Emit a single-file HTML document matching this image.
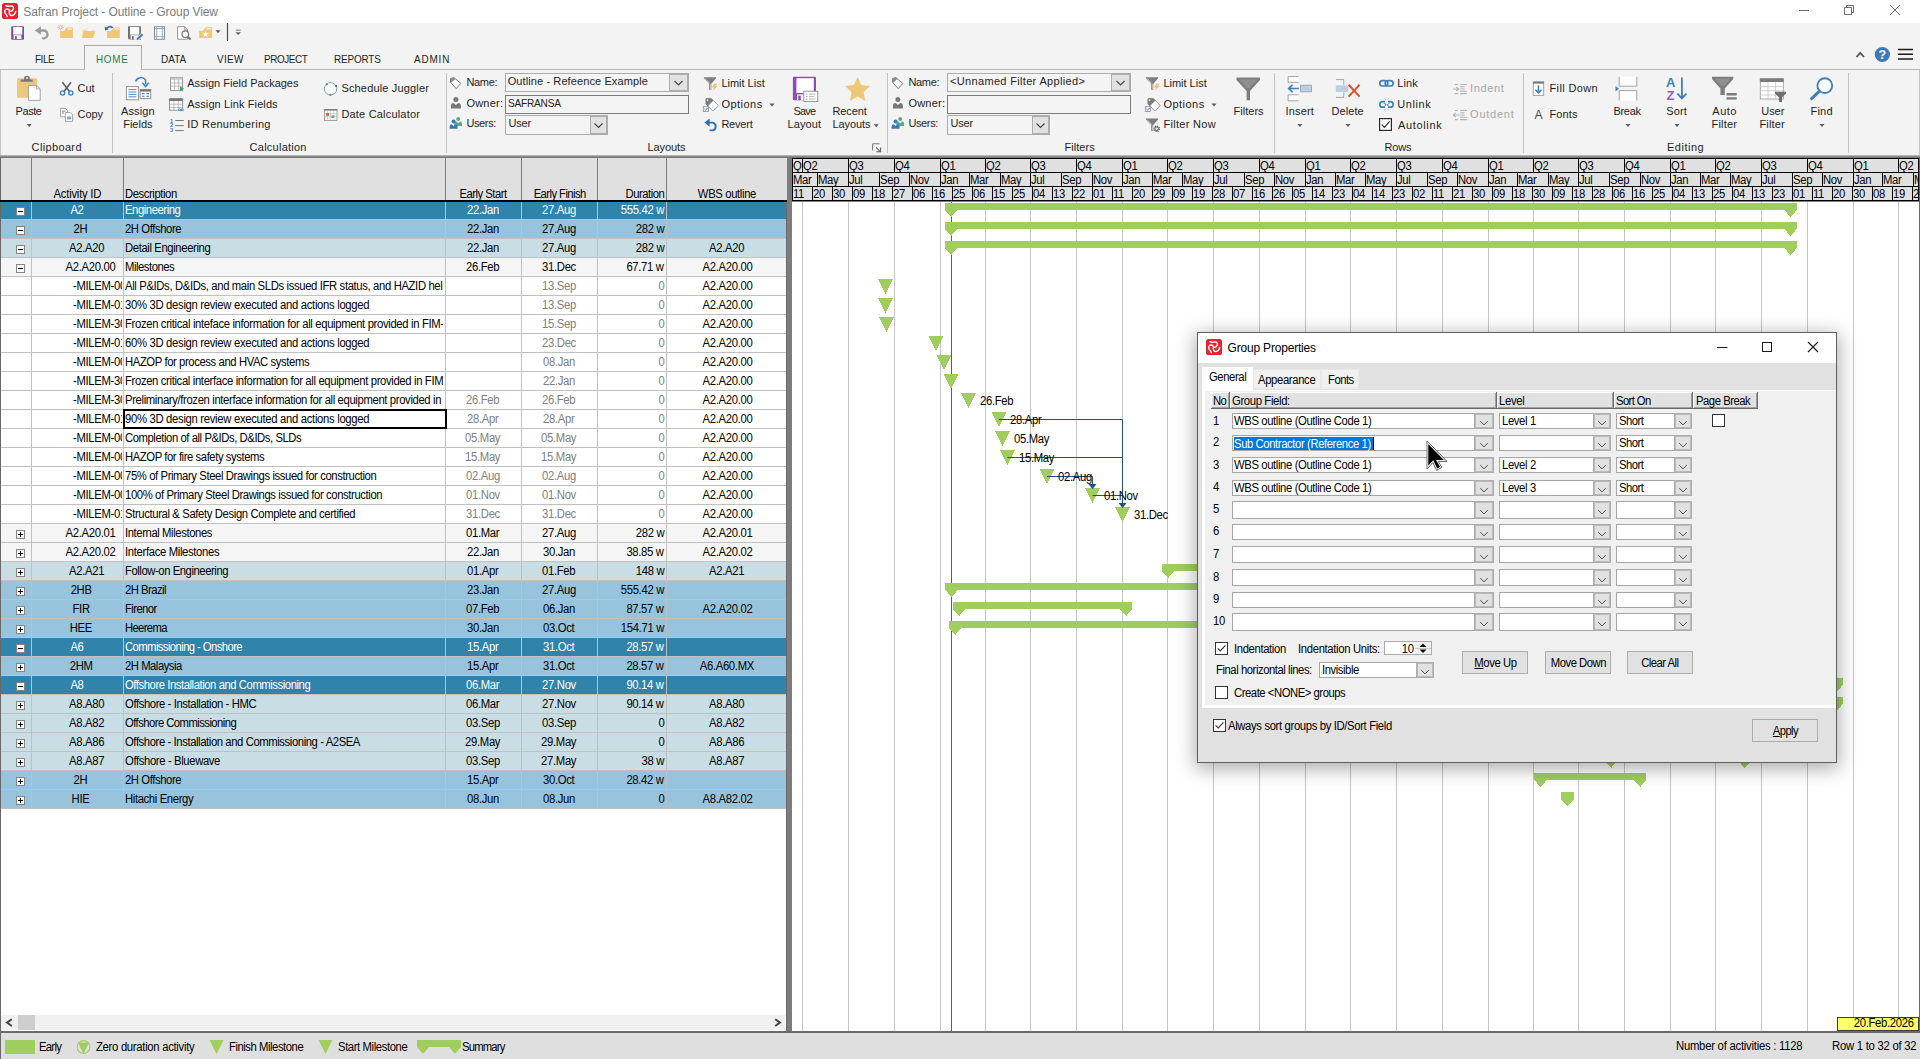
<!DOCTYPE html>
<html><head><meta charset="utf-8"><title>Safran Project - Outline - Group View</title>
<style>
html,body{margin:0;padding:0;}
body{width:1920px;height:1059px;overflow:hidden;background:#fff;position:relative;font-family:'Liberation Sans',sans-serif;}
body div,body svg{position:absolute;}
u{text-decoration:underline;}
</style></head><body>
<div style="left:0px;top:0px;width:1920px;height:23px;background:#ffffff;"></div>
<div style="left:0px;top:23px;width:1920px;height:133px;background:#f3f3f3;"></div>
<div style="left:0px;top:155px;width:1920px;height:1px;background:#b4b4b4;"></div>
<div style="left:0px;top:156px;width:1920px;height:1px;background:#8c8c8c;"></div>
<div style="left:0px;top:157px;width:1920px;height:1px;background:#787878;"></div>
<svg style="left:2px;top:3px" width="16" height="16" viewBox="0 0 16 16"><rect x="0" y="0" width="16" height="16" rx="2.6" fill="#e7222e"/><path d="M3.9 2.7C5.5 3.6 7.5 3 9.6 3C11.3 3 11.8 5 11.2 6.6C10.8 7.6 9.4 8.4 7.8 8.4C7.4 7 6.8 6.1 5.4 6C3.6 6 2.5 7.4 2.7 9C2.9 10.6 4.6 11.4 5.3 13.6M13.7 8.4C13.2 10.4 12 12.4 10 12.5C8 12.6 6.8 10.6 7.4 8.4" fill="none" stroke="#fff" stroke-width="1.45" stroke-linecap="round" stroke-linejoin="round"/></svg>
<div style="top:3.6px;height:16px;line-height:16px;font-size:12px;color:#7c7c7c;white-space:pre;letter-spacing:-0.087px;left:23.3px;">Safran Project - Outline - Group View</div>
<div style="left:0px;top:69px;width:1920px;height:1px;background:#b9b9b9;"></div>
<div style="left:84px;top:45px;width:58px;height:25px;background:#f3f3f3;border:1px solid #ababab;box-sizing:border-box;border-bottom:none;"></div>
<div style="left:0px;top:70px;width:1px;height:85px;background:#c6c6c6;"></div>
<div style="left:1919px;top:70px;width:1px;height:85px;background:#c6c6c6;"></div>
<div style="top:50.8px;height:16px;line-height:16px;font-size:11px;color:#1e1e1e;white-space:pre;letter-spacing:-0.48px;left:34.5px;"><span style="display:inline-block;transform:scaleX(0.9);transform-origin:0 50%">FILE</span></div>
<div style="top:50.8px;height:16px;line-height:16px;font-size:11px;color:#2b7a4b;white-space:pre;letter-spacing:0.794px;left:96.4px;"><span style="display:inline-block;transform:scaleX(0.9);transform-origin:0 50%">HOME</span></div>
<div style="top:50.8px;height:16px;line-height:16px;font-size:11px;color:#1e1e1e;white-space:pre;letter-spacing:0.08px;left:161.4px;"><span style="display:inline-block;transform:scaleX(0.9);transform-origin:0 50%">DATA</span></div>
<div style="top:50.8px;height:16px;line-height:16px;font-size:11px;color:#1e1e1e;white-space:pre;letter-spacing:0.345px;left:217.3px;"><span style="display:inline-block;transform:scaleX(0.9);transform-origin:0 50%">VIEW</span></div>
<div style="top:50.8px;height:16px;line-height:16px;font-size:11px;color:#1e1e1e;white-space:pre;letter-spacing:-0.429px;left:264.3px;"><span style="display:inline-block;transform:scaleX(0.9);transform-origin:0 50%">PROJECT</span></div>
<div style="top:50.8px;height:16px;line-height:16px;font-size:11px;color:#1e1e1e;white-space:pre;letter-spacing:-0.151px;left:334.2px;"><span style="display:inline-block;transform:scaleX(0.9);transform-origin:0 50%">REPORTS</span></div>
<div style="top:50.8px;height:16px;line-height:16px;font-size:11px;color:#1e1e1e;white-space:pre;letter-spacing:0.961px;left:414.2px;"><span style="display:inline-block;transform:scaleX(0.9);transform-origin:0 50%">ADMIN</span></div>
<div style="left:112px;top:73px;width:1px;height:80px;background:#c2c2c2;"></div>
<div style="left:446px;top:73px;width:1px;height:80px;background:#c2c2c2;"></div>
<div style="left:887px;top:73px;width:1px;height:80px;background:#c2c2c2;"></div>
<div style="left:1274px;top:73px;width:1px;height:80px;background:#c2c2c2;"></div>
<div style="left:1523px;top:73px;width:1px;height:80px;background:#c2c2c2;"></div>
<div style="left:1848px;top:73px;width:1px;height:80px;background:#c2c2c2;"></div>
<div style="top:138.7px;height:16px;line-height:16px;font-size:11px;color:#1e1e1e;white-space:pre;letter-spacing:0.354px;left:31.6px;">Clipboard</div>
<div style="top:138.7px;height:16px;line-height:16px;font-size:11px;color:#1e1e1e;white-space:pre;letter-spacing:0.246px;left:249.6px;">Calculation</div>
<div style="top:138.7px;height:16px;line-height:16px;font-size:11px;color:#1e1e1e;white-space:pre;letter-spacing:-0.082px;left:647.4px;">Layouts</div>
<div style="top:138.7px;height:16px;line-height:16px;font-size:11px;color:#1e1e1e;white-space:pre;letter-spacing:0.038px;left:1064.5px;">Filters</div>
<div style="top:138.7px;height:16px;line-height:16px;font-size:11px;color:#1e1e1e;white-space:pre;letter-spacing:-0.119px;left:1384.4px;">Rows</div>
<div style="top:138.7px;height:16px;line-height:16px;font-size:11px;color:#1e1e1e;white-space:pre;letter-spacing:0.517px;left:1667px;">Editing</div>
<div style="top:102.9px;height:16px;line-height:16px;font-size:11px;color:#1e1e1e;white-space:pre;letter-spacing:-0.409px;left:15.5px;">Paste</div>
<div style="top:79.8px;height:16px;line-height:16px;font-size:11px;color:#1e1e1e;white-space:pre;letter-spacing:0.03px;left:77.5px;">Cut</div>
<div style="top:105.6px;height:16px;line-height:16px;font-size:11px;color:#1e1e1e;white-space:pre;letter-spacing:-0.054px;left:77.5px;">Copy</div>
<div style="top:102.9px;height:16px;line-height:16px;font-size:11px;color:#1e1e1e;white-space:pre;letter-spacing:0.103px;left:121px;">Assign</div>
<div style="top:115.8px;height:16px;line-height:16px;font-size:11px;color:#1e1e1e;white-space:pre;letter-spacing:-0.008px;left:123.2px;">Fields</div>
<div style="top:74.9px;height:16px;line-height:16px;font-size:11px;color:#1e1e1e;white-space:pre;letter-spacing:0.001px;left:187.2px;">Assign Field Packages</div>
<div style="top:95.7px;height:16px;line-height:16px;font-size:11px;color:#1e1e1e;white-space:pre;letter-spacing:0.105px;left:187.2px;">Assign Link Fields</div>
<div style="top:115.7px;height:16px;line-height:16px;font-size:11px;color:#1e1e1e;white-space:pre;letter-spacing:0.237px;left:187.2px;">ID Renumbering</div>
<div style="top:80.0px;height:16px;line-height:16px;font-size:11px;color:#1e1e1e;white-space:pre;letter-spacing:0.167px;left:341.4px;">Schedule Juggler</div>
<div style="top:105.9px;height:16px;line-height:16px;font-size:11px;color:#1e1e1e;white-space:pre;letter-spacing:0.191px;left:341.4px;">Date Calculator</div>
<div style="top:73.8px;height:16px;line-height:16px;font-size:11px;color:#1e1e1e;white-space:pre;letter-spacing:-0.29px;left:466.4px;">Name:</div>
<div style="top:95.2px;height:16px;line-height:16px;font-size:11px;color:#1e1e1e;white-space:pre;letter-spacing:0.242px;left:466.4px;">Owner:</div>
<div style="top:115.1px;height:16px;line-height:16px;font-size:11px;color:#1e1e1e;white-space:pre;letter-spacing:-0.36px;left:466.4px;">Users:</div>
<div style="left:505px;top:73px;width:184px;height:19px;background:#f4f4f4;border:1px solid #ababab;box-sizing:border-box;"></div>
<div style="left:669px;top:74px;width:19px;height:17px;background:#e1e1e1;border:1px solid #adadad;box-sizing:border-box;"></div>
<div style="left:505px;top:95px;width:184px;height:19px;background:#f4f4f4;border:1px solid #7a7a7a;box-sizing:border-box;"></div>
<div style="left:505px;top:115px;width:103px;height:20px;background:#f4f4f4;border:1px solid #ababab;box-sizing:border-box;"></div>
<div style="left:590px;top:116px;width:17px;height:18px;background:#e1e1e1;border:1px solid #adadad;box-sizing:border-box;"></div>
<div style="top:115.1px;height:16px;line-height:16px;font-size:11px;color:#1e1e1e;white-space:pre;letter-spacing:-0.181px;left:508.4px;">User</div>
<div style="top:74.5px;height:16px;line-height:16px;font-size:11px;color:#1e1e1e;white-space:pre;letter-spacing:-0.011px;left:721.4px;">Limit List</div>
<div style="top:95.9px;height:16px;line-height:16px;font-size:11px;color:#1e1e1e;white-space:pre;letter-spacing:0.474px;left:721.4px;">Options</div>
<div style="top:73.8px;height:16px;line-height:16px;font-size:11px;color:#1e1e1e;white-space:pre;letter-spacing:-0.29px;left:908.4px;">Name:</div>
<div style="top:95.2px;height:16px;line-height:16px;font-size:11px;color:#1e1e1e;white-space:pre;letter-spacing:0.242px;left:908.4px;">Owner:</div>
<div style="top:115.1px;height:16px;line-height:16px;font-size:11px;color:#1e1e1e;white-space:pre;letter-spacing:-0.36px;left:908.4px;">Users:</div>
<div style="left:947px;top:73px;width:184px;height:19px;background:#f4f4f4;border:1px solid #ababab;box-sizing:border-box;"></div>
<div style="left:1111px;top:74px;width:19px;height:17px;background:#e1e1e1;border:1px solid #adadad;box-sizing:border-box;"></div>
<div style="left:947px;top:95px;width:184px;height:19px;background:#f4f4f4;border:1px solid #7a7a7a;box-sizing:border-box;"></div>
<div style="left:947px;top:115px;width:103px;height:20px;background:#f4f4f4;border:1px solid #ababab;box-sizing:border-box;"></div>
<div style="left:1032px;top:116px;width:17px;height:18px;background:#e1e1e1;border:1px solid #adadad;box-sizing:border-box;"></div>
<div style="top:115.1px;height:16px;line-height:16px;font-size:11px;color:#1e1e1e;white-space:pre;letter-spacing:-0.181px;left:950.4px;">User</div>
<div style="top:74.5px;height:16px;line-height:16px;font-size:11px;color:#1e1e1e;white-space:pre;letter-spacing:-0.011px;left:1163.4px;">Limit List</div>
<div style="top:95.9px;height:16px;line-height:16px;font-size:11px;color:#1e1e1e;white-space:pre;letter-spacing:0.474px;left:1163.4px;">Options</div>
<div style="top:73.1px;height:16px;line-height:16px;font-size:11px;color:#1e1e1e;white-space:pre;letter-spacing:0.103px;left:507.7px;">Outline - Refeence Example</div>
<div style="top:95.2px;height:16px;line-height:16px;font-size:11px;color:#1e1e1e;white-space:pre;letter-spacing:-0.254px;left:507.7px;"><span style="display:inline-block;transform:scaleX(0.92);transform-origin:0 50%">SAFRANSA</span></div>
<div style="top:73.1px;height:16px;line-height:16px;font-size:11px;color:#1e1e1e;white-space:pre;letter-spacing:0.332px;left:950px;">&lt;Unnamed Filter Applied&gt;</div>
<div style="top:115.8px;height:16px;line-height:16px;font-size:11px;color:#1e1e1e;white-space:pre;letter-spacing:-0.219px;left:721.4px;">Revert</div>
<div style="top:115.8px;height:16px;line-height:16px;font-size:11px;color:#1e1e1e;white-space:pre;letter-spacing:0.304px;left:1163.4px;">Filter Now</div>
<div style="top:102.9px;height:16px;line-height:16px;font-size:11px;color:#1e1e1e;white-space:pre;letter-spacing:-0.851px;left:793.6px;">Save</div>
<div style="top:115.8px;height:16px;line-height:16px;font-size:11px;color:#1e1e1e;white-space:pre;letter-spacing:0.085px;left:787.5px;">Layout</div>
<div style="top:102.9px;height:16px;line-height:16px;font-size:11px;color:#1e1e1e;white-space:pre;letter-spacing:-0.102px;left:832.4px;">Recent</div>
<div style="top:115.8px;height:16px;line-height:16px;font-size:11px;color:#1e1e1e;white-space:pre;letter-spacing:-0.082px;left:832.4px;">Layouts</div>
<div style="top:102.9px;height:16px;line-height:16px;font-size:11px;color:#1e1e1e;white-space:pre;letter-spacing:0.023px;left:1233.5px;">Filters</div>
<div style="top:102.9px;height:16px;line-height:16px;font-size:11px;color:#1e1e1e;white-space:pre;letter-spacing:0.161px;left:1285.6px;">Insert</div>
<div style="top:102.9px;height:16px;line-height:16px;font-size:11px;color:#1e1e1e;white-space:pre;letter-spacing:0.055px;left:1331.6px;">Delete</div>
<div style="top:74.5px;height:16px;line-height:16px;font-size:11px;color:#1e1e1e;white-space:pre;letter-spacing:0.118px;left:1397.3px;">Link</div>
<div style="top:95.9px;height:16px;line-height:16px;font-size:11px;color:#1e1e1e;white-space:pre;letter-spacing:0.586px;left:1397.3px;">Unlink</div>
<div style="top:116.7px;height:16px;line-height:16px;font-size:11px;color:#1e1e1e;white-space:pre;letter-spacing:0.648px;left:1398px;">Autolink</div>
<div style="top:80.3px;height:16px;line-height:16px;font-size:11px;color:#a6a6a6;white-space:pre;letter-spacing:0.601px;left:1470.1px;">Indent</div>
<div style="top:106.0px;height:16px;line-height:16px;font-size:11px;color:#a6a6a6;white-space:pre;letter-spacing:0.748px;left:1470.1px;">Outdent</div>
<div style="top:80.3px;height:16px;line-height:16px;font-size:11px;color:#1e1e1e;white-space:pre;letter-spacing:0.372px;left:1549.5px;">Fill Down</div>
<div style="top:106.0px;height:16px;line-height:16px;font-size:11px;color:#1e1e1e;white-space:pre;letter-spacing:0.108px;left:1549.5px;">Fonts</div>
<div style="top:102.9px;height:16px;line-height:16px;font-size:11px;color:#1e1e1e;white-space:pre;letter-spacing:-0.278px;left:1613.4px;">Break</div>
<div style="top:102.9px;height:16px;line-height:16px;font-size:11px;color:#1e1e1e;white-space:pre;letter-spacing:0.118px;left:1666.2px;">Sort</div>
<div style="top:102.9px;height:16px;line-height:16px;font-size:11px;color:#1e1e1e;white-space:pre;letter-spacing:0.503px;left:1712.3px;">Auto</div>
<div style="top:115.8px;height:16px;line-height:16px;font-size:11px;color:#1e1e1e;white-space:pre;letter-spacing:0.172px;left:1711.6px;">Filter</div>
<div style="top:102.9px;height:16px;line-height:16px;font-size:11px;color:#1e1e1e;white-space:pre;letter-spacing:-0.067px;left:1761.3px;">User</div>
<div style="top:115.8px;height:16px;line-height:16px;font-size:11px;color:#1e1e1e;white-space:pre;letter-spacing:0.172px;left:1759.4px;">Filter</div>
<div style="top:102.9px;height:16px;line-height:16px;font-size:11px;color:#1e1e1e;white-space:pre;letter-spacing:0.284px;left:1810.4px;">Find</div>
<svg style="left:0;top:0" width="1920" height="158" viewBox="0 0 1920 158"><path d="M1799 10.5H1809" stroke="#6e6e6e" stroke-width="1"/><path d="M1844.5 7.5H1851.5V14.5H1844.5Z M1846.5 7.5V5.5H1853.5V12.5H1851.5" fill="none" stroke="#6e6e6e" stroke-width="1"/><path d="M1890 5L1900 15M1900 5L1890 15" stroke="#6e6e6e" stroke-width="1"/><path d="M1856.5 57L1860.2 52.8L1864 57" fill="none" stroke="#555" stroke-width="1.8"/><circle cx="1882.4" cy="54.5" r="7.6" fill="#3e78b8"/><text x="1882.4" y="59" font-family="Liberation Sans,sans-serif" font-size="12.5" font-weight="700" fill="#fff" text-anchor="middle">?</text><path d="M1898 49.5H1913M1898 54.3H1913M1898 59H1913" stroke="#1a1a1a" stroke-width="1.6"/><path d="M26.7 124H31.7L29.2 127Z" fill="#5a5a5a"/><path d="M1297.4 124H1302.4L1299.9 127Z" fill="#5a5a5a"/><path d="M1345.5 124H1350.5L1348 127Z" fill="#5a5a5a"/><path d="M1625.5 124H1630.5L1628 127Z" fill="#5a5a5a"/><path d="M1674.5 124H1679.5L1677 127Z" fill="#5a5a5a"/><path d="M1819.5 124H1824.5L1822 127Z" fill="#5a5a5a"/><path d="M873.7 124.2H878.7L876.2 127.2Z" fill="#5a5a5a"/><path d="M769.5 103.5H774.5L772 106.5Z" fill="#5a5a5a"/><path d="M1211.5 103.5H1216.5L1214 106.5Z" fill="#5a5a5a"/><path d="M215.5 30.3H220.5L218 33.3Z" fill="#5a5a5a"/><path d="M674.5 81L678.5 85L682.5 81" fill="none" stroke="#444" stroke-width="1.1"/><path d="M1116.5 81L1120.5 85L1124.5 81" fill="none" stroke="#444" stroke-width="1.1"/><path d="M594.5 123.5L598.5 127.5L602.5 123.5" fill="none" stroke="#444" stroke-width="1.1"/><path d="M1036.5 123.5L1040.5 127.5L1044.5 123.5" fill="none" stroke="#444" stroke-width="1.1"/><path d="M227.5 23V41" stroke="#4a4a4a" stroke-width="1.2"/><path d="M235.8 30.2H240.6" stroke="#777" stroke-width="1"/><path d="M235.4 32.2H241L238.2 35.1Z" fill="#666"/><rect x="11.2" y="26.2" width="12.8" height="13.5" rx="0.9" fill="#8348a5"/><rect x="13.2" y="27.0" width="9.1" height="7.6" fill="#fff"/><rect x="13.6" y="35.2" width="7.8" height="3.8" fill="#fff"/><rect x="15.0" y="36.2" width="1.8" height="2.8" fill="#8348a5"/><path d="M39 30.5H43.6A3.9 3.9 0 0 1 43.6 38.3H43" fill="none" stroke="#9a9a9a" stroke-width="2.3" stroke-linecap="round"/><path d="M34.9 30.5L40.8 26.2V34.8Z" fill="#9a9a9a"/><path d="M60.1 30.9H64.0L66.5 27.5H72.9V37.9H60.1Z" fill="#eec77a"/><path d="M67.4 29.0H72.2" stroke="#fff" stroke-width="0.9"/><circle cx="60.6" cy="27.5" r="1.5" fill="#fff" stroke="#e3ad45" stroke-width="0.9"/><path d="M60.6 24.6V25.4M60.6 29.6V30.4M57.7 27.5H58.5M62.7 27.5H63.5M58.5 25.4L59.1 26M62.7 25.4L62.1 26M58.5 29.6L59.1 29" stroke="#e3ad45" stroke-width="0.9"/><path d="M82.3 29.6H86.3L87.6 27.9H92.8V37.9H82.3Z" fill="#f3dca8"/><path d="M87.4 28.4H92.3V31H87.4Z" fill="#fff"/><path d="M84 31.1H95.5L93.1 37.9H81.9Z" fill="#eec77a"/><path d="M107 30.9H110.9L113.4 27.5H119.8V37.9H107Z" fill="#eec77a"/><path d="M114.3 29.0H119.1" stroke="#fff" stroke-width="0.9"/><path d="M106.4 29.3A3.6 3.6 0 0 1 112.6 27.9" fill="none" stroke="#2f6fb5" stroke-width="1.7"/><path d="M104.7 26.6L105 30.5L108.7 29.6Z" fill="#2f6fb5"/><path d="M128 26.2H140.9V39.7H130.5Q128 39.7 128 37Z" fill="#6e6e6e"/><rect x="130" y="27" width="9.2" height="7.6" fill="#fff"/><rect x="130.6" y="35.2" width="7.6" height="4.5" fill="#fff"/><rect x="132" y="36.2" width="1.8" height="3.5" fill="#6e6e6e"/><path d="M137 39.5L142.6 34.2" stroke="#f3f3f3" stroke-width="3.6"/><path d="M137 39.6L142.6 34.3" stroke="#3a78c0" stroke-width="2"/><rect x="154.5" y="26.7" width="10" height="12.6" fill="#fff" stroke="#8a8a8a" stroke-width="1"/><path d="M156.7 27V39M162.3 27V39M155 28.5H164M155 36.6H164" stroke="#7aa5da" stroke-width="0.9"/><path d="M177.6 26.7H184.6L187.5 29.8V39.2H177.6Z" fill="#fff" stroke="#8a8a8a" stroke-width="0.9"/><path d="M184.6 26.7V29.8H187.5" fill="none" stroke="#8a8a8a" stroke-width="0.8"/><circle cx="185.3" cy="34.2" r="3.3" fill="#fff" stroke="#6e6e6e" stroke-width="1.1"/><path d="M187.7 36.7L190.6 39.5" stroke="#6e6e6e" stroke-width="1.9"/><path d="M199.2 30.7H203.1L205.6 27.3H212.1V38.0H199.2Z" fill="#eec77a"/><path d="M206.5 28.8H211.4" stroke="#fff" stroke-width="0.9"/><polygon points="205.60,30.90 206.48,33.09 208.83,33.25 207.03,34.76 207.60,37.05 205.60,35.80 203.60,37.05 204.17,34.76 202.37,33.25 204.72,33.09" fill="#fff"/><rect x="17" y="78.2" width="20" height="19.5" rx="1" fill="#eec77a"/><path d="M20.8 81.8V79.4H24.2V77.6Q24.2 76 25.8 76H28.2Q29.8 76 29.8 77.6V79.4H32.8V81.8Z" fill="#777"/><circle cx="27" cy="78" r="0.95" fill="#f3f3f3"/><path d="M28.4 85.4H36.6L40.2 89V100.4H28.4Z" fill="#fff" stroke="#9a9a9a" stroke-width="0.9"/><path d="M36.6 85.4V89H40.2" fill="none" stroke="#9a9a9a" stroke-width="0.8"/><path d="M62.4 82.3L69.8 92M71 82.3L63.6 92" stroke="#5a5a5a" stroke-width="1.5"/><circle cx="62.6" cy="93" r="2.1" fill="none" stroke="#3f7fc0" stroke-width="1.3"/><circle cx="70.8" cy="93" r="2.1" fill="none" stroke="#3f7fc0" stroke-width="1.3"/><path d="M60.6 108.4H65.4L67.6 110.6V116.8H60.6Z" fill="#fff" stroke="#8a8a8a" stroke-width="0.8"/><path d="M62 111.2H65.2M62 113H64" stroke="#3f7fc0" stroke-width="0.9"/><path d="M65.4 112.6H70.4L72.6 114.8V121.4H65.4Z" fill="#fff" stroke="#8a8a8a" stroke-width="0.8"/><path d="M67 117.2H71M67 118.8H71" stroke="#3f7fc0" stroke-width="1"/><rect x="126.4" y="86.6" width="12" height="13.2" fill="#fff" stroke="#8a8a8a" stroke-width="0.9"/><path d="M128.4 89.6H136.4M128.4 92H136.4M128.4 94.4H136.4M128.4 96.8H136.4" stroke="#3f7fc0" stroke-width="0.9"/><rect x="140.2" y="89.4" width="10.6" height="9.2" fill="#fff" stroke="#8a8a8a" stroke-width="0.9"/><rect x="140.2" y="89.4" width="10.6" height="2.2" fill="#777"/><path d="M142 93.6H144.6M146.4 93.6H149M142 96.2H144.6M146.4 96.2H149" stroke="#3f7fc0" stroke-width="1.1"/><path d="M135.6 81.4A5.6 5.6 0 0 1 145.6 80.2V84.6" fill="none" stroke="#3f7fc0" stroke-width="1.5"/><path d="M142.4 82.8L145.6 86.6L148.8 82.8" fill="none" stroke="#3f7fc0" stroke-width="1.5"/><rect x="170.6" y="77.4" width="12" height="13.2" fill="#fff" stroke="#8a8a8a" stroke-width="0.9"/><rect x="170.6" y="77.4" width="12" height="2.4" fill="#c8c8c8"/><path d="M170.6 83.0H182.6M170.6 86.2H182.6M174.6 79.8V90.6M178.6 79.8V90.6" stroke="#a0a0a0" stroke-width="0.7"/><path d="M180 86.2L184 88.7L180 91.2Z" fill="#3ea36f"/><rect x="169.5" y="98.6" width="13.2" height="11.6" fill="#fff" stroke="#8a8a8a" stroke-width="0.9"/><rect x="169.5" y="98.6" width="13.2" height="2.4" fill="#777"/><path d="M169.5 104.2H182.7M169.5 107.4H182.7M173.9 101.0V110.2M178.3 101.0V110.2" stroke="#a0a0a0" stroke-width="0.7"/><rect x="177.2" y="108.6" width="6.6" height="3.2" rx="1.4" fill="#f3f3f3"/><path d="M178.2 110.2A1.3 1.3 0 0 1 180.8 110.2A1.3 1.3 0 0 1 183.4 110.2" fill="none" stroke="#3f7fc0" stroke-width="1"/><path d="M178.2 110.6H183.4" stroke="#3f7fc0" stroke-width="0.9"/><text x="170" y="122.6" font-family="Liberation Sans,sans-serif" font-size="5.6" font-weight="700" fill="#3f7fc0">1</text><text x="170" y="127.4" font-family="Liberation Sans,sans-serif" font-size="5.6" font-weight="700" fill="#3f7fc0">2</text><text x="170" y="132.2" font-family="Liberation Sans,sans-serif" font-size="5.6" font-weight="700" fill="#3f7fc0">3</text><path d="M175.2 120.5H183.8M175.2 125.6H183.8M175.2 130.6H183.8" stroke="#777" stroke-width="1"/><circle cx="330.6" cy="88.8" r="6.2" fill="#fff" stroke="#6b9bd6" stroke-width="0.9"/><circle cx="326.8" cy="84.4" r="1.05" fill="#777"/><circle cx="336.1" cy="85.9" r="1.1" fill="#666"/><circle cx="330.3" cy="94.9" r="1.05" fill="#777"/><rect x="324.4" y="109.6" width="12.6" height="10.8" fill="#fff" stroke="#8a8a8a" stroke-width="0.8"/><rect x="324" y="109.2" width="13.4" height="1.4" fill="#777"/><path d="M327.4 110.6V120.4M330.6 110.6V120.4M333.8 110.6V120.4M324.4 113.6H337M324.4 116.8H337" stroke="#b5b5b5" stroke-width="0.6"/><rect x="326.2" y="113.2" width="2.8" height="2.6" fill="#e0502c"/><rect x="331.4" y="115.4" width="2.8" height="2.6" fill="#5aa784"/><path d="M450.4 78.6L453.8 77.6L460.8 83.4L456.2 88.6L450.6 82.4Z" fill="#fff" stroke="#7a7a7a" stroke-width="1"/><path d="M450.4 78.6L453.8 77.6L455.4 79L451.4 82.6L450.6 82.4Z" fill="#8a8a8a"/><circle cx="455.9" cy="99.5" r="2.5" fill="#777"/><path d="M450.9 108.5V105.9Q450.9 102.9 453.5 102.9L455.9 105.1L458.3 102.9Q460.9 102.9 460.9 105.9V108.5Z" fill="#777"/><circle cx="458.2" cy="118.93" r="1.95" fill="#5aa784"/><path d="M454.3 125.95V123.92Q454.3 121.58 456.328 121.58L458.2 123.296L460.072 121.58Q462.1 121.58 462.1 123.92V125.95Z" fill="#5aa784"/><circle cx="453.6" cy="121.58" r="2.0" fill="#3b78ba"/><path d="M449.6 128.78V126.7Q449.6 124.3 451.68 124.3L453.6 126.06L455.52 124.3Q457.6 124.3 457.6 126.7V128.78Z" fill="#3b78ba"/><path d="M703.9 77.3H716.1V78.2L711.3 83.7V89.8H709.1V83.7L703.9 78.2Z" fill="#7d7d7d"/><rect x="709.8" y="84.1" width="0.9" height="5.2" fill="#dcdcdc"/><path d="M705.2 78.4L709.6 83.4" stroke="#f3f3f3" stroke-width="0.7"/><path d="M714.4 83.8L711.9 87.4H714.1L712.6 90.8L717.6 85.8H715.2L717.8 83.8Z" fill="#f0bf68"/><path d="M705.9 99.2Q705.9 98.4 706.8 98.4H711.2L717.9 105.1Q718.4 105.7 717.8 106.3L713.6 110.6Q713 111.2 712.4 110.6L705.9 104Z" fill="#fff" stroke="#8a8a8a" stroke-width="0.9"/><path d="M705.9 99.2Q705.9 98.4 706.8 98.4H711.2L713.4 100.6L707.8 106.2L705.9 104Z" fill="#7d7d7d"/><circle cx="707.5" cy="100.2" r="0.8" fill="#fff"/><rect x="703.3" y="106.7" width="5.2" height="4.8" fill="#f3f3f3" stroke="#8a8a8a" stroke-width="0.8"/><path d="M704.4 109L705.6 110.2L707.8 107.8" fill="none" stroke="#3f7fc0" stroke-width="1"/><path d="M708 122.6H712.6A4 4 0 0 1 712.6 130.4H709.6" fill="none" stroke="#2f6fb5" stroke-width="1.9"/><path d="M704.4 122.6L709.6 118.4V126.8Z" fill="#2f6fb5"/><rect x="792.9" y="76.8" width="23.1" height="23.4" rx="1.2" fill="#8c4bb5"/><rect x="796.4" y="78.2" width="17.4" height="14.8" fill="#fff"/><rect x="797" y="94.4" width="9" height="5.8" fill="#fff"/><rect x="798.2" y="95.6" width="2.6" height="4.6" fill="#8c4bb5"/><rect x="803.8" y="91.2" width="14" height="10.4" fill="#fff" stroke="#8a8a8a" stroke-width="0.9"/><path d="M806 94.2H807.4M806 96.6H807.4M806 99H807.4" stroke="#8a8a8a" stroke-width="0.9"/><path d="M809 94.2H815.6M809 96.6H814.4M809 99H815.6" stroke="#b0b0b0" stroke-width="0.9"/><polygon points="857.60,77.00 861.30,85.10 870.15,86.12 863.59,92.15 865.36,100.88 857.60,96.50 849.84,100.88 851.61,92.15 845.05,86.12 853.90,85.10" fill="#efc779"/><path d="M872.6 150.6V143.8H879.6" fill="none" stroke="#777" stroke-width="1"/><path d="M876 147.4L880 151.4M880.6 147.6V151.8H876.4" fill="none" stroke="#666" stroke-width="1.1"/><path d="M892.4 78.6L895.8 77.6L902.8 83.4L898.2 88.6L892.6 82.4Z" fill="#fff" stroke="#7a7a7a" stroke-width="1"/><path d="M892.4 78.6L895.8 77.6L897.4 79L893.4 82.6L892.6 82.4Z" fill="#8a8a8a"/><circle cx="897.9" cy="99.5" r="2.5" fill="#777"/><path d="M892.9 108.5V105.9Q892.9 102.9 895.5 102.9L897.9 105.1L900.3 102.9Q902.9 102.9 902.9 105.9V108.5Z" fill="#777"/><circle cx="900.2" cy="118.93" r="1.95" fill="#5aa784"/><path d="M896.3 125.95V123.92Q896.3 121.58 898.33 121.58L900.2 123.296L902.072 121.58Q904.1 121.58 904.1 123.92V125.95Z" fill="#5aa784"/><circle cx="895.6" cy="121.58" r="2.0" fill="#3b78ba"/><path d="M891.6 128.78V126.7Q891.6 124.3 893.68 124.3L895.6 126.06L897.52 124.3Q899.6 124.3 899.6 126.7V128.78Z" fill="#3b78ba"/><path d="M1145.9 77.3H1158.1V78.2L1153.3 83.7V89.8H1151.1V83.7L1145.9 78.2Z" fill="#7d7d7d"/><rect x="1151.8" y="84.1" width="0.9" height="5.2" fill="#dcdcdc"/><path d="M1147.2 78.4L1151.6 83.4" stroke="#f3f3f3" stroke-width="0.7"/><path d="M1156.4 83.8L1153.9 87.4H1156.1L1154.6 90.8L1159.6 85.8H1157.2L1159.8 83.8Z" fill="#f0bf68"/><path d="M1147.9 99.2Q1147.9 98.4 1148.8 98.4H1153.2L1159.9 105.1Q1160.4 105.7 1159.8 106.3L1155.6 110.6Q1155 111.2 1154.4 110.6L1147.9 104Z" fill="#fff" stroke="#8a8a8a" stroke-width="0.9"/><path d="M1147.9 99.2Q1147.9 98.4 1148.8 98.4H1153.2L1155.4 100.6L1149.8 106.2L1147.9 104Z" fill="#7d7d7d"/><circle cx="1149.5" cy="100.2" r="0.8" fill="#fff"/><rect x="1145.3" y="106.7" width="5.2" height="4.8" fill="#f3f3f3" stroke="#8a8a8a" stroke-width="0.8"/><path d="M1146.4 109L1147.6 110.2L1149.8 107.8" fill="none" stroke="#3f7fc0" stroke-width="1"/><path d="M1145.9 118.5H1158.1V119.4L1153.3 124.9V131.0H1151.1V124.9L1145.9 119.4Z" fill="#7d7d7d"/><rect x="1151.8" y="125.3" width="0.9" height="5.2" fill="#dcdcdc"/><path d="M1147.2 119.6L1151.6 124.6" stroke="#f3f3f3" stroke-width="0.7"/><circle cx="1156.7" cy="128.8" r="3.3" fill="#f3f3f3"/><circle cx="1156.7" cy="128.8" r="2.7" fill="none" stroke="#555" stroke-width="1.2" stroke-dasharray="1.1 1.02"/><circle cx="1156.7" cy="128.8" r="1.8" fill="#f3f3f3" stroke="#555" stroke-width="1"/><path d="M1236.5 77.5H1260V80L1250 91V100.2H1246.6V91L1236.5 80Z" fill="#7d7d7d"/><path d="M1239.4 79.6H1257.2L1249.2 88.2H1247.4Z" fill="#8f8f8f"/><path d="M1298.6 76.6H1288.1V82.4H1298.6 M1298.6 94.8H1288.1V100.8H1298.6" fill="#fff" stroke="#9a9a9a" stroke-width="0.9"/><rect x="1300.6" y="85.2" width="10.8" height="6.6" fill="#b9cfe8" stroke="#9a9a9a" stroke-width="0.8"/><path d="M1288.6 88.5H1298.8M1292.6 84.8L1288.6 88.5L1292.6 92.2" fill="none" stroke="#3f7fc0" stroke-width="1.6"/><path d="M1336 79.6H1343.8V85 M1336 97.4H1343.8V92.4" fill="none" stroke="#9a9a9a" stroke-width="0.9"/><rect x="1335.8" y="85.4" width="12.6" height="6.6" fill="#b9cfe8"/><path d="M1348.6 84.8L1359.6 96.6M1359.6 84.8L1348.6 96.6" stroke="#d9532c" stroke-width="2"/><rect x="1379.8" y="80.6" width="8" height="5.4" rx="2.7" fill="none" stroke="#3f7fc0" stroke-width="1.7"/><rect x="1385.2" y="80.6" width="8" height="5.4" rx="2.7" fill="none" stroke="#3f7fc0" stroke-width="1.7"/><path d="M1385 101.6H1382.6A2.8 2.8 0 0 0 1382.6 107.2H1385M1388 101.6H1390.4A2.8 2.8 0 0 1 1390.4 107.2H1388" fill="none" stroke="#3f7fc0" stroke-width="1.7"/><path d="M1383.6 103.2L1386 104.4L1385 106M1389.6 103.2L1387.2 104.6L1388.2 106" fill="none" stroke="#3f7fc0" stroke-width="1"/><path d="M1384.4 98.2L1385.6 100M1388.8 98.2L1387.6 100M1384.4 110.6L1385.6 108.8M1388.8 110.6L1387.6 108.8" stroke="#9cc0e6" stroke-width="0.9"/><rect x="1379.6" y="118.6" width="11.8" height="11.8" fill="#fff" stroke="#2a2a2a" stroke-width="1.2"/><path d="M1381.8 124.6L1384.4 127.4L1389.6 121.4" fill="none" stroke="#2a2a2a" stroke-width="1.2"/><path d="M1454.9 84.5H1458.2M1460.1 84.5H1467M1460.3 86.7H1464.6M1460.3 89.0H1464.6M1460.1 91.3H1467M1454.9 93.6H1458.2M1460.1 93.6H1467" stroke="#b4b4b4" stroke-width="1.1"/><path d="M1453 89.0H1458.4M1456.2 86.9L1458.6 89.0L1456.2 91.1" fill="none" stroke="#b4b4b4" stroke-width="1.2"/><path d="M1454.9 110.5H1458.2M1460.1 110.5H1467M1460.3 112.7H1464.6M1460.3 115.0H1464.6M1460.1 117.3H1467M1454.9 119.6H1458.2M1460.1 119.6H1467" stroke="#b4b4b4" stroke-width="1.1"/><path d="M1453.4 115.0H1459.6M1455.8 112.9L1453.4 115.0L1455.8 117.1" fill="none" stroke="#b4b4b4" stroke-width="1.2"/><rect x="1533.3" y="82" width="10.4" height="13.4" fill="#fff" stroke="#9a9a9a" stroke-width="0.9"/><rect x="1533" y="81.6" width="11" height="2" fill="#777"/><path d="M1538.5 85.6V92.6M1535.4 89.8L1538.5 92.8L1541.6 89.8" fill="none" stroke="#3f7fc0" stroke-width="1.6"/><text x="1538.6" y="118.8" font-family="Liberation Sans,sans-serif" font-size="12" fill="#4a4a4a" text-anchor="middle">A</text><path d="M1619.2 76.8V86.2H1636.8V76.8 M1619.2 100.5V90.6H1636.8V100.5" fill="#fff" stroke="#9a9a9a" stroke-width="0.9"/><path d="M1615.5 86L1619 88.8L1615.5 91.6Z" fill="#3f7fc0"/><text x="1670.6" y="87.4" font-family="Liberation Sans,sans-serif" font-size="13" font-weight="700" fill="#3f7fc0" text-anchor="middle">A</text><text x="1670.4" y="99.8" font-family="Liberation Sans,sans-serif" font-size="13" font-weight="700" fill="#9b59b6" text-anchor="middle">Z</text><path d="M1681.9 77.4V98M1677.4 93.6L1681.9 98.4L1686.4 93.6" fill="none" stroke="#3f7fc0" stroke-width="1.8"/><path d="M1712 76.8H1733.3V79L1724.8 88.4V95H1720.4V88.4L1712 79Z" fill="#7d7d7d"/><path d="M1714.6 78.8H1730.6L1724 86H1721.4Z" fill="#8f8f8f"/><path d="M1726.5 94.2H1736.7M1726.5 98.4H1736.7" stroke="#7d7d7d" stroke-width="2.4"/><rect x="1760.3" y="78.8" width="23" height="20.2" fill="#fff" stroke="#a0a0a0" stroke-width="0.9"/><rect x="1759.9" y="78.4" width="23.8" height="3.6" fill="#7a7a7a"/><path d="M1760.3 86.6H1783.3M1760.3 90.8H1783.3M1760.3 95H1783.3M1768 82V99M1775.6 82V99" stroke="#c4c4c4" stroke-width="0.8"/><path d="M1775 91.8H1786V93.4L1782 97.4V102H1779V97.4L1775 93.4Z" fill="#6e6e6e"/><circle cx="1824.8" cy="85.6" r="7.4" fill="#fff" stroke="#3f7fc0" stroke-width="1.9"/><path d="M1819.2 91.4L1811.6 98.6" stroke="#3f7fc0" stroke-width="3" stroke-linecap="round"/></svg>
<div style="left:0px;top:158px;width:1px;height:901px;background:#696969;"></div>
<div style="left:1px;top:158px;width:786px;height:42px;background:#e0e0e0;"></div>
<div style="left:0px;top:200px;width:787px;height:2px;background:#000000;"></div>
<div style="left:31px;top:158px;width:1px;height:42px;background:#7a7a7a;"></div>
<div style="left:123px;top:158px;width:1px;height:42px;background:#7a7a7a;"></div>
<div style="left:445px;top:158px;width:1px;height:42px;background:#7a7a7a;"></div>
<div style="left:521px;top:158px;width:1px;height:42px;background:#7a7a7a;"></div>
<div style="left:597px;top:158px;width:1px;height:42px;background:#7a7a7a;"></div>
<div style="left:666px;top:158px;width:1px;height:42px;background:#7a7a7a;"></div>
<div style="top:185.5px;height:16px;line-height:16px;font-size:12px;color:#000;white-space:pre;letter-spacing:-0.237px;left:-123px;width:400px;text-align:center;"><span style="display:inline-block;transform:scaleX(0.94);transform-origin:50% 50%">Activity ID</span></div>
<div style="top:185.5px;height:16px;line-height:16px;font-size:12px;color:#000;white-space:pre;letter-spacing:-0.449px;left:125px;"><span style="display:inline-block;transform:scaleX(0.94);transform-origin:0 50%">Description</span></div>
<div style="top:185.5px;height:16px;line-height:16px;font-size:12px;color:#000;white-space:pre;letter-spacing:-0.543px;left:283px;width:400px;text-align:center;"><span style="display:inline-block;transform:scaleX(0.94);transform-origin:50% 50%">Early Start</span></div>
<div style="top:185.5px;height:16px;line-height:16px;font-size:12px;color:#000;white-space:pre;letter-spacing:-0.604px;left:359.5px;width:400px;text-align:center;"><span style="display:inline-block;transform:scaleX(0.94);transform-origin:50% 50%">Early Finish</span></div>
<div style="top:185.5px;height:16px;line-height:16px;font-size:12px;color:#000;white-space:pre;letter-spacing:-0.516px;left:264.5px;width:400px;text-align:right;"><span style="display:inline-block;transform:scaleX(0.94);transform-origin:100% 50%">Duration</span></div>
<div style="top:185.5px;height:16px;line-height:16px;font-size:12px;color:#000;white-space:pre;letter-spacing:-0.382px;left:527px;width:400px;text-align:center;"><span style="display:inline-block;transform:scaleX(0.94);transform-origin:50% 50%">WBS outline</span></div>
<div style="left:1px;top:202px;width:786px;height:17px;background:#3083ab;"></div>
<div style="left:1px;top:219px;width:786px;height:1px;background:#c0c0c0;"></div>
<div style="left:16px;top:207px;width:9px;height:9px;background:#ffffff;border:1px solid #848484;box-sizing:border-box;"></div>
<div style="left:18px;top:211px;width:5px;height:1px;background:#000;"></div>
<div style="top:201.8px;height:16px;line-height:16px;font-size:12px;color:#ffffff;white-space:pre;letter-spacing:-0.34px;left:-123.5px;width:400px;text-align:center;"><span style="display:inline-block;transform:scaleX(0.94);transform-origin:50% 50%">A2</span></div>
<div style="top:201.8px;height:16px;line-height:16px;font-size:12px;color:#ffffff;white-space:pre;letter-spacing:-0.468px;left:125px;width:318px;overflow:hidden;"><span style="display:inline-block;transform:scaleX(0.94);transform-origin:0 50%">Engineering</span></div>
<div style="top:201.8px;height:16px;line-height:16px;font-size:12px;color:#ffffff;white-space:pre;letter-spacing:-0.34px;left:283px;width:400px;text-align:center;"><span style="display:inline-block;transform:scaleX(0.94);transform-origin:50% 50%">22.Jan</span></div>
<div style="top:201.8px;height:16px;line-height:16px;font-size:12px;color:#ffffff;white-space:pre;letter-spacing:-0.34px;left:359px;width:400px;text-align:center;"><span style="display:inline-block;transform:scaleX(0.94);transform-origin:50% 50%">27.Aug</span></div>
<div style="top:201.8px;height:16px;line-height:16px;font-size:12px;color:#ffffff;white-space:pre;letter-spacing:-0.34px;left:264px;width:400px;text-align:right;"><span style="display:inline-block;transform:scaleX(0.94);transform-origin:100% 50%">555.42 w</span></div>
<div style="left:1px;top:220px;width:786px;height:18px;background:#97c4dc;"></div>
<div style="left:1px;top:238px;width:786px;height:1px;background:#c0c0c0;"></div>
<div style="left:16px;top:226px;width:9px;height:9px;background:#ffffff;border:1px solid #848484;box-sizing:border-box;"></div>
<div style="left:18px;top:230px;width:5px;height:1px;background:#000;"></div>
<div style="top:220.8px;height:16px;line-height:16px;font-size:12px;color:#000000;white-space:pre;letter-spacing:-0.34px;left:-119.3px;width:400px;text-align:center;"><span style="display:inline-block;transform:scaleX(0.94);transform-origin:50% 50%">2H</span></div>
<div style="top:220.8px;height:16px;line-height:16px;font-size:12px;color:#000000;white-space:pre;letter-spacing:-0.427px;left:125px;width:318px;overflow:hidden;"><span style="display:inline-block;transform:scaleX(0.94);transform-origin:0 50%">2H Offshore</span></div>
<div style="top:220.8px;height:16px;line-height:16px;font-size:12px;color:#000000;white-space:pre;letter-spacing:-0.34px;left:283px;width:400px;text-align:center;"><span style="display:inline-block;transform:scaleX(0.94);transform-origin:50% 50%">22.Jan</span></div>
<div style="top:220.8px;height:16px;line-height:16px;font-size:12px;color:#000000;white-space:pre;letter-spacing:-0.34px;left:359px;width:400px;text-align:center;"><span style="display:inline-block;transform:scaleX(0.94);transform-origin:50% 50%">27.Aug</span></div>
<div style="top:220.8px;height:16px;line-height:16px;font-size:12px;color:#000000;white-space:pre;letter-spacing:-0.34px;left:264px;width:400px;text-align:right;"><span style="display:inline-block;transform:scaleX(0.94);transform-origin:100% 50%">282 w</span></div>
<div style="left:1px;top:239px;width:786px;height:18px;background:#c9dde4;"></div>
<div style="left:1px;top:257px;width:786px;height:1px;background:#c0c0c0;"></div>
<div style="left:16px;top:245px;width:9px;height:9px;background:#ffffff;border:1px solid #848484;box-sizing:border-box;"></div>
<div style="left:18px;top:249px;width:5px;height:1px;background:#000;"></div>
<div style="top:239.8px;height:16px;line-height:16px;font-size:12px;color:#000000;white-space:pre;letter-spacing:-0.34px;left:-113.6px;width:400px;text-align:center;"><span style="display:inline-block;transform:scaleX(0.94);transform-origin:50% 50%">A2.A20</span></div>
<div style="top:239.8px;height:16px;line-height:16px;font-size:12px;color:#000000;white-space:pre;letter-spacing:-0.406px;left:125px;width:318px;overflow:hidden;"><span style="display:inline-block;transform:scaleX(0.94);transform-origin:0 50%">Detail Engineering</span></div>
<div style="top:239.8px;height:16px;line-height:16px;font-size:12px;color:#000000;white-space:pre;letter-spacing:-0.34px;left:283px;width:400px;text-align:center;"><span style="display:inline-block;transform:scaleX(0.94);transform-origin:50% 50%">22.Jan</span></div>
<div style="top:239.8px;height:16px;line-height:16px;font-size:12px;color:#000000;white-space:pre;letter-spacing:-0.34px;left:359px;width:400px;text-align:center;"><span style="display:inline-block;transform:scaleX(0.94);transform-origin:50% 50%">27.Aug</span></div>
<div style="top:239.8px;height:16px;line-height:16px;font-size:12px;color:#000000;white-space:pre;letter-spacing:-0.34px;left:264px;width:400px;text-align:right;"><span style="display:inline-block;transform:scaleX(0.94);transform-origin:100% 50%">282 w</span></div>
<div style="top:239.8px;height:16px;line-height:16px;font-size:12px;color:#000000;white-space:pre;letter-spacing:-0.34px;left:527px;width:400px;text-align:center;"><span style="display:inline-block;transform:scaleX(0.94);transform-origin:50% 50%">A2.A20</span></div>
<div style="left:1px;top:258px;width:786px;height:18px;background:#f5f5f5;"></div>
<div style="left:1px;top:276px;width:786px;height:1px;background:#c0c0c0;"></div>
<div style="left:16px;top:264px;width:9px;height:9px;background:#ffffff;border:1px solid #848484;box-sizing:border-box;"></div>
<div style="left:18px;top:268px;width:5px;height:1px;background:#000;"></div>
<div style="top:258.8px;height:16px;line-height:16px;font-size:12px;color:#000000;white-space:pre;letter-spacing:-0.34px;left:-109.2px;width:400px;text-align:center;"><span style="display:inline-block;transform:scaleX(0.94);transform-origin:50% 50%">A2.A20.00</span></div>
<div style="top:258.8px;height:16px;line-height:16px;font-size:12px;color:#000000;white-space:pre;letter-spacing:-0.495px;left:125px;width:318px;overflow:hidden;"><span style="display:inline-block;transform:scaleX(0.94);transform-origin:0 50%">Milestones</span></div>
<div style="top:258.8px;height:16px;line-height:16px;font-size:12px;color:#000000;white-space:pre;letter-spacing:-0.34px;left:283px;width:400px;text-align:center;"><span style="display:inline-block;transform:scaleX(0.94);transform-origin:50% 50%">26.Feb</span></div>
<div style="top:258.8px;height:16px;line-height:16px;font-size:12px;color:#000000;white-space:pre;letter-spacing:-0.34px;left:359px;width:400px;text-align:center;"><span style="display:inline-block;transform:scaleX(0.94);transform-origin:50% 50%">31.Dec</span></div>
<div style="top:258.8px;height:16px;line-height:16px;font-size:12px;color:#000000;white-space:pre;letter-spacing:-0.34px;left:264px;width:400px;text-align:right;"><span style="display:inline-block;transform:scaleX(0.94);transform-origin:100% 50%">67.71 w</span></div>
<div style="top:258.8px;height:16px;line-height:16px;font-size:12px;color:#000000;white-space:pre;letter-spacing:-0.34px;left:527px;width:400px;text-align:center;"><span style="display:inline-block;transform:scaleX(0.94);transform-origin:50% 50%">A2.A20.00</span></div>
<div style="left:1px;top:277px;width:786px;height:18px;background:#ffffff;"></div>
<div style="left:1px;top:295px;width:786px;height:1px;background:#c0c0c0;"></div>
<div style="top:277.8px;height:16px;line-height:16px;font-size:12px;color:#000000;white-space:pre;letter-spacing:-0.34px;left:73px;width:48.5px;overflow:hidden;"><span style="display:inline-block;transform:scaleX(0.94);transform-origin:0 50%">-MILEM-001</span></div>
<div style="top:277.8px;height:16px;line-height:16px;font-size:12px;color:#000000;white-space:pre;letter-spacing:-0.382px;left:125px;width:318px;overflow:hidden;"><span style="display:inline-block;transform:scaleX(0.94);transform-origin:0 50%">All P&amp;IDs, D&amp;IDs, and main SLDs issued IFR status, and HAZID held</span></div>
<div style="top:277.8px;height:16px;line-height:16px;font-size:12px;color:#808080;white-space:pre;letter-spacing:-0.34px;left:359px;width:400px;text-align:center;"><span style="display:inline-block;transform:scaleX(0.94);transform-origin:50% 50%">13.Sep</span></div>
<div style="top:277.8px;height:16px;line-height:16px;font-size:12px;color:#808080;white-space:pre;letter-spacing:-0.34px;left:264px;width:400px;text-align:right;"><span style="display:inline-block;transform:scaleX(0.94);transform-origin:100% 50%">0</span></div>
<div style="top:277.8px;height:16px;line-height:16px;font-size:12px;color:#000000;white-space:pre;letter-spacing:-0.34px;left:527px;width:400px;text-align:center;"><span style="display:inline-block;transform:scaleX(0.94);transform-origin:50% 50%">A2.A20.00</span></div>
<div style="left:1px;top:296px;width:786px;height:18px;background:#ffffff;"></div>
<div style="left:1px;top:314px;width:786px;height:1px;background:#c0c0c0;"></div>
<div style="top:296.8px;height:16px;line-height:16px;font-size:12px;color:#000000;white-space:pre;letter-spacing:-0.34px;left:73px;width:48.5px;overflow:hidden;"><span style="display:inline-block;transform:scaleX(0.94);transform-origin:0 50%">-MILEM-011</span></div>
<div style="top:296.8px;height:16px;line-height:16px;font-size:12px;color:#000000;white-space:pre;letter-spacing:-0.327px;left:125px;width:318px;overflow:hidden;"><span style="display:inline-block;transform:scaleX(0.94);transform-origin:0 50%">30% 3D design review executed and actions logged</span></div>
<div style="top:296.8px;height:16px;line-height:16px;font-size:12px;color:#808080;white-space:pre;letter-spacing:-0.34px;left:359px;width:400px;text-align:center;"><span style="display:inline-block;transform:scaleX(0.94);transform-origin:50% 50%">13.Sep</span></div>
<div style="top:296.8px;height:16px;line-height:16px;font-size:12px;color:#808080;white-space:pre;letter-spacing:-0.34px;left:264px;width:400px;text-align:right;"><span style="display:inline-block;transform:scaleX(0.94);transform-origin:100% 50%">0</span></div>
<div style="top:296.8px;height:16px;line-height:16px;font-size:12px;color:#000000;white-space:pre;letter-spacing:-0.34px;left:527px;width:400px;text-align:center;"><span style="display:inline-block;transform:scaleX(0.94);transform-origin:50% 50%">A2.A20.00</span></div>
<div style="left:1px;top:315px;width:786px;height:18px;background:#ffffff;"></div>
<div style="left:1px;top:333px;width:786px;height:1px;background:#c0c0c0;"></div>
<div style="top:315.8px;height:16px;line-height:16px;font-size:12px;color:#000000;white-space:pre;letter-spacing:-0.34px;left:73px;width:48.5px;overflow:hidden;"><span style="display:inline-block;transform:scaleX(0.94);transform-origin:0 50%">-MILEM-301</span></div>
<div style="top:315.8px;height:16px;line-height:16px;font-size:12px;color:#000000;white-space:pre;letter-spacing:-0.363px;left:125px;width:318px;overflow:hidden;"><span style="display:inline-block;transform:scaleX(0.94);transform-origin:0 50%">Frozen critical inteface information for all equipment provided in FIM-</span></div>
<div style="top:315.8px;height:16px;line-height:16px;font-size:12px;color:#808080;white-space:pre;letter-spacing:-0.34px;left:359px;width:400px;text-align:center;"><span style="display:inline-block;transform:scaleX(0.94);transform-origin:50% 50%">15.Sep</span></div>
<div style="top:315.8px;height:16px;line-height:16px;font-size:12px;color:#808080;white-space:pre;letter-spacing:-0.34px;left:264px;width:400px;text-align:right;"><span style="display:inline-block;transform:scaleX(0.94);transform-origin:100% 50%">0</span></div>
<div style="top:315.8px;height:16px;line-height:16px;font-size:12px;color:#000000;white-space:pre;letter-spacing:-0.34px;left:527px;width:400px;text-align:center;"><span style="display:inline-block;transform:scaleX(0.94);transform-origin:50% 50%">A2.A20.00</span></div>
<div style="left:1px;top:334px;width:786px;height:18px;background:#ffffff;"></div>
<div style="left:1px;top:352px;width:786px;height:1px;background:#c0c0c0;"></div>
<div style="top:334.8px;height:16px;line-height:16px;font-size:12px;color:#000000;white-space:pre;letter-spacing:-0.34px;left:73px;width:48.5px;overflow:hidden;"><span style="display:inline-block;transform:scaleX(0.94);transform-origin:0 50%">-MILEM-012</span></div>
<div style="top:334.8px;height:16px;line-height:16px;font-size:12px;color:#000000;white-space:pre;letter-spacing:-0.327px;left:125px;width:318px;overflow:hidden;"><span style="display:inline-block;transform:scaleX(0.94);transform-origin:0 50%">60% 3D design review executed and actions logged</span></div>
<div style="top:334.8px;height:16px;line-height:16px;font-size:12px;color:#808080;white-space:pre;letter-spacing:-0.34px;left:359px;width:400px;text-align:center;"><span style="display:inline-block;transform:scaleX(0.94);transform-origin:50% 50%">23.Dec</span></div>
<div style="top:334.8px;height:16px;line-height:16px;font-size:12px;color:#808080;white-space:pre;letter-spacing:-0.34px;left:264px;width:400px;text-align:right;"><span style="display:inline-block;transform:scaleX(0.94);transform-origin:100% 50%">0</span></div>
<div style="top:334.8px;height:16px;line-height:16px;font-size:12px;color:#000000;white-space:pre;letter-spacing:-0.34px;left:527px;width:400px;text-align:center;"><span style="display:inline-block;transform:scaleX(0.94);transform-origin:50% 50%">A2.A20.00</span></div>
<div style="left:1px;top:353px;width:786px;height:18px;background:#ffffff;"></div>
<div style="left:1px;top:371px;width:786px;height:1px;background:#c0c0c0;"></div>
<div style="top:353.8px;height:16px;line-height:16px;font-size:12px;color:#000000;white-space:pre;letter-spacing:-0.34px;left:73px;width:48.5px;overflow:hidden;"><span style="display:inline-block;transform:scaleX(0.94);transform-origin:0 50%">-MILEM-002</span></div>
<div style="top:353.8px;height:16px;line-height:16px;font-size:12px;color:#000000;white-space:pre;letter-spacing:-0.422px;left:125px;width:318px;overflow:hidden;"><span style="display:inline-block;transform:scaleX(0.94);transform-origin:0 50%">HAZOP for process and HVAC systems</span></div>
<div style="top:353.8px;height:16px;line-height:16px;font-size:12px;color:#808080;white-space:pre;letter-spacing:-0.34px;left:359px;width:400px;text-align:center;"><span style="display:inline-block;transform:scaleX(0.94);transform-origin:50% 50%">08.Jan</span></div>
<div style="top:353.8px;height:16px;line-height:16px;font-size:12px;color:#808080;white-space:pre;letter-spacing:-0.34px;left:264px;width:400px;text-align:right;"><span style="display:inline-block;transform:scaleX(0.94);transform-origin:100% 50%">0</span></div>
<div style="top:353.8px;height:16px;line-height:16px;font-size:12px;color:#000000;white-space:pre;letter-spacing:-0.34px;left:527px;width:400px;text-align:center;"><span style="display:inline-block;transform:scaleX(0.94);transform-origin:50% 50%">A2.A20.00</span></div>
<div style="left:1px;top:372px;width:786px;height:18px;background:#ffffff;"></div>
<div style="left:1px;top:390px;width:786px;height:1px;background:#c0c0c0;"></div>
<div style="top:372.8px;height:16px;line-height:16px;font-size:12px;color:#000000;white-space:pre;letter-spacing:-0.34px;left:73px;width:48.5px;overflow:hidden;"><span style="display:inline-block;transform:scaleX(0.94);transform-origin:0 50%">-MILEM-302</span></div>
<div style="top:372.8px;height:16px;line-height:16px;font-size:12px;color:#000000;white-space:pre;letter-spacing:-0.37px;left:125px;width:318px;overflow:hidden;"><span style="display:inline-block;transform:scaleX(0.94);transform-origin:0 50%">Frozen critical interface information for all equipment provided in FIM</span></div>
<div style="top:372.8px;height:16px;line-height:16px;font-size:12px;color:#808080;white-space:pre;letter-spacing:-0.34px;left:359px;width:400px;text-align:center;"><span style="display:inline-block;transform:scaleX(0.94);transform-origin:50% 50%">22.Jan</span></div>
<div style="top:372.8px;height:16px;line-height:16px;font-size:12px;color:#808080;white-space:pre;letter-spacing:-0.34px;left:264px;width:400px;text-align:right;"><span style="display:inline-block;transform:scaleX(0.94);transform-origin:100% 50%">0</span></div>
<div style="top:372.8px;height:16px;line-height:16px;font-size:12px;color:#000000;white-space:pre;letter-spacing:-0.34px;left:527px;width:400px;text-align:center;"><span style="display:inline-block;transform:scaleX(0.94);transform-origin:50% 50%">A2.A20.00</span></div>
<div style="left:1px;top:391px;width:786px;height:18px;background:#ffffff;"></div>
<div style="left:1px;top:409px;width:786px;height:1px;background:#c0c0c0;"></div>
<div style="top:391.8px;height:16px;line-height:16px;font-size:12px;color:#000000;white-space:pre;letter-spacing:-0.34px;left:73px;width:48.5px;overflow:hidden;"><span style="display:inline-block;transform:scaleX(0.94);transform-origin:0 50%">-MILEM-303</span></div>
<div style="top:391.8px;height:16px;line-height:16px;font-size:12px;color:#000000;white-space:pre;letter-spacing:-0.379px;left:125px;width:318px;overflow:hidden;"><span style="display:inline-block;transform:scaleX(0.94);transform-origin:0 50%">Preliminary/frozen interface information for all equipment provided in</span></div>
<div style="top:391.8px;height:16px;line-height:16px;font-size:12px;color:#808080;white-space:pre;letter-spacing:-0.34px;left:283px;width:400px;text-align:center;"><span style="display:inline-block;transform:scaleX(0.94);transform-origin:50% 50%">26.Feb</span></div>
<div style="top:391.8px;height:16px;line-height:16px;font-size:12px;color:#808080;white-space:pre;letter-spacing:-0.34px;left:359px;width:400px;text-align:center;"><span style="display:inline-block;transform:scaleX(0.94);transform-origin:50% 50%">26.Feb</span></div>
<div style="top:391.8px;height:16px;line-height:16px;font-size:12px;color:#808080;white-space:pre;letter-spacing:-0.34px;left:264px;width:400px;text-align:right;"><span style="display:inline-block;transform:scaleX(0.94);transform-origin:100% 50%">0</span></div>
<div style="top:391.8px;height:16px;line-height:16px;font-size:12px;color:#000000;white-space:pre;letter-spacing:-0.34px;left:527px;width:400px;text-align:center;"><span style="display:inline-block;transform:scaleX(0.94);transform-origin:50% 50%">A2.A20.00</span></div>
<div style="left:1px;top:410px;width:786px;height:18px;background:#ffffff;"></div>
<div style="left:1px;top:428px;width:786px;height:1px;background:#c0c0c0;"></div>
<div style="top:410.8px;height:16px;line-height:16px;font-size:12px;color:#000000;white-space:pre;letter-spacing:-0.34px;left:73px;width:48.5px;overflow:hidden;"><span style="display:inline-block;transform:scaleX(0.94);transform-origin:0 50%">-MILEM-013</span></div>
<div style="top:410.8px;height:16px;line-height:16px;font-size:12px;color:#000000;white-space:pre;letter-spacing:-0.327px;left:125px;width:318px;overflow:hidden;"><span style="display:inline-block;transform:scaleX(0.94);transform-origin:0 50%">90% 3D design review executed and actions logged</span></div>
<div style="top:410.8px;height:16px;line-height:16px;font-size:12px;color:#808080;white-space:pre;letter-spacing:-0.34px;left:283px;width:400px;text-align:center;"><span style="display:inline-block;transform:scaleX(0.94);transform-origin:50% 50%">28.Apr</span></div>
<div style="top:410.8px;height:16px;line-height:16px;font-size:12px;color:#808080;white-space:pre;letter-spacing:-0.34px;left:359px;width:400px;text-align:center;"><span style="display:inline-block;transform:scaleX(0.94);transform-origin:50% 50%">28.Apr</span></div>
<div style="top:410.8px;height:16px;line-height:16px;font-size:12px;color:#808080;white-space:pre;letter-spacing:-0.34px;left:264px;width:400px;text-align:right;"><span style="display:inline-block;transform:scaleX(0.94);transform-origin:100% 50%">0</span></div>
<div style="top:410.8px;height:16px;line-height:16px;font-size:12px;color:#000000;white-space:pre;letter-spacing:-0.34px;left:527px;width:400px;text-align:center;"><span style="display:inline-block;transform:scaleX(0.94);transform-origin:50% 50%">A2.A20.00</span></div>
<div style="left:1px;top:429px;width:786px;height:18px;background:#ffffff;"></div>
<div style="left:1px;top:447px;width:786px;height:1px;background:#c0c0c0;"></div>
<div style="top:429.8px;height:16px;line-height:16px;font-size:12px;color:#000000;white-space:pre;letter-spacing:-0.34px;left:73px;width:48.5px;overflow:hidden;"><span style="display:inline-block;transform:scaleX(0.94);transform-origin:0 50%">-MILEM-003</span></div>
<div style="top:429.8px;height:16px;line-height:16px;font-size:12px;color:#000000;white-space:pre;letter-spacing:-0.459px;left:125px;width:318px;overflow:hidden;"><span style="display:inline-block;transform:scaleX(0.94);transform-origin:0 50%">Completion of all P&amp;IDs, D&amp;IDs, SLDs</span></div>
<div style="top:429.8px;height:16px;line-height:16px;font-size:12px;color:#808080;white-space:pre;letter-spacing:-0.34px;left:283px;width:400px;text-align:center;"><span style="display:inline-block;transform:scaleX(0.94);transform-origin:50% 50%">05.May</span></div>
<div style="top:429.8px;height:16px;line-height:16px;font-size:12px;color:#808080;white-space:pre;letter-spacing:-0.34px;left:359px;width:400px;text-align:center;"><span style="display:inline-block;transform:scaleX(0.94);transform-origin:50% 50%">05.May</span></div>
<div style="top:429.8px;height:16px;line-height:16px;font-size:12px;color:#808080;white-space:pre;letter-spacing:-0.34px;left:264px;width:400px;text-align:right;"><span style="display:inline-block;transform:scaleX(0.94);transform-origin:100% 50%">0</span></div>
<div style="top:429.8px;height:16px;line-height:16px;font-size:12px;color:#000000;white-space:pre;letter-spacing:-0.34px;left:527px;width:400px;text-align:center;"><span style="display:inline-block;transform:scaleX(0.94);transform-origin:50% 50%">A2.A20.00</span></div>
<div style="left:1px;top:448px;width:786px;height:18px;background:#ffffff;"></div>
<div style="left:1px;top:466px;width:786px;height:1px;background:#c0c0c0;"></div>
<div style="top:448.8px;height:16px;line-height:16px;font-size:12px;color:#000000;white-space:pre;letter-spacing:-0.34px;left:73px;width:48.5px;overflow:hidden;"><span style="display:inline-block;transform:scaleX(0.94);transform-origin:0 50%">-MILEM-004</span></div>
<div style="top:448.8px;height:16px;line-height:16px;font-size:12px;color:#000000;white-space:pre;letter-spacing:-0.447px;left:125px;width:318px;overflow:hidden;"><span style="display:inline-block;transform:scaleX(0.94);transform-origin:0 50%">HAZOP for fire safety systems</span></div>
<div style="top:448.8px;height:16px;line-height:16px;font-size:12px;color:#808080;white-space:pre;letter-spacing:-0.34px;left:283px;width:400px;text-align:center;"><span style="display:inline-block;transform:scaleX(0.94);transform-origin:50% 50%">15.May</span></div>
<div style="top:448.8px;height:16px;line-height:16px;font-size:12px;color:#808080;white-space:pre;letter-spacing:-0.34px;left:359px;width:400px;text-align:center;"><span style="display:inline-block;transform:scaleX(0.94);transform-origin:50% 50%">15.May</span></div>
<div style="top:448.8px;height:16px;line-height:16px;font-size:12px;color:#808080;white-space:pre;letter-spacing:-0.34px;left:264px;width:400px;text-align:right;"><span style="display:inline-block;transform:scaleX(0.94);transform-origin:100% 50%">0</span></div>
<div style="top:448.8px;height:16px;line-height:16px;font-size:12px;color:#000000;white-space:pre;letter-spacing:-0.34px;left:527px;width:400px;text-align:center;"><span style="display:inline-block;transform:scaleX(0.94);transform-origin:50% 50%">A2.A20.00</span></div>
<div style="left:1px;top:467px;width:786px;height:18px;background:#ffffff;"></div>
<div style="left:1px;top:485px;width:786px;height:1px;background:#c0c0c0;"></div>
<div style="top:467.8px;height:16px;line-height:16px;font-size:12px;color:#000000;white-space:pre;letter-spacing:-0.34px;left:73px;width:48.5px;overflow:hidden;"><span style="display:inline-block;transform:scaleX(0.94);transform-origin:0 50%">-MILEM-005</span></div>
<div style="top:467.8px;height:16px;line-height:16px;font-size:12px;color:#000000;white-space:pre;letter-spacing:-0.417px;left:125px;width:318px;overflow:hidden;"><span style="display:inline-block;transform:scaleX(0.94);transform-origin:0 50%">75% of Primary Steel Drawings issued for construction</span></div>
<div style="top:467.8px;height:16px;line-height:16px;font-size:12px;color:#808080;white-space:pre;letter-spacing:-0.34px;left:283px;width:400px;text-align:center;"><span style="display:inline-block;transform:scaleX(0.94);transform-origin:50% 50%">02.Aug</span></div>
<div style="top:467.8px;height:16px;line-height:16px;font-size:12px;color:#808080;white-space:pre;letter-spacing:-0.34px;left:359px;width:400px;text-align:center;"><span style="display:inline-block;transform:scaleX(0.94);transform-origin:50% 50%">02.Aug</span></div>
<div style="top:467.8px;height:16px;line-height:16px;font-size:12px;color:#808080;white-space:pre;letter-spacing:-0.34px;left:264px;width:400px;text-align:right;"><span style="display:inline-block;transform:scaleX(0.94);transform-origin:100% 50%">0</span></div>
<div style="top:467.8px;height:16px;line-height:16px;font-size:12px;color:#000000;white-space:pre;letter-spacing:-0.34px;left:527px;width:400px;text-align:center;"><span style="display:inline-block;transform:scaleX(0.94);transform-origin:50% 50%">A2.A20.00</span></div>
<div style="left:1px;top:486px;width:786px;height:18px;background:#ffffff;"></div>
<div style="left:1px;top:504px;width:786px;height:1px;background:#c0c0c0;"></div>
<div style="top:486.8px;height:16px;line-height:16px;font-size:12px;color:#000000;white-space:pre;letter-spacing:-0.34px;left:73px;width:48.5px;overflow:hidden;"><span style="display:inline-block;transform:scaleX(0.94);transform-origin:0 50%">-MILEM-006</span></div>
<div style="top:486.8px;height:16px;line-height:16px;font-size:12px;color:#000000;white-space:pre;letter-spacing:-0.417px;left:125px;width:318px;overflow:hidden;"><span style="display:inline-block;transform:scaleX(0.94);transform-origin:0 50%">100% of Primary Steel Drawings issued for construction</span></div>
<div style="top:486.8px;height:16px;line-height:16px;font-size:12px;color:#808080;white-space:pre;letter-spacing:-0.34px;left:283px;width:400px;text-align:center;"><span style="display:inline-block;transform:scaleX(0.94);transform-origin:50% 50%">01.Nov</span></div>
<div style="top:486.8px;height:16px;line-height:16px;font-size:12px;color:#808080;white-space:pre;letter-spacing:-0.34px;left:359px;width:400px;text-align:center;"><span style="display:inline-block;transform:scaleX(0.94);transform-origin:50% 50%">01.Nov</span></div>
<div style="top:486.8px;height:16px;line-height:16px;font-size:12px;color:#808080;white-space:pre;letter-spacing:-0.34px;left:264px;width:400px;text-align:right;"><span style="display:inline-block;transform:scaleX(0.94);transform-origin:100% 50%">0</span></div>
<div style="top:486.8px;height:16px;line-height:16px;font-size:12px;color:#000000;white-space:pre;letter-spacing:-0.34px;left:527px;width:400px;text-align:center;"><span style="display:inline-block;transform:scaleX(0.94);transform-origin:50% 50%">A2.A20.00</span></div>
<div style="left:1px;top:505px;width:786px;height:18px;background:#ffffff;"></div>
<div style="left:1px;top:523px;width:786px;height:1px;background:#c0c0c0;"></div>
<div style="top:505.8px;height:16px;line-height:16px;font-size:12px;color:#000000;white-space:pre;letter-spacing:-0.34px;left:73px;width:48.5px;overflow:hidden;"><span style="display:inline-block;transform:scaleX(0.94);transform-origin:0 50%">-MILEM-014</span></div>
<div style="top:505.8px;height:16px;line-height:16px;font-size:12px;color:#000000;white-space:pre;letter-spacing:-0.392px;left:125px;width:318px;overflow:hidden;"><span style="display:inline-block;transform:scaleX(0.94);transform-origin:0 50%">Structural &amp; Safety Design Complete and certified</span></div>
<div style="top:505.8px;height:16px;line-height:16px;font-size:12px;color:#808080;white-space:pre;letter-spacing:-0.34px;left:283px;width:400px;text-align:center;"><span style="display:inline-block;transform:scaleX(0.94);transform-origin:50% 50%">31.Dec</span></div>
<div style="top:505.8px;height:16px;line-height:16px;font-size:12px;color:#808080;white-space:pre;letter-spacing:-0.34px;left:359px;width:400px;text-align:center;"><span style="display:inline-block;transform:scaleX(0.94);transform-origin:50% 50%">31.Dec</span></div>
<div style="top:505.8px;height:16px;line-height:16px;font-size:12px;color:#808080;white-space:pre;letter-spacing:-0.34px;left:264px;width:400px;text-align:right;"><span style="display:inline-block;transform:scaleX(0.94);transform-origin:100% 50%">0</span></div>
<div style="top:505.8px;height:16px;line-height:16px;font-size:12px;color:#000000;white-space:pre;letter-spacing:-0.34px;left:527px;width:400px;text-align:center;"><span style="display:inline-block;transform:scaleX(0.94);transform-origin:50% 50%">A2.A20.00</span></div>
<div style="left:1px;top:524px;width:786px;height:18px;background:#f5f5f5;"></div>
<div style="left:1px;top:542px;width:786px;height:1px;background:#c0c0c0;"></div>
<div style="left:16px;top:530px;width:9px;height:9px;background:#ffffff;border:1px solid #848484;box-sizing:border-box;"></div>
<div style="left:18px;top:534px;width:5px;height:1px;background:#000;"></div>
<div style="left:20px;top:532px;width:1px;height:5px;background:#000;"></div>
<div style="top:524.8px;height:16px;line-height:16px;font-size:12px;color:#000000;white-space:pre;letter-spacing:-0.34px;left:-109.2px;width:400px;text-align:center;"><span style="display:inline-block;transform:scaleX(0.94);transform-origin:50% 50%">A2.A20.01</span></div>
<div style="top:524.8px;height:16px;line-height:16px;font-size:12px;color:#000000;white-space:pre;letter-spacing:-0.43px;left:125px;width:318px;overflow:hidden;"><span style="display:inline-block;transform:scaleX(0.94);transform-origin:0 50%">Internal Milestones</span></div>
<div style="top:524.8px;height:16px;line-height:16px;font-size:12px;color:#000000;white-space:pre;letter-spacing:-0.34px;left:283px;width:400px;text-align:center;"><span style="display:inline-block;transform:scaleX(0.94);transform-origin:50% 50%">01.Mar</span></div>
<div style="top:524.8px;height:16px;line-height:16px;font-size:12px;color:#000000;white-space:pre;letter-spacing:-0.34px;left:359px;width:400px;text-align:center;"><span style="display:inline-block;transform:scaleX(0.94);transform-origin:50% 50%">27.Aug</span></div>
<div style="top:524.8px;height:16px;line-height:16px;font-size:12px;color:#000000;white-space:pre;letter-spacing:-0.34px;left:264px;width:400px;text-align:right;"><span style="display:inline-block;transform:scaleX(0.94);transform-origin:100% 50%">282 w</span></div>
<div style="top:524.8px;height:16px;line-height:16px;font-size:12px;color:#000000;white-space:pre;letter-spacing:-0.34px;left:527px;width:400px;text-align:center;"><span style="display:inline-block;transform:scaleX(0.94);transform-origin:50% 50%">A2.A20.01</span></div>
<div style="left:1px;top:543px;width:786px;height:18px;background:#f5f5f5;"></div>
<div style="left:1px;top:561px;width:786px;height:1px;background:#c0c0c0;"></div>
<div style="left:16px;top:549px;width:9px;height:9px;background:#ffffff;border:1px solid #848484;box-sizing:border-box;"></div>
<div style="left:18px;top:553px;width:5px;height:1px;background:#000;"></div>
<div style="left:20px;top:551px;width:1px;height:5px;background:#000;"></div>
<div style="top:543.8px;height:16px;line-height:16px;font-size:12px;color:#000000;white-space:pre;letter-spacing:-0.34px;left:-109.2px;width:400px;text-align:center;"><span style="display:inline-block;transform:scaleX(0.94);transform-origin:50% 50%">A2.A20.02</span></div>
<div style="top:543.8px;height:16px;line-height:16px;font-size:12px;color:#000000;white-space:pre;letter-spacing:-0.357px;left:125px;width:318px;overflow:hidden;"><span style="display:inline-block;transform:scaleX(0.94);transform-origin:0 50%">Interface Milestones</span></div>
<div style="top:543.8px;height:16px;line-height:16px;font-size:12px;color:#000000;white-space:pre;letter-spacing:-0.34px;left:283px;width:400px;text-align:center;"><span style="display:inline-block;transform:scaleX(0.94);transform-origin:50% 50%">22.Jan</span></div>
<div style="top:543.8px;height:16px;line-height:16px;font-size:12px;color:#000000;white-space:pre;letter-spacing:-0.34px;left:359px;width:400px;text-align:center;"><span style="display:inline-block;transform:scaleX(0.94);transform-origin:50% 50%">30.Jan</span></div>
<div style="top:543.8px;height:16px;line-height:16px;font-size:12px;color:#000000;white-space:pre;letter-spacing:-0.34px;left:264px;width:400px;text-align:right;"><span style="display:inline-block;transform:scaleX(0.94);transform-origin:100% 50%">38.85 w</span></div>
<div style="top:543.8px;height:16px;line-height:16px;font-size:12px;color:#000000;white-space:pre;letter-spacing:-0.34px;left:527px;width:400px;text-align:center;"><span style="display:inline-block;transform:scaleX(0.94);transform-origin:50% 50%">A2.A20.02</span></div>
<div style="left:1px;top:562px;width:786px;height:18px;background:#c9dde4;"></div>
<div style="left:1px;top:580px;width:786px;height:1px;background:#c0c0c0;"></div>
<div style="left:16px;top:568px;width:9px;height:9px;background:#ffffff;border:1px solid #848484;box-sizing:border-box;"></div>
<div style="left:18px;top:572px;width:5px;height:1px;background:#000;"></div>
<div style="left:20px;top:570px;width:1px;height:5px;background:#000;"></div>
<div style="top:562.8px;height:16px;line-height:16px;font-size:12px;color:#000000;white-space:pre;letter-spacing:-0.34px;left:-113.6px;width:400px;text-align:center;"><span style="display:inline-block;transform:scaleX(0.94);transform-origin:50% 50%">A2.A21</span></div>
<div style="top:562.8px;height:16px;line-height:16px;font-size:12px;color:#000000;white-space:pre;letter-spacing:-0.464px;left:125px;width:318px;overflow:hidden;"><span style="display:inline-block;transform:scaleX(0.94);transform-origin:0 50%">Follow-on Engineering</span></div>
<div style="top:562.8px;height:16px;line-height:16px;font-size:12px;color:#000000;white-space:pre;letter-spacing:-0.34px;left:283px;width:400px;text-align:center;"><span style="display:inline-block;transform:scaleX(0.94);transform-origin:50% 50%">01.Apr</span></div>
<div style="top:562.8px;height:16px;line-height:16px;font-size:12px;color:#000000;white-space:pre;letter-spacing:-0.34px;left:359px;width:400px;text-align:center;"><span style="display:inline-block;transform:scaleX(0.94);transform-origin:50% 50%">01.Feb</span></div>
<div style="top:562.8px;height:16px;line-height:16px;font-size:12px;color:#000000;white-space:pre;letter-spacing:-0.34px;left:264px;width:400px;text-align:right;"><span style="display:inline-block;transform:scaleX(0.94);transform-origin:100% 50%">148 w</span></div>
<div style="top:562.8px;height:16px;line-height:16px;font-size:12px;color:#000000;white-space:pre;letter-spacing:-0.34px;left:527px;width:400px;text-align:center;"><span style="display:inline-block;transform:scaleX(0.94);transform-origin:50% 50%">A2.A21</span></div>
<div style="left:1px;top:581px;width:786px;height:18px;background:#97c4dc;"></div>
<div style="left:1px;top:599px;width:786px;height:1px;background:#c0c0c0;"></div>
<div style="left:16px;top:587px;width:9px;height:9px;background:#ffffff;border:1px solid #848484;box-sizing:border-box;"></div>
<div style="left:18px;top:591px;width:5px;height:1px;background:#000;"></div>
<div style="left:20px;top:589px;width:1px;height:5px;background:#000;"></div>
<div style="top:581.8px;height:16px;line-height:16px;font-size:12px;color:#000000;white-space:pre;letter-spacing:-0.34px;left:-119.3px;width:400px;text-align:center;"><span style="display:inline-block;transform:scaleX(0.94);transform-origin:50% 50%">2HB</span></div>
<div style="top:581.8px;height:16px;line-height:16px;font-size:12px;color:#000000;white-space:pre;letter-spacing:-0.559px;left:125px;width:318px;overflow:hidden;"><span style="display:inline-block;transform:scaleX(0.94);transform-origin:0 50%">2H Brazil</span></div>
<div style="top:581.8px;height:16px;line-height:16px;font-size:12px;color:#000000;white-space:pre;letter-spacing:-0.34px;left:283px;width:400px;text-align:center;"><span style="display:inline-block;transform:scaleX(0.94);transform-origin:50% 50%">23.Jan</span></div>
<div style="top:581.8px;height:16px;line-height:16px;font-size:12px;color:#000000;white-space:pre;letter-spacing:-0.34px;left:359px;width:400px;text-align:center;"><span style="display:inline-block;transform:scaleX(0.94);transform-origin:50% 50%">27.Aug</span></div>
<div style="top:581.8px;height:16px;line-height:16px;font-size:12px;color:#000000;white-space:pre;letter-spacing:-0.34px;left:264px;width:400px;text-align:right;"><span style="display:inline-block;transform:scaleX(0.94);transform-origin:100% 50%">555.42 w</span></div>
<div style="left:1px;top:600px;width:786px;height:18px;background:#97c4dc;"></div>
<div style="left:1px;top:618px;width:786px;height:1px;background:#c0c0c0;"></div>
<div style="left:16px;top:606px;width:9px;height:9px;background:#ffffff;border:1px solid #848484;box-sizing:border-box;"></div>
<div style="left:18px;top:610px;width:5px;height:1px;background:#000;"></div>
<div style="left:20px;top:608px;width:1px;height:5px;background:#000;"></div>
<div style="top:600.8px;height:16px;line-height:16px;font-size:12px;color:#000000;white-space:pre;letter-spacing:-0.34px;left:-119.3px;width:400px;text-align:center;"><span style="display:inline-block;transform:scaleX(0.94);transform-origin:50% 50%">FIR</span></div>
<div style="top:600.8px;height:16px;line-height:16px;font-size:12px;color:#000000;white-space:pre;letter-spacing:-0.628px;left:125px;width:318px;overflow:hidden;"><span style="display:inline-block;transform:scaleX(0.94);transform-origin:0 50%">Firenor</span></div>
<div style="top:600.8px;height:16px;line-height:16px;font-size:12px;color:#000000;white-space:pre;letter-spacing:-0.34px;left:283px;width:400px;text-align:center;"><span style="display:inline-block;transform:scaleX(0.94);transform-origin:50% 50%">07.Feb</span></div>
<div style="top:600.8px;height:16px;line-height:16px;font-size:12px;color:#000000;white-space:pre;letter-spacing:-0.34px;left:359px;width:400px;text-align:center;"><span style="display:inline-block;transform:scaleX(0.94);transform-origin:50% 50%">06.Jan</span></div>
<div style="top:600.8px;height:16px;line-height:16px;font-size:12px;color:#000000;white-space:pre;letter-spacing:-0.34px;left:264px;width:400px;text-align:right;"><span style="display:inline-block;transform:scaleX(0.94);transform-origin:100% 50%">87.57 w</span></div>
<div style="top:600.8px;height:16px;line-height:16px;font-size:12px;color:#000000;white-space:pre;letter-spacing:-0.34px;left:527px;width:400px;text-align:center;"><span style="display:inline-block;transform:scaleX(0.94);transform-origin:50% 50%">A2.A20.02</span></div>
<div style="left:1px;top:619px;width:786px;height:18px;background:#97c4dc;"></div>
<div style="left:1px;top:637px;width:786px;height:1px;background:#c0c0c0;"></div>
<div style="left:16px;top:625px;width:9px;height:9px;background:#ffffff;border:1px solid #848484;box-sizing:border-box;"></div>
<div style="left:18px;top:629px;width:5px;height:1px;background:#000;"></div>
<div style="left:20px;top:627px;width:1px;height:5px;background:#000;"></div>
<div style="top:619.8px;height:16px;line-height:16px;font-size:12px;color:#000000;white-space:pre;letter-spacing:-0.34px;left:-119.3px;width:400px;text-align:center;"><span style="display:inline-block;transform:scaleX(0.94);transform-origin:50% 50%">HEE</span></div>
<div style="top:619.8px;height:16px;line-height:16px;font-size:12px;color:#000000;white-space:pre;letter-spacing:-0.703px;left:125px;width:318px;overflow:hidden;"><span style="display:inline-block;transform:scaleX(0.94);transform-origin:0 50%">Heerema</span></div>
<div style="top:619.8px;height:16px;line-height:16px;font-size:12px;color:#000000;white-space:pre;letter-spacing:-0.34px;left:283px;width:400px;text-align:center;"><span style="display:inline-block;transform:scaleX(0.94);transform-origin:50% 50%">30.Jan</span></div>
<div style="top:619.8px;height:16px;line-height:16px;font-size:12px;color:#000000;white-space:pre;letter-spacing:-0.34px;left:359px;width:400px;text-align:center;"><span style="display:inline-block;transform:scaleX(0.94);transform-origin:50% 50%">03.Oct</span></div>
<div style="top:619.8px;height:16px;line-height:16px;font-size:12px;color:#000000;white-space:pre;letter-spacing:-0.34px;left:264px;width:400px;text-align:right;"><span style="display:inline-block;transform:scaleX(0.94);transform-origin:100% 50%">154.71 w</span></div>
<div style="left:1px;top:638px;width:786px;height:18px;background:#3083ab;"></div>
<div style="left:1px;top:656px;width:786px;height:1px;background:#c0c0c0;"></div>
<div style="left:16px;top:644px;width:9px;height:9px;background:#ffffff;border:1px solid #848484;box-sizing:border-box;"></div>
<div style="left:18px;top:648px;width:5px;height:1px;background:#000;"></div>
<div style="top:638.8px;height:16px;line-height:16px;font-size:12px;color:#ffffff;white-space:pre;letter-spacing:-0.34px;left:-123.5px;width:400px;text-align:center;"><span style="display:inline-block;transform:scaleX(0.94);transform-origin:50% 50%">A6</span></div>
<div style="top:638.8px;height:16px;line-height:16px;font-size:12px;color:#ffffff;white-space:pre;letter-spacing:-0.619px;left:125px;width:318px;overflow:hidden;"><span style="display:inline-block;transform:scaleX(0.94);transform-origin:0 50%">Commissioning - Onshore</span></div>
<div style="top:638.8px;height:16px;line-height:16px;font-size:12px;color:#ffffff;white-space:pre;letter-spacing:-0.34px;left:283px;width:400px;text-align:center;"><span style="display:inline-block;transform:scaleX(0.94);transform-origin:50% 50%">15.Apr</span></div>
<div style="top:638.8px;height:16px;line-height:16px;font-size:12px;color:#ffffff;white-space:pre;letter-spacing:-0.34px;left:359px;width:400px;text-align:center;"><span style="display:inline-block;transform:scaleX(0.94);transform-origin:50% 50%">31.Oct</span></div>
<div style="top:638.8px;height:16px;line-height:16px;font-size:12px;color:#ffffff;white-space:pre;letter-spacing:-0.34px;left:264px;width:400px;text-align:right;"><span style="display:inline-block;transform:scaleX(0.94);transform-origin:100% 50%">28.57 w</span></div>
<div style="left:1px;top:657px;width:786px;height:18px;background:#97c4dc;"></div>
<div style="left:1px;top:675px;width:786px;height:1px;background:#c0c0c0;"></div>
<div style="left:16px;top:663px;width:9px;height:9px;background:#ffffff;border:1px solid #848484;box-sizing:border-box;"></div>
<div style="left:18px;top:667px;width:5px;height:1px;background:#000;"></div>
<div style="left:20px;top:665px;width:1px;height:5px;background:#000;"></div>
<div style="top:657.8px;height:16px;line-height:16px;font-size:12px;color:#000000;white-space:pre;letter-spacing:-0.34px;left:-119.3px;width:400px;text-align:center;"><span style="display:inline-block;transform:scaleX(0.94);transform-origin:50% 50%">2HM</span></div>
<div style="top:657.8px;height:16px;line-height:16px;font-size:12px;color:#000000;white-space:pre;letter-spacing:-0.503px;left:125px;width:318px;overflow:hidden;"><span style="display:inline-block;transform:scaleX(0.94);transform-origin:0 50%">2H Malaysia</span></div>
<div style="top:657.8px;height:16px;line-height:16px;font-size:12px;color:#000000;white-space:pre;letter-spacing:-0.34px;left:283px;width:400px;text-align:center;"><span style="display:inline-block;transform:scaleX(0.94);transform-origin:50% 50%">15.Apr</span></div>
<div style="top:657.8px;height:16px;line-height:16px;font-size:12px;color:#000000;white-space:pre;letter-spacing:-0.34px;left:359px;width:400px;text-align:center;"><span style="display:inline-block;transform:scaleX(0.94);transform-origin:50% 50%">31.Oct</span></div>
<div style="top:657.8px;height:16px;line-height:16px;font-size:12px;color:#000000;white-space:pre;letter-spacing:-0.34px;left:264px;width:400px;text-align:right;"><span style="display:inline-block;transform:scaleX(0.94);transform-origin:100% 50%">28.57 w</span></div>
<div style="top:657.8px;height:16px;line-height:16px;font-size:12px;color:#000000;white-space:pre;letter-spacing:-0.34px;left:527px;width:400px;text-align:center;"><span style="display:inline-block;transform:scaleX(0.94);transform-origin:50% 50%">A6.A60.MX</span></div>
<div style="left:1px;top:676px;width:786px;height:18px;background:#3083ab;"></div>
<div style="left:1px;top:694px;width:786px;height:1px;background:#c0c0c0;"></div>
<div style="left:16px;top:682px;width:9px;height:9px;background:#ffffff;border:1px solid #848484;box-sizing:border-box;"></div>
<div style="left:18px;top:686px;width:5px;height:1px;background:#000;"></div>
<div style="top:676.8px;height:16px;line-height:16px;font-size:12px;color:#ffffff;white-space:pre;letter-spacing:-0.34px;left:-123.5px;width:400px;text-align:center;"><span style="display:inline-block;transform:scaleX(0.94);transform-origin:50% 50%">A8</span></div>
<div style="top:676.8px;height:16px;line-height:16px;font-size:12px;color:#ffffff;white-space:pre;letter-spacing:-0.465px;left:125px;width:318px;overflow:hidden;"><span style="display:inline-block;transform:scaleX(0.94);transform-origin:0 50%">Offshore Installation and Commissioning</span></div>
<div style="top:676.8px;height:16px;line-height:16px;font-size:12px;color:#ffffff;white-space:pre;letter-spacing:-0.34px;left:283px;width:400px;text-align:center;"><span style="display:inline-block;transform:scaleX(0.94);transform-origin:50% 50%">06.Mar</span></div>
<div style="top:676.8px;height:16px;line-height:16px;font-size:12px;color:#ffffff;white-space:pre;letter-spacing:-0.34px;left:359px;width:400px;text-align:center;"><span style="display:inline-block;transform:scaleX(0.94);transform-origin:50% 50%">27.Nov</span></div>
<div style="top:676.8px;height:16px;line-height:16px;font-size:12px;color:#ffffff;white-space:pre;letter-spacing:-0.34px;left:264px;width:400px;text-align:right;"><span style="display:inline-block;transform:scaleX(0.94);transform-origin:100% 50%">90.14 w</span></div>
<div style="left:1px;top:695px;width:786px;height:18px;background:#c9dde4;"></div>
<div style="left:1px;top:713px;width:786px;height:1px;background:#c0c0c0;"></div>
<div style="left:16px;top:701px;width:9px;height:9px;background:#ffffff;border:1px solid #848484;box-sizing:border-box;"></div>
<div style="left:18px;top:705px;width:5px;height:1px;background:#000;"></div>
<div style="left:20px;top:703px;width:1px;height:5px;background:#000;"></div>
<div style="top:695.8px;height:16px;line-height:16px;font-size:12px;color:#000000;white-space:pre;letter-spacing:-0.34px;left:-113.6px;width:400px;text-align:center;"><span style="display:inline-block;transform:scaleX(0.94);transform-origin:50% 50%">A8.A80</span></div>
<div style="top:695.8px;height:16px;line-height:16px;font-size:12px;color:#000000;white-space:pre;letter-spacing:-0.422px;left:125px;width:318px;overflow:hidden;"><span style="display:inline-block;transform:scaleX(0.94);transform-origin:0 50%">Offshore - Installation - HMC</span></div>
<div style="top:695.8px;height:16px;line-height:16px;font-size:12px;color:#000000;white-space:pre;letter-spacing:-0.34px;left:283px;width:400px;text-align:center;"><span style="display:inline-block;transform:scaleX(0.94);transform-origin:50% 50%">06.Mar</span></div>
<div style="top:695.8px;height:16px;line-height:16px;font-size:12px;color:#000000;white-space:pre;letter-spacing:-0.34px;left:359px;width:400px;text-align:center;"><span style="display:inline-block;transform:scaleX(0.94);transform-origin:50% 50%">27.Nov</span></div>
<div style="top:695.8px;height:16px;line-height:16px;font-size:12px;color:#000000;white-space:pre;letter-spacing:-0.34px;left:264px;width:400px;text-align:right;"><span style="display:inline-block;transform:scaleX(0.94);transform-origin:100% 50%">90.14 w</span></div>
<div style="top:695.8px;height:16px;line-height:16px;font-size:12px;color:#000000;white-space:pre;letter-spacing:-0.34px;left:527px;width:400px;text-align:center;"><span style="display:inline-block;transform:scaleX(0.94);transform-origin:50% 50%">A8.A80</span></div>
<div style="left:1px;top:714px;width:786px;height:18px;background:#c9dde4;"></div>
<div style="left:1px;top:732px;width:786px;height:1px;background:#c0c0c0;"></div>
<div style="left:16px;top:720px;width:9px;height:9px;background:#ffffff;border:1px solid #848484;box-sizing:border-box;"></div>
<div style="left:18px;top:724px;width:5px;height:1px;background:#000;"></div>
<div style="left:20px;top:722px;width:1px;height:5px;background:#000;"></div>
<div style="top:714.8px;height:16px;line-height:16px;font-size:12px;color:#000000;white-space:pre;letter-spacing:-0.34px;left:-113.6px;width:400px;text-align:center;"><span style="display:inline-block;transform:scaleX(0.94);transform-origin:50% 50%">A8.A82</span></div>
<div style="top:714.8px;height:16px;line-height:16px;font-size:12px;color:#000000;white-space:pre;letter-spacing:-0.584px;left:125px;width:318px;overflow:hidden;"><span style="display:inline-block;transform:scaleX(0.94);transform-origin:0 50%">Offshore Commissioning</span></div>
<div style="top:714.8px;height:16px;line-height:16px;font-size:12px;color:#000000;white-space:pre;letter-spacing:-0.34px;left:283px;width:400px;text-align:center;"><span style="display:inline-block;transform:scaleX(0.94);transform-origin:50% 50%">03.Sep</span></div>
<div style="top:714.8px;height:16px;line-height:16px;font-size:12px;color:#000000;white-space:pre;letter-spacing:-0.34px;left:359px;width:400px;text-align:center;"><span style="display:inline-block;transform:scaleX(0.94);transform-origin:50% 50%">03.Sep</span></div>
<div style="top:714.8px;height:16px;line-height:16px;font-size:12px;color:#000000;white-space:pre;letter-spacing:-0.34px;left:264px;width:400px;text-align:right;"><span style="display:inline-block;transform:scaleX(0.94);transform-origin:100% 50%">0</span></div>
<div style="top:714.8px;height:16px;line-height:16px;font-size:12px;color:#000000;white-space:pre;letter-spacing:-0.34px;left:527px;width:400px;text-align:center;"><span style="display:inline-block;transform:scaleX(0.94);transform-origin:50% 50%">A8.A82</span></div>
<div style="left:1px;top:733px;width:786px;height:18px;background:#c9dde4;"></div>
<div style="left:1px;top:751px;width:786px;height:1px;background:#c0c0c0;"></div>
<div style="left:16px;top:739px;width:9px;height:9px;background:#ffffff;border:1px solid #848484;box-sizing:border-box;"></div>
<div style="left:18px;top:743px;width:5px;height:1px;background:#000;"></div>
<div style="left:20px;top:741px;width:1px;height:5px;background:#000;"></div>
<div style="top:733.8px;height:16px;line-height:16px;font-size:12px;color:#000000;white-space:pre;letter-spacing:-0.34px;left:-113.6px;width:400px;text-align:center;"><span style="display:inline-block;transform:scaleX(0.94);transform-origin:50% 50%">A8.A86</span></div>
<div style="top:733.8px;height:16px;line-height:16px;font-size:12px;color:#000000;white-space:pre;letter-spacing:-0.434px;left:125px;width:318px;overflow:hidden;"><span style="display:inline-block;transform:scaleX(0.94);transform-origin:0 50%">Offshore - Installation and Commissioning - A2SEA</span></div>
<div style="top:733.8px;height:16px;line-height:16px;font-size:12px;color:#000000;white-space:pre;letter-spacing:-0.34px;left:283px;width:400px;text-align:center;"><span style="display:inline-block;transform:scaleX(0.94);transform-origin:50% 50%">29.May</span></div>
<div style="top:733.8px;height:16px;line-height:16px;font-size:12px;color:#000000;white-space:pre;letter-spacing:-0.34px;left:359px;width:400px;text-align:center;"><span style="display:inline-block;transform:scaleX(0.94);transform-origin:50% 50%">29.May</span></div>
<div style="top:733.8px;height:16px;line-height:16px;font-size:12px;color:#000000;white-space:pre;letter-spacing:-0.34px;left:264px;width:400px;text-align:right;"><span style="display:inline-block;transform:scaleX(0.94);transform-origin:100% 50%">0</span></div>
<div style="top:733.8px;height:16px;line-height:16px;font-size:12px;color:#000000;white-space:pre;letter-spacing:-0.34px;left:527px;width:400px;text-align:center;"><span style="display:inline-block;transform:scaleX(0.94);transform-origin:50% 50%">A8.A86</span></div>
<div style="left:1px;top:752px;width:786px;height:18px;background:#c9dde4;"></div>
<div style="left:1px;top:770px;width:786px;height:1px;background:#c0c0c0;"></div>
<div style="left:16px;top:758px;width:9px;height:9px;background:#ffffff;border:1px solid #848484;box-sizing:border-box;"></div>
<div style="left:18px;top:762px;width:5px;height:1px;background:#000;"></div>
<div style="left:20px;top:760px;width:1px;height:5px;background:#000;"></div>
<div style="top:752.8px;height:16px;line-height:16px;font-size:12px;color:#000000;white-space:pre;letter-spacing:-0.34px;left:-113.6px;width:400px;text-align:center;"><span style="display:inline-block;transform:scaleX(0.94);transform-origin:50% 50%">A8.A87</span></div>
<div style="top:752.8px;height:16px;line-height:16px;font-size:12px;color:#000000;white-space:pre;letter-spacing:-0.39px;left:125px;width:318px;overflow:hidden;"><span style="display:inline-block;transform:scaleX(0.94);transform-origin:0 50%">Offshore - Bluewave</span></div>
<div style="top:752.8px;height:16px;line-height:16px;font-size:12px;color:#000000;white-space:pre;letter-spacing:-0.34px;left:283px;width:400px;text-align:center;"><span style="display:inline-block;transform:scaleX(0.94);transform-origin:50% 50%">03.Sep</span></div>
<div style="top:752.8px;height:16px;line-height:16px;font-size:12px;color:#000000;white-space:pre;letter-spacing:-0.34px;left:359px;width:400px;text-align:center;"><span style="display:inline-block;transform:scaleX(0.94);transform-origin:50% 50%">27.May</span></div>
<div style="top:752.8px;height:16px;line-height:16px;font-size:12px;color:#000000;white-space:pre;letter-spacing:-0.34px;left:264px;width:400px;text-align:right;"><span style="display:inline-block;transform:scaleX(0.94);transform-origin:100% 50%">38 w</span></div>
<div style="top:752.8px;height:16px;line-height:16px;font-size:12px;color:#000000;white-space:pre;letter-spacing:-0.34px;left:527px;width:400px;text-align:center;"><span style="display:inline-block;transform:scaleX(0.94);transform-origin:50% 50%">A8.A87</span></div>
<div style="left:1px;top:771px;width:786px;height:18px;background:#97c4dc;"></div>
<div style="left:1px;top:789px;width:786px;height:1px;background:#c0c0c0;"></div>
<div style="left:16px;top:777px;width:9px;height:9px;background:#ffffff;border:1px solid #848484;box-sizing:border-box;"></div>
<div style="left:18px;top:781px;width:5px;height:1px;background:#000;"></div>
<div style="left:20px;top:779px;width:1px;height:5px;background:#000;"></div>
<div style="top:771.8px;height:16px;line-height:16px;font-size:12px;color:#000000;white-space:pre;letter-spacing:-0.34px;left:-119.3px;width:400px;text-align:center;"><span style="display:inline-block;transform:scaleX(0.94);transform-origin:50% 50%">2H</span></div>
<div style="top:771.8px;height:16px;line-height:16px;font-size:12px;color:#000000;white-space:pre;letter-spacing:-0.427px;left:125px;width:318px;overflow:hidden;"><span style="display:inline-block;transform:scaleX(0.94);transform-origin:0 50%">2H Offshore</span></div>
<div style="top:771.8px;height:16px;line-height:16px;font-size:12px;color:#000000;white-space:pre;letter-spacing:-0.34px;left:283px;width:400px;text-align:center;"><span style="display:inline-block;transform:scaleX(0.94);transform-origin:50% 50%">15.Apr</span></div>
<div style="top:771.8px;height:16px;line-height:16px;font-size:12px;color:#000000;white-space:pre;letter-spacing:-0.34px;left:359px;width:400px;text-align:center;"><span style="display:inline-block;transform:scaleX(0.94);transform-origin:50% 50%">30.Oct</span></div>
<div style="top:771.8px;height:16px;line-height:16px;font-size:12px;color:#000000;white-space:pre;letter-spacing:-0.34px;left:264px;width:400px;text-align:right;"><span style="display:inline-block;transform:scaleX(0.94);transform-origin:100% 50%">28.42 w</span></div>
<div style="left:1px;top:790px;width:786px;height:18px;background:#97c4dc;"></div>
<div style="left:1px;top:808px;width:786px;height:1px;background:#c0c0c0;"></div>
<div style="left:16px;top:796px;width:9px;height:9px;background:#ffffff;border:1px solid #848484;box-sizing:border-box;"></div>
<div style="left:18px;top:800px;width:5px;height:1px;background:#000;"></div>
<div style="left:20px;top:798px;width:1px;height:5px;background:#000;"></div>
<div style="top:790.8px;height:16px;line-height:16px;font-size:12px;color:#000000;white-space:pre;letter-spacing:-0.34px;left:-119.3px;width:400px;text-align:center;"><span style="display:inline-block;transform:scaleX(0.94);transform-origin:50% 50%">HIE</span></div>
<div style="top:790.8px;height:16px;line-height:16px;font-size:12px;color:#000000;white-space:pre;letter-spacing:-0.391px;left:125px;width:318px;overflow:hidden;"><span style="display:inline-block;transform:scaleX(0.94);transform-origin:0 50%">Hitachi Energy</span></div>
<div style="top:790.8px;height:16px;line-height:16px;font-size:12px;color:#000000;white-space:pre;letter-spacing:-0.34px;left:283px;width:400px;text-align:center;"><span style="display:inline-block;transform:scaleX(0.94);transform-origin:50% 50%">08.Jun</span></div>
<div style="top:790.8px;height:16px;line-height:16px;font-size:12px;color:#000000;white-space:pre;letter-spacing:-0.34px;left:359px;width:400px;text-align:center;"><span style="display:inline-block;transform:scaleX(0.94);transform-origin:50% 50%">08.Jun</span></div>
<div style="top:790.8px;height:16px;line-height:16px;font-size:12px;color:#000000;white-space:pre;letter-spacing:-0.34px;left:264px;width:400px;text-align:right;"><span style="display:inline-block;transform:scaleX(0.94);transform-origin:100% 50%">0</span></div>
<div style="top:790.8px;height:16px;line-height:16px;font-size:12px;color:#000000;white-space:pre;letter-spacing:-0.34px;left:527px;width:400px;text-align:center;"><span style="display:inline-block;transform:scaleX(0.94);transform-origin:50% 50%">A8.A82.02</span></div>
<div style="left:31px;top:202px;width:1px;height:607px;background:#c0c0c0;"></div>
<div style="left:123px;top:202px;width:1px;height:607px;background:#c0c0c0;"></div>
<div style="left:445px;top:202px;width:1px;height:607px;background:#c0c0c0;"></div>
<div style="left:521px;top:202px;width:1px;height:607px;background:#c0c0c0;"></div>
<div style="left:597px;top:202px;width:1px;height:607px;background:#c0c0c0;"></div>
<div style="left:666px;top:202px;width:1px;height:607px;background:#c0c0c0;"></div>
<div style="left:786px;top:202px;width:1px;height:607px;background:#c0c0c0;"></div>
<div style="left:123px;top:409px;width:324px;height:20px;border:2px solid #000;box-sizing:border-box;"></div>
<div style="left:1px;top:1015px;width:784px;height:15px;background:#f0f0f0;"></div>
<div style="left:18px;top:1015px;width:17px;height:15px;background:#cdcdcd;"></div>
<svg style="left:3px;top:1016px" width="12" height="14" viewBox="0 0 12 14"><path d="M8.8 3.2L4 6.6L8.8 10" fill="none" stroke="#454545" stroke-width="2"/></svg>
<svg style="left:771px;top:1016px" width="12" height="14" viewBox="0 0 12 14"><path d="M4.2 3.2L9 6.6L4.2 10" fill="none" stroke="#454545" stroke-width="2"/></svg>
<div style="left:786px;top:202px;width:1px;height:829px;background:#6a6a6a;"></div>
<div style="left:787px;top:158px;width:5px;height:874px;background:#7c7c7c;"></div>
<div style="left:0px;top:1031px;width:1920px;height:2px;background:#6a6a6a;"></div>
<div style="left:792px;top:202px;width:1128px;height:829px;background:#ffffff;"></div>
<div style="left:792px;top:158px;width:1128px;height:44px;background:#e0e0e0;"></div>
<div style="left:792px;top:158px;width:1128px;height:1px;background:#000;"></div>
<div style="left:792px;top:200px;width:1128px;height:1px;background:#000;"></div>
<div style="left:792px;top:201px;width:1128px;height:1px;background:#808080;"></div>
<div style="left:792px;top:172px;width:1128px;height:1px;background:#000;"></div>
<div style="left:792px;top:186px;width:1128px;height:1px;background:#000;"></div>
<div style="left:792px;top:159px;width:1px;height:41px;background:#000;"></div>
<div style="top:157.5px;height:16px;line-height:16px;font-size:12px;color:#000;white-space:pre;letter-spacing:-0.34px;left:793px;width:9px;overflow:hidden;"><span style="display:inline-block;transform:scaleX(0.94);transform-origin:0 50%">Q</span></div>
<div style="left:802px;top:159px;width:1px;height:13px;background:#000;"></div>
<div style="top:157.5px;height:16px;line-height:16px;font-size:12px;color:#000;white-space:pre;letter-spacing:-0.34px;left:803px;width:30px;overflow:hidden;"><span style="display:inline-block;transform:scaleX(0.94);transform-origin:0 50%">Q2</span></div>
<div style="left:848px;top:159px;width:1px;height:13px;background:#000;"></div>
<div style="top:157.5px;height:16px;line-height:16px;font-size:12px;color:#000;white-space:pre;letter-spacing:-0.34px;left:849px;width:30px;overflow:hidden;"><span style="display:inline-block;transform:scaleX(0.94);transform-origin:0 50%">Q3</span></div>
<div style="left:894px;top:159px;width:1px;height:13px;background:#000;"></div>
<div style="top:157.5px;height:16px;line-height:16px;font-size:12px;color:#000;white-space:pre;letter-spacing:-0.34px;left:895px;width:30px;overflow:hidden;"><span style="display:inline-block;transform:scaleX(0.94);transform-origin:0 50%">Q4</span></div>
<div style="left:940px;top:159px;width:1px;height:13px;background:#000;"></div>
<div style="top:157.5px;height:16px;line-height:16px;font-size:12px;color:#000;white-space:pre;letter-spacing:-0.34px;left:941px;width:30px;overflow:hidden;"><span style="display:inline-block;transform:scaleX(0.94);transform-origin:0 50%">Q1</span></div>
<div style="left:985px;top:159px;width:1px;height:13px;background:#000;"></div>
<div style="top:157.5px;height:16px;line-height:16px;font-size:12px;color:#000;white-space:pre;letter-spacing:-0.34px;left:986px;width:30px;overflow:hidden;"><span style="display:inline-block;transform:scaleX(0.94);transform-origin:0 50%">Q2</span></div>
<div style="left:1030px;top:159px;width:1px;height:13px;background:#000;"></div>
<div style="top:157.5px;height:16px;line-height:16px;font-size:12px;color:#000;white-space:pre;letter-spacing:-0.34px;left:1031px;width:30px;overflow:hidden;"><span style="display:inline-block;transform:scaleX(0.94);transform-origin:0 50%">Q3</span></div>
<div style="left:1076px;top:159px;width:1px;height:13px;background:#000;"></div>
<div style="top:157.5px;height:16px;line-height:16px;font-size:12px;color:#000;white-space:pre;letter-spacing:-0.34px;left:1077px;width:30px;overflow:hidden;"><span style="display:inline-block;transform:scaleX(0.94);transform-origin:0 50%">Q4</span></div>
<div style="left:1122px;top:159px;width:1px;height:13px;background:#000;"></div>
<div style="top:157.5px;height:16px;line-height:16px;font-size:12px;color:#000;white-space:pre;letter-spacing:-0.34px;left:1123px;width:30px;overflow:hidden;"><span style="display:inline-block;transform:scaleX(0.94);transform-origin:0 50%">Q1</span></div>
<div style="left:1167px;top:159px;width:1px;height:13px;background:#000;"></div>
<div style="top:157.5px;height:16px;line-height:16px;font-size:12px;color:#000;white-space:pre;letter-spacing:-0.34px;left:1168px;width:30px;overflow:hidden;"><span style="display:inline-block;transform:scaleX(0.94);transform-origin:0 50%">Q2</span></div>
<div style="left:1213px;top:159px;width:1px;height:13px;background:#000;"></div>
<div style="top:157.5px;height:16px;line-height:16px;font-size:12px;color:#000;white-space:pre;letter-spacing:-0.34px;left:1214px;width:30px;overflow:hidden;"><span style="display:inline-block;transform:scaleX(0.94);transform-origin:0 50%">Q3</span></div>
<div style="left:1259px;top:159px;width:1px;height:13px;background:#000;"></div>
<div style="top:157.5px;height:16px;line-height:16px;font-size:12px;color:#000;white-space:pre;letter-spacing:-0.34px;left:1260px;width:30px;overflow:hidden;"><span style="display:inline-block;transform:scaleX(0.94);transform-origin:0 50%">Q4</span></div>
<div style="left:1305px;top:159px;width:1px;height:13px;background:#000;"></div>
<div style="top:157.5px;height:16px;line-height:16px;font-size:12px;color:#000;white-space:pre;letter-spacing:-0.34px;left:1306px;width:30px;overflow:hidden;"><span style="display:inline-block;transform:scaleX(0.94);transform-origin:0 50%">Q1</span></div>
<div style="left:1350px;top:159px;width:1px;height:13px;background:#000;"></div>
<div style="top:157.5px;height:16px;line-height:16px;font-size:12px;color:#000;white-space:pre;letter-spacing:-0.34px;left:1351px;width:30px;overflow:hidden;"><span style="display:inline-block;transform:scaleX(0.94);transform-origin:0 50%">Q2</span></div>
<div style="left:1396px;top:159px;width:1px;height:13px;background:#000;"></div>
<div style="top:157.5px;height:16px;line-height:16px;font-size:12px;color:#000;white-space:pre;letter-spacing:-0.34px;left:1397px;width:30px;overflow:hidden;"><span style="display:inline-block;transform:scaleX(0.94);transform-origin:0 50%">Q3</span></div>
<div style="left:1442px;top:159px;width:1px;height:13px;background:#000;"></div>
<div style="top:157.5px;height:16px;line-height:16px;font-size:12px;color:#000;white-space:pre;letter-spacing:-0.34px;left:1443px;width:30px;overflow:hidden;"><span style="display:inline-block;transform:scaleX(0.94);transform-origin:0 50%">Q4</span></div>
<div style="left:1488px;top:159px;width:1px;height:13px;background:#000;"></div>
<div style="top:157.5px;height:16px;line-height:16px;font-size:12px;color:#000;white-space:pre;letter-spacing:-0.34px;left:1489px;width:30px;overflow:hidden;"><span style="display:inline-block;transform:scaleX(0.94);transform-origin:0 50%">Q1</span></div>
<div style="left:1533px;top:159px;width:1px;height:13px;background:#000;"></div>
<div style="top:157.5px;height:16px;line-height:16px;font-size:12px;color:#000;white-space:pre;letter-spacing:-0.34px;left:1534px;width:30px;overflow:hidden;"><span style="display:inline-block;transform:scaleX(0.94);transform-origin:0 50%">Q2</span></div>
<div style="left:1578px;top:159px;width:1px;height:13px;background:#000;"></div>
<div style="top:157.5px;height:16px;line-height:16px;font-size:12px;color:#000;white-space:pre;letter-spacing:-0.34px;left:1579px;width:30px;overflow:hidden;"><span style="display:inline-block;transform:scaleX(0.94);transform-origin:0 50%">Q3</span></div>
<div style="left:1624px;top:159px;width:1px;height:13px;background:#000;"></div>
<div style="top:157.5px;height:16px;line-height:16px;font-size:12px;color:#000;white-space:pre;letter-spacing:-0.34px;left:1625px;width:30px;overflow:hidden;"><span style="display:inline-block;transform:scaleX(0.94);transform-origin:0 50%">Q4</span></div>
<div style="left:1670px;top:159px;width:1px;height:13px;background:#000;"></div>
<div style="top:157.5px;height:16px;line-height:16px;font-size:12px;color:#000;white-space:pre;letter-spacing:-0.34px;left:1671px;width:30px;overflow:hidden;"><span style="display:inline-block;transform:scaleX(0.94);transform-origin:0 50%">Q1</span></div>
<div style="left:1715px;top:159px;width:1px;height:13px;background:#000;"></div>
<div style="top:157.5px;height:16px;line-height:16px;font-size:12px;color:#000;white-space:pre;letter-spacing:-0.34px;left:1716px;width:30px;overflow:hidden;"><span style="display:inline-block;transform:scaleX(0.94);transform-origin:0 50%">Q2</span></div>
<div style="left:1761px;top:159px;width:1px;height:13px;background:#000;"></div>
<div style="top:157.5px;height:16px;line-height:16px;font-size:12px;color:#000;white-space:pre;letter-spacing:-0.34px;left:1762px;width:30px;overflow:hidden;"><span style="display:inline-block;transform:scaleX(0.94);transform-origin:0 50%">Q3</span></div>
<div style="left:1807px;top:159px;width:1px;height:13px;background:#000;"></div>
<div style="top:157.5px;height:16px;line-height:16px;font-size:12px;color:#000;white-space:pre;letter-spacing:-0.34px;left:1808px;width:30px;overflow:hidden;"><span style="display:inline-block;transform:scaleX(0.94);transform-origin:0 50%">Q4</span></div>
<div style="left:1853px;top:159px;width:1px;height:13px;background:#000;"></div>
<div style="top:157.5px;height:16px;line-height:16px;font-size:12px;color:#000;white-space:pre;letter-spacing:-0.34px;left:1854px;width:30px;overflow:hidden;"><span style="display:inline-block;transform:scaleX(0.94);transform-origin:0 50%">Q1</span></div>
<div style="left:1898px;top:159px;width:1px;height:13px;background:#000;"></div>
<div style="top:157.5px;height:16px;line-height:16px;font-size:12px;color:#000;white-space:pre;letter-spacing:-0.34px;left:1899px;width:21px;overflow:hidden;"><span style="display:inline-block;transform:scaleX(0.94);transform-origin:0 50%">Q2</span></div>
<div style="left:792px;top:173px;width:1px;height:13px;background:#000;"></div>
<div style="top:172.1px;height:16px;line-height:16px;font-size:12px;color:#000;white-space:pre;letter-spacing:-0.34px;left:793px;width:30px;overflow:hidden;"><span style="display:inline-block;transform:scaleX(0.94);transform-origin:0 50%">Mar</span></div>
<div style="left:817px;top:173px;width:1px;height:13px;background:#000;"></div>
<div style="top:172.1px;height:16px;line-height:16px;font-size:12px;color:#000;white-space:pre;letter-spacing:-0.34px;left:818px;width:30px;overflow:hidden;"><span style="display:inline-block;transform:scaleX(0.94);transform-origin:0 50%">May</span></div>
<div style="left:848px;top:173px;width:1px;height:13px;background:#000;"></div>
<div style="top:172.1px;height:16px;line-height:16px;font-size:12px;color:#000;white-space:pre;letter-spacing:-0.34px;left:849px;width:30px;overflow:hidden;"><span style="display:inline-block;transform:scaleX(0.94);transform-origin:0 50%">Jul</span></div>
<div style="left:879px;top:173px;width:1px;height:13px;background:#000;"></div>
<div style="top:172.1px;height:16px;line-height:16px;font-size:12px;color:#000;white-space:pre;letter-spacing:-0.34px;left:880px;width:30px;overflow:hidden;"><span style="display:inline-block;transform:scaleX(0.94);transform-origin:0 50%">Sep</span></div>
<div style="left:909px;top:173px;width:1px;height:13px;background:#000;"></div>
<div style="top:172.1px;height:16px;line-height:16px;font-size:12px;color:#000;white-space:pre;letter-spacing:-0.34px;left:910px;width:30px;overflow:hidden;"><span style="display:inline-block;transform:scaleX(0.94);transform-origin:0 50%">Nov</span></div>
<div style="left:940px;top:173px;width:1px;height:13px;background:#000;"></div>
<div style="top:172.1px;height:16px;line-height:16px;font-size:12px;color:#000;white-space:pre;letter-spacing:-0.34px;left:941px;width:30px;overflow:hidden;"><span style="display:inline-block;transform:scaleX(0.94);transform-origin:0 50%">Jan</span></div>
<div style="left:969px;top:173px;width:1px;height:13px;background:#000;"></div>
<div style="top:172.1px;height:16px;line-height:16px;font-size:12px;color:#000;white-space:pre;letter-spacing:-0.34px;left:970px;width:30px;overflow:hidden;"><span style="display:inline-block;transform:scaleX(0.94);transform-origin:0 50%">Mar</span></div>
<div style="left:1000px;top:173px;width:1px;height:13px;background:#000;"></div>
<div style="top:172.1px;height:16px;line-height:16px;font-size:12px;color:#000;white-space:pre;letter-spacing:-0.34px;left:1001px;width:30px;overflow:hidden;"><span style="display:inline-block;transform:scaleX(0.94);transform-origin:0 50%">May</span></div>
<div style="left:1030px;top:173px;width:1px;height:13px;background:#000;"></div>
<div style="top:172.1px;height:16px;line-height:16px;font-size:12px;color:#000;white-space:pre;letter-spacing:-0.34px;left:1031px;width:30px;overflow:hidden;"><span style="display:inline-block;transform:scaleX(0.94);transform-origin:0 50%">Jul</span></div>
<div style="left:1061px;top:173px;width:1px;height:13px;background:#000;"></div>
<div style="top:172.1px;height:16px;line-height:16px;font-size:12px;color:#000;white-space:pre;letter-spacing:-0.34px;left:1062px;width:30px;overflow:hidden;"><span style="display:inline-block;transform:scaleX(0.94);transform-origin:0 50%">Sep</span></div>
<div style="left:1092px;top:173px;width:1px;height:13px;background:#000;"></div>
<div style="top:172.1px;height:16px;line-height:16px;font-size:12px;color:#000;white-space:pre;letter-spacing:-0.34px;left:1093px;width:30px;overflow:hidden;"><span style="display:inline-block;transform:scaleX(0.94);transform-origin:0 50%">Nov</span></div>
<div style="left:1122px;top:173px;width:1px;height:13px;background:#000;"></div>
<div style="top:172.1px;height:16px;line-height:16px;font-size:12px;color:#000;white-space:pre;letter-spacing:-0.34px;left:1123px;width:30px;overflow:hidden;"><span style="display:inline-block;transform:scaleX(0.94);transform-origin:0 50%">Jan</span></div>
<div style="left:1152px;top:173px;width:1px;height:13px;background:#000;"></div>
<div style="top:172.1px;height:16px;line-height:16px;font-size:12px;color:#000;white-space:pre;letter-spacing:-0.34px;left:1153px;width:30px;overflow:hidden;"><span style="display:inline-block;transform:scaleX(0.94);transform-origin:0 50%">Mar</span></div>
<div style="left:1182px;top:173px;width:1px;height:13px;background:#000;"></div>
<div style="top:172.1px;height:16px;line-height:16px;font-size:12px;color:#000;white-space:pre;letter-spacing:-0.34px;left:1183px;width:30px;overflow:hidden;"><span style="display:inline-block;transform:scaleX(0.94);transform-origin:0 50%">May</span></div>
<div style="left:1213px;top:173px;width:1px;height:13px;background:#000;"></div>
<div style="top:172.1px;height:16px;line-height:16px;font-size:12px;color:#000;white-space:pre;letter-spacing:-0.34px;left:1214px;width:30px;overflow:hidden;"><span style="display:inline-block;transform:scaleX(0.94);transform-origin:0 50%">Jul</span></div>
<div style="left:1244px;top:173px;width:1px;height:13px;background:#000;"></div>
<div style="top:172.1px;height:16px;line-height:16px;font-size:12px;color:#000;white-space:pre;letter-spacing:-0.34px;left:1245px;width:30px;overflow:hidden;"><span style="display:inline-block;transform:scaleX(0.94);transform-origin:0 50%">Sep</span></div>
<div style="left:1274px;top:173px;width:1px;height:13px;background:#000;"></div>
<div style="top:172.1px;height:16px;line-height:16px;font-size:12px;color:#000;white-space:pre;letter-spacing:-0.34px;left:1275px;width:30px;overflow:hidden;"><span style="display:inline-block;transform:scaleX(0.94);transform-origin:0 50%">Nov</span></div>
<div style="left:1305px;top:173px;width:1px;height:13px;background:#000;"></div>
<div style="top:172.1px;height:16px;line-height:16px;font-size:12px;color:#000;white-space:pre;letter-spacing:-0.34px;left:1306px;width:30px;overflow:hidden;"><span style="display:inline-block;transform:scaleX(0.94);transform-origin:0 50%">Jan</span></div>
<div style="left:1335px;top:173px;width:1px;height:13px;background:#000;"></div>
<div style="top:172.1px;height:16px;line-height:16px;font-size:12px;color:#000;white-space:pre;letter-spacing:-0.34px;left:1336px;width:30px;overflow:hidden;"><span style="display:inline-block;transform:scaleX(0.94);transform-origin:0 50%">Mar</span></div>
<div style="left:1365px;top:173px;width:1px;height:13px;background:#000;"></div>
<div style="top:172.1px;height:16px;line-height:16px;font-size:12px;color:#000;white-space:pre;letter-spacing:-0.34px;left:1366px;width:30px;overflow:hidden;"><span style="display:inline-block;transform:scaleX(0.94);transform-origin:0 50%">May</span></div>
<div style="left:1396px;top:173px;width:1px;height:13px;background:#000;"></div>
<div style="top:172.1px;height:16px;line-height:16px;font-size:12px;color:#000;white-space:pre;letter-spacing:-0.34px;left:1397px;width:30px;overflow:hidden;"><span style="display:inline-block;transform:scaleX(0.94);transform-origin:0 50%">Jul</span></div>
<div style="left:1427px;top:173px;width:1px;height:13px;background:#000;"></div>
<div style="top:172.1px;height:16px;line-height:16px;font-size:12px;color:#000;white-space:pre;letter-spacing:-0.34px;left:1428px;width:30px;overflow:hidden;"><span style="display:inline-block;transform:scaleX(0.94);transform-origin:0 50%">Sep</span></div>
<div style="left:1457px;top:173px;width:1px;height:13px;background:#000;"></div>
<div style="top:172.1px;height:16px;line-height:16px;font-size:12px;color:#000;white-space:pre;letter-spacing:-0.34px;left:1458px;width:30px;overflow:hidden;"><span style="display:inline-block;transform:scaleX(0.94);transform-origin:0 50%">Nov</span></div>
<div style="left:1488px;top:173px;width:1px;height:13px;background:#000;"></div>
<div style="top:172.1px;height:16px;line-height:16px;font-size:12px;color:#000;white-space:pre;letter-spacing:-0.34px;left:1489px;width:30px;overflow:hidden;"><span style="display:inline-block;transform:scaleX(0.94);transform-origin:0 50%">Jan</span></div>
<div style="left:1517px;top:173px;width:1px;height:13px;background:#000;"></div>
<div style="top:172.1px;height:16px;line-height:16px;font-size:12px;color:#000;white-space:pre;letter-spacing:-0.34px;left:1518px;width:30px;overflow:hidden;"><span style="display:inline-block;transform:scaleX(0.94);transform-origin:0 50%">Mar</span></div>
<div style="left:1548px;top:173px;width:1px;height:13px;background:#000;"></div>
<div style="top:172.1px;height:16px;line-height:16px;font-size:12px;color:#000;white-space:pre;letter-spacing:-0.34px;left:1549px;width:30px;overflow:hidden;"><span style="display:inline-block;transform:scaleX(0.94);transform-origin:0 50%">May</span></div>
<div style="left:1578px;top:173px;width:1px;height:13px;background:#000;"></div>
<div style="top:172.1px;height:16px;line-height:16px;font-size:12px;color:#000;white-space:pre;letter-spacing:-0.34px;left:1579px;width:30px;overflow:hidden;"><span style="display:inline-block;transform:scaleX(0.94);transform-origin:0 50%">Jul</span></div>
<div style="left:1609px;top:173px;width:1px;height:13px;background:#000;"></div>
<div style="top:172.1px;height:16px;line-height:16px;font-size:12px;color:#000;white-space:pre;letter-spacing:-0.34px;left:1610px;width:30px;overflow:hidden;"><span style="display:inline-block;transform:scaleX(0.94);transform-origin:0 50%">Sep</span></div>
<div style="left:1640px;top:173px;width:1px;height:13px;background:#000;"></div>
<div style="top:172.1px;height:16px;line-height:16px;font-size:12px;color:#000;white-space:pre;letter-spacing:-0.34px;left:1641px;width:30px;overflow:hidden;"><span style="display:inline-block;transform:scaleX(0.94);transform-origin:0 50%">Nov</span></div>
<div style="left:1670px;top:173px;width:1px;height:13px;background:#000;"></div>
<div style="top:172.1px;height:16px;line-height:16px;font-size:12px;color:#000;white-space:pre;letter-spacing:-0.34px;left:1671px;width:30px;overflow:hidden;"><span style="display:inline-block;transform:scaleX(0.94);transform-origin:0 50%">Jan</span></div>
<div style="left:1700px;top:173px;width:1px;height:13px;background:#000;"></div>
<div style="top:172.1px;height:16px;line-height:16px;font-size:12px;color:#000;white-space:pre;letter-spacing:-0.34px;left:1701px;width:30px;overflow:hidden;"><span style="display:inline-block;transform:scaleX(0.94);transform-origin:0 50%">Mar</span></div>
<div style="left:1730px;top:173px;width:1px;height:13px;background:#000;"></div>
<div style="top:172.1px;height:16px;line-height:16px;font-size:12px;color:#000;white-space:pre;letter-spacing:-0.34px;left:1731px;width:30px;overflow:hidden;"><span style="display:inline-block;transform:scaleX(0.94);transform-origin:0 50%">May</span></div>
<div style="left:1761px;top:173px;width:1px;height:13px;background:#000;"></div>
<div style="top:172.1px;height:16px;line-height:16px;font-size:12px;color:#000;white-space:pre;letter-spacing:-0.34px;left:1762px;width:30px;overflow:hidden;"><span style="display:inline-block;transform:scaleX(0.94);transform-origin:0 50%">Jul</span></div>
<div style="left:1792px;top:173px;width:1px;height:13px;background:#000;"></div>
<div style="top:172.1px;height:16px;line-height:16px;font-size:12px;color:#000;white-space:pre;letter-spacing:-0.34px;left:1793px;width:30px;overflow:hidden;"><span style="display:inline-block;transform:scaleX(0.94);transform-origin:0 50%">Sep</span></div>
<div style="left:1822px;top:173px;width:1px;height:13px;background:#000;"></div>
<div style="top:172.1px;height:16px;line-height:16px;font-size:12px;color:#000;white-space:pre;letter-spacing:-0.34px;left:1823px;width:30px;overflow:hidden;"><span style="display:inline-block;transform:scaleX(0.94);transform-origin:0 50%">Nov</span></div>
<div style="left:1853px;top:173px;width:1px;height:13px;background:#000;"></div>
<div style="top:172.1px;height:16px;line-height:16px;font-size:12px;color:#000;white-space:pre;letter-spacing:-0.34px;left:1854px;width:30px;overflow:hidden;"><span style="display:inline-block;transform:scaleX(0.94);transform-origin:0 50%">Jan</span></div>
<div style="left:1882px;top:173px;width:1px;height:13px;background:#000;"></div>
<div style="top:172.1px;height:16px;line-height:16px;font-size:12px;color:#000;white-space:pre;letter-spacing:-0.34px;left:1883px;width:30px;overflow:hidden;"><span style="display:inline-block;transform:scaleX(0.94);transform-origin:0 50%">Mar</span></div>
<div style="left:1913px;top:173px;width:1px;height:13px;background:#000;"></div>
<div style="top:172.1px;height:16px;line-height:16px;font-size:12px;color:#000;white-space:pre;letter-spacing:-0.34px;left:1914px;width:6px;overflow:hidden;"><span style="display:inline-block;transform:scaleX(0.94);transform-origin:0 50%">May</span></div>
<div style="left:792px;top:187px;width:1px;height:13px;background:#000;"></div>
<div style="top:185.5px;height:16px;line-height:16px;font-size:12px;color:#000;white-space:pre;letter-spacing:-0.34px;left:793px;width:19px;overflow:hidden;"><span style="display:inline-block;transform:scaleX(0.94);transform-origin:0 50%">11</span></div>
<div style="left:812px;top:187px;width:1px;height:13px;background:#000;"></div>
<div style="top:185.5px;height:16px;line-height:16px;font-size:12px;color:#000;white-space:pre;letter-spacing:-0.34px;left:813px;width:19px;overflow:hidden;"><span style="display:inline-block;transform:scaleX(0.94);transform-origin:0 50%">20</span></div>
<div style="left:832px;top:187px;width:1px;height:13px;background:#000;"></div>
<div style="top:185.5px;height:16px;line-height:16px;font-size:12px;color:#000;white-space:pre;letter-spacing:-0.34px;left:833px;width:19px;overflow:hidden;"><span style="display:inline-block;transform:scaleX(0.94);transform-origin:0 50%">30</span></div>
<div style="left:852px;top:187px;width:1px;height:13px;background:#000;"></div>
<div style="top:185.5px;height:16px;line-height:16px;font-size:12px;color:#000;white-space:pre;letter-spacing:-0.34px;left:853px;width:19px;overflow:hidden;"><span style="display:inline-block;transform:scaleX(0.94);transform-origin:0 50%">09</span></div>
<div style="left:872px;top:187px;width:1px;height:13px;background:#000;"></div>
<div style="top:185.5px;height:16px;line-height:16px;font-size:12px;color:#000;white-space:pre;letter-spacing:-0.34px;left:873px;width:19px;overflow:hidden;"><span style="display:inline-block;transform:scaleX(0.94);transform-origin:0 50%">18</span></div>
<div style="left:892px;top:187px;width:1px;height:13px;background:#000;"></div>
<div style="top:185.5px;height:16px;line-height:16px;font-size:12px;color:#000;white-space:pre;letter-spacing:-0.34px;left:893px;width:19px;overflow:hidden;"><span style="display:inline-block;transform:scaleX(0.94);transform-origin:0 50%">27</span></div>
<div style="left:912px;top:187px;width:1px;height:13px;background:#000;"></div>
<div style="top:185.5px;height:16px;line-height:16px;font-size:12px;color:#000;white-space:pre;letter-spacing:-0.34px;left:913px;width:19px;overflow:hidden;"><span style="display:inline-block;transform:scaleX(0.94);transform-origin:0 50%">06</span></div>
<div style="left:932px;top:187px;width:1px;height:13px;background:#000;"></div>
<div style="top:185.5px;height:16px;line-height:16px;font-size:12px;color:#000;white-space:pre;letter-spacing:-0.34px;left:933px;width:19px;overflow:hidden;"><span style="display:inline-block;transform:scaleX(0.94);transform-origin:0 50%">16</span></div>
<div style="left:952px;top:187px;width:1px;height:13px;background:#000;"></div>
<div style="top:185.5px;height:16px;line-height:16px;font-size:12px;color:#000;white-space:pre;letter-spacing:-0.34px;left:953px;width:19px;overflow:hidden;"><span style="display:inline-block;transform:scaleX(0.94);transform-origin:0 50%">25</span></div>
<div style="left:972px;top:187px;width:1px;height:13px;background:#000;"></div>
<div style="top:185.5px;height:16px;line-height:16px;font-size:12px;color:#000;white-space:pre;letter-spacing:-0.34px;left:973px;width:19px;overflow:hidden;"><span style="display:inline-block;transform:scaleX(0.94);transform-origin:0 50%">06</span></div>
<div style="left:992px;top:187px;width:1px;height:13px;background:#000;"></div>
<div style="top:185.5px;height:16px;line-height:16px;font-size:12px;color:#000;white-space:pre;letter-spacing:-0.34px;left:993px;width:19px;overflow:hidden;"><span style="display:inline-block;transform:scaleX(0.94);transform-origin:0 50%">15</span></div>
<div style="left:1012px;top:187px;width:1px;height:13px;background:#000;"></div>
<div style="top:185.5px;height:16px;line-height:16px;font-size:12px;color:#000;white-space:pre;letter-spacing:-0.34px;left:1013px;width:19px;overflow:hidden;"><span style="display:inline-block;transform:scaleX(0.94);transform-origin:0 50%">25</span></div>
<div style="left:1032px;top:187px;width:1px;height:13px;background:#000;"></div>
<div style="top:185.5px;height:16px;line-height:16px;font-size:12px;color:#000;white-space:pre;letter-spacing:-0.34px;left:1033px;width:19px;overflow:hidden;"><span style="display:inline-block;transform:scaleX(0.94);transform-origin:0 50%">04</span></div>
<div style="left:1052px;top:187px;width:1px;height:13px;background:#000;"></div>
<div style="top:185.5px;height:16px;line-height:16px;font-size:12px;color:#000;white-space:pre;letter-spacing:-0.34px;left:1053px;width:19px;overflow:hidden;"><span style="display:inline-block;transform:scaleX(0.94);transform-origin:0 50%">13</span></div>
<div style="left:1072px;top:187px;width:1px;height:13px;background:#000;"></div>
<div style="top:185.5px;height:16px;line-height:16px;font-size:12px;color:#000;white-space:pre;letter-spacing:-0.34px;left:1073px;width:19px;overflow:hidden;"><span style="display:inline-block;transform:scaleX(0.94);transform-origin:0 50%">22</span></div>
<div style="left:1092px;top:187px;width:1px;height:13px;background:#000;"></div>
<div style="top:185.5px;height:16px;line-height:16px;font-size:12px;color:#000;white-space:pre;letter-spacing:-0.34px;left:1093px;width:19px;overflow:hidden;"><span style="display:inline-block;transform:scaleX(0.94);transform-origin:0 50%">01</span></div>
<div style="left:1112px;top:187px;width:1px;height:13px;background:#000;"></div>
<div style="top:185.5px;height:16px;line-height:16px;font-size:12px;color:#000;white-space:pre;letter-spacing:-0.34px;left:1113px;width:19px;overflow:hidden;"><span style="display:inline-block;transform:scaleX(0.94);transform-origin:0 50%">11</span></div>
<div style="left:1132px;top:187px;width:1px;height:13px;background:#000;"></div>
<div style="top:185.5px;height:16px;line-height:16px;font-size:12px;color:#000;white-space:pre;letter-spacing:-0.34px;left:1133px;width:19px;overflow:hidden;"><span style="display:inline-block;transform:scaleX(0.94);transform-origin:0 50%">20</span></div>
<div style="left:1152px;top:187px;width:1px;height:13px;background:#000;"></div>
<div style="top:185.5px;height:16px;line-height:16px;font-size:12px;color:#000;white-space:pre;letter-spacing:-0.34px;left:1153px;width:19px;overflow:hidden;"><span style="display:inline-block;transform:scaleX(0.94);transform-origin:0 50%">29</span></div>
<div style="left:1172px;top:187px;width:1px;height:13px;background:#000;"></div>
<div style="top:185.5px;height:16px;line-height:16px;font-size:12px;color:#000;white-space:pre;letter-spacing:-0.34px;left:1173px;width:19px;overflow:hidden;"><span style="display:inline-block;transform:scaleX(0.94);transform-origin:0 50%">09</span></div>
<div style="left:1192px;top:187px;width:1px;height:13px;background:#000;"></div>
<div style="top:185.5px;height:16px;line-height:16px;font-size:12px;color:#000;white-space:pre;letter-spacing:-0.34px;left:1193px;width:19px;overflow:hidden;"><span style="display:inline-block;transform:scaleX(0.94);transform-origin:0 50%">19</span></div>
<div style="left:1212px;top:187px;width:1px;height:13px;background:#000;"></div>
<div style="top:185.5px;height:16px;line-height:16px;font-size:12px;color:#000;white-space:pre;letter-spacing:-0.34px;left:1213px;width:19px;overflow:hidden;"><span style="display:inline-block;transform:scaleX(0.94);transform-origin:0 50%">28</span></div>
<div style="left:1232px;top:187px;width:1px;height:13px;background:#000;"></div>
<div style="top:185.5px;height:16px;line-height:16px;font-size:12px;color:#000;white-space:pre;letter-spacing:-0.34px;left:1233px;width:19px;overflow:hidden;"><span style="display:inline-block;transform:scaleX(0.94);transform-origin:0 50%">07</span></div>
<div style="left:1252px;top:187px;width:1px;height:13px;background:#000;"></div>
<div style="top:185.5px;height:16px;line-height:16px;font-size:12px;color:#000;white-space:pre;letter-spacing:-0.34px;left:1253px;width:19px;overflow:hidden;"><span style="display:inline-block;transform:scaleX(0.94);transform-origin:0 50%">16</span></div>
<div style="left:1272px;top:187px;width:1px;height:13px;background:#000;"></div>
<div style="top:185.5px;height:16px;line-height:16px;font-size:12px;color:#000;white-space:pre;letter-spacing:-0.34px;left:1273px;width:19px;overflow:hidden;"><span style="display:inline-block;transform:scaleX(0.94);transform-origin:0 50%">26</span></div>
<div style="left:1292px;top:187px;width:1px;height:13px;background:#000;"></div>
<div style="top:185.5px;height:16px;line-height:16px;font-size:12px;color:#000;white-space:pre;letter-spacing:-0.34px;left:1293px;width:19px;overflow:hidden;"><span style="display:inline-block;transform:scaleX(0.94);transform-origin:0 50%">05</span></div>
<div style="left:1312px;top:187px;width:1px;height:13px;background:#000;"></div>
<div style="top:185.5px;height:16px;line-height:16px;font-size:12px;color:#000;white-space:pre;letter-spacing:-0.34px;left:1313px;width:19px;overflow:hidden;"><span style="display:inline-block;transform:scaleX(0.94);transform-origin:0 50%">14</span></div>
<div style="left:1332px;top:187px;width:1px;height:13px;background:#000;"></div>
<div style="top:185.5px;height:16px;line-height:16px;font-size:12px;color:#000;white-space:pre;letter-spacing:-0.34px;left:1333px;width:19px;overflow:hidden;"><span style="display:inline-block;transform:scaleX(0.94);transform-origin:0 50%">23</span></div>
<div style="left:1352px;top:187px;width:1px;height:13px;background:#000;"></div>
<div style="top:185.5px;height:16px;line-height:16px;font-size:12px;color:#000;white-space:pre;letter-spacing:-0.34px;left:1353px;width:19px;overflow:hidden;"><span style="display:inline-block;transform:scaleX(0.94);transform-origin:0 50%">04</span></div>
<div style="left:1372px;top:187px;width:1px;height:13px;background:#000;"></div>
<div style="top:185.5px;height:16px;line-height:16px;font-size:12px;color:#000;white-space:pre;letter-spacing:-0.34px;left:1373px;width:19px;overflow:hidden;"><span style="display:inline-block;transform:scaleX(0.94);transform-origin:0 50%">14</span></div>
<div style="left:1392px;top:187px;width:1px;height:13px;background:#000;"></div>
<div style="top:185.5px;height:16px;line-height:16px;font-size:12px;color:#000;white-space:pre;letter-spacing:-0.34px;left:1393px;width:19px;overflow:hidden;"><span style="display:inline-block;transform:scaleX(0.94);transform-origin:0 50%">23</span></div>
<div style="left:1412px;top:187px;width:1px;height:13px;background:#000;"></div>
<div style="top:185.5px;height:16px;line-height:16px;font-size:12px;color:#000;white-space:pre;letter-spacing:-0.34px;left:1413px;width:19px;overflow:hidden;"><span style="display:inline-block;transform:scaleX(0.94);transform-origin:0 50%">02</span></div>
<div style="left:1432px;top:187px;width:1px;height:13px;background:#000;"></div>
<div style="top:185.5px;height:16px;line-height:16px;font-size:12px;color:#000;white-space:pre;letter-spacing:-0.34px;left:1433px;width:19px;overflow:hidden;"><span style="display:inline-block;transform:scaleX(0.94);transform-origin:0 50%">11</span></div>
<div style="left:1452px;top:187px;width:1px;height:13px;background:#000;"></div>
<div style="top:185.5px;height:16px;line-height:16px;font-size:12px;color:#000;white-space:pre;letter-spacing:-0.34px;left:1453px;width:19px;overflow:hidden;"><span style="display:inline-block;transform:scaleX(0.94);transform-origin:0 50%">21</span></div>
<div style="left:1472px;top:187px;width:1px;height:13px;background:#000;"></div>
<div style="top:185.5px;height:16px;line-height:16px;font-size:12px;color:#000;white-space:pre;letter-spacing:-0.34px;left:1473px;width:19px;overflow:hidden;"><span style="display:inline-block;transform:scaleX(0.94);transform-origin:0 50%">30</span></div>
<div style="left:1492px;top:187px;width:1px;height:13px;background:#000;"></div>
<div style="top:185.5px;height:16px;line-height:16px;font-size:12px;color:#000;white-space:pre;letter-spacing:-0.34px;left:1493px;width:19px;overflow:hidden;"><span style="display:inline-block;transform:scaleX(0.94);transform-origin:0 50%">09</span></div>
<div style="left:1512px;top:187px;width:1px;height:13px;background:#000;"></div>
<div style="top:185.5px;height:16px;line-height:16px;font-size:12px;color:#000;white-space:pre;letter-spacing:-0.34px;left:1513px;width:19px;overflow:hidden;"><span style="display:inline-block;transform:scaleX(0.94);transform-origin:0 50%">18</span></div>
<div style="left:1532px;top:187px;width:1px;height:13px;background:#000;"></div>
<div style="top:185.5px;height:16px;line-height:16px;font-size:12px;color:#000;white-space:pre;letter-spacing:-0.34px;left:1533px;width:19px;overflow:hidden;"><span style="display:inline-block;transform:scaleX(0.94);transform-origin:0 50%">30</span></div>
<div style="left:1552px;top:187px;width:1px;height:13px;background:#000;"></div>
<div style="top:185.5px;height:16px;line-height:16px;font-size:12px;color:#000;white-space:pre;letter-spacing:-0.34px;left:1553px;width:19px;overflow:hidden;"><span style="display:inline-block;transform:scaleX(0.94);transform-origin:0 50%">09</span></div>
<div style="left:1572px;top:187px;width:1px;height:13px;background:#000;"></div>
<div style="top:185.5px;height:16px;line-height:16px;font-size:12px;color:#000;white-space:pre;letter-spacing:-0.34px;left:1573px;width:19px;overflow:hidden;"><span style="display:inline-block;transform:scaleX(0.94);transform-origin:0 50%">18</span></div>
<div style="left:1592px;top:187px;width:1px;height:13px;background:#000;"></div>
<div style="top:185.5px;height:16px;line-height:16px;font-size:12px;color:#000;white-space:pre;letter-spacing:-0.34px;left:1593px;width:19px;overflow:hidden;"><span style="display:inline-block;transform:scaleX(0.94);transform-origin:0 50%">28</span></div>
<div style="left:1612px;top:187px;width:1px;height:13px;background:#000;"></div>
<div style="top:185.5px;height:16px;line-height:16px;font-size:12px;color:#000;white-space:pre;letter-spacing:-0.34px;left:1613px;width:19px;overflow:hidden;"><span style="display:inline-block;transform:scaleX(0.94);transform-origin:0 50%">06</span></div>
<div style="left:1632px;top:187px;width:1px;height:13px;background:#000;"></div>
<div style="top:185.5px;height:16px;line-height:16px;font-size:12px;color:#000;white-space:pre;letter-spacing:-0.34px;left:1633px;width:19px;overflow:hidden;"><span style="display:inline-block;transform:scaleX(0.94);transform-origin:0 50%">16</span></div>
<div style="left:1652px;top:187px;width:1px;height:13px;background:#000;"></div>
<div style="top:185.5px;height:16px;line-height:16px;font-size:12px;color:#000;white-space:pre;letter-spacing:-0.34px;left:1653px;width:19px;overflow:hidden;"><span style="display:inline-block;transform:scaleX(0.94);transform-origin:0 50%">25</span></div>
<div style="left:1672px;top:187px;width:1px;height:13px;background:#000;"></div>
<div style="top:185.5px;height:16px;line-height:16px;font-size:12px;color:#000;white-space:pre;letter-spacing:-0.34px;left:1673px;width:19px;overflow:hidden;"><span style="display:inline-block;transform:scaleX(0.94);transform-origin:0 50%">04</span></div>
<div style="left:1692px;top:187px;width:1px;height:13px;background:#000;"></div>
<div style="top:185.5px;height:16px;line-height:16px;font-size:12px;color:#000;white-space:pre;letter-spacing:-0.34px;left:1693px;width:19px;overflow:hidden;"><span style="display:inline-block;transform:scaleX(0.94);transform-origin:0 50%">13</span></div>
<div style="left:1712px;top:187px;width:1px;height:13px;background:#000;"></div>
<div style="top:185.5px;height:16px;line-height:16px;font-size:12px;color:#000;white-space:pre;letter-spacing:-0.34px;left:1713px;width:19px;overflow:hidden;"><span style="display:inline-block;transform:scaleX(0.94);transform-origin:0 50%">25</span></div>
<div style="left:1732px;top:187px;width:1px;height:13px;background:#000;"></div>
<div style="top:185.5px;height:16px;line-height:16px;font-size:12px;color:#000;white-space:pre;letter-spacing:-0.34px;left:1733px;width:19px;overflow:hidden;"><span style="display:inline-block;transform:scaleX(0.94);transform-origin:0 50%">04</span></div>
<div style="left:1752px;top:187px;width:1px;height:13px;background:#000;"></div>
<div style="top:185.5px;height:16px;line-height:16px;font-size:12px;color:#000;white-space:pre;letter-spacing:-0.34px;left:1753px;width:19px;overflow:hidden;"><span style="display:inline-block;transform:scaleX(0.94);transform-origin:0 50%">13</span></div>
<div style="left:1772px;top:187px;width:1px;height:13px;background:#000;"></div>
<div style="top:185.5px;height:16px;line-height:16px;font-size:12px;color:#000;white-space:pre;letter-spacing:-0.34px;left:1773px;width:19px;overflow:hidden;"><span style="display:inline-block;transform:scaleX(0.94);transform-origin:0 50%">23</span></div>
<div style="left:1792px;top:187px;width:1px;height:13px;background:#000;"></div>
<div style="top:185.5px;height:16px;line-height:16px;font-size:12px;color:#000;white-space:pre;letter-spacing:-0.34px;left:1793px;width:19px;overflow:hidden;"><span style="display:inline-block;transform:scaleX(0.94);transform-origin:0 50%">01</span></div>
<div style="left:1812px;top:187px;width:1px;height:13px;background:#000;"></div>
<div style="top:185.5px;height:16px;line-height:16px;font-size:12px;color:#000;white-space:pre;letter-spacing:-0.34px;left:1813px;width:19px;overflow:hidden;"><span style="display:inline-block;transform:scaleX(0.94);transform-origin:0 50%">11</span></div>
<div style="left:1832px;top:187px;width:1px;height:13px;background:#000;"></div>
<div style="top:185.5px;height:16px;line-height:16px;font-size:12px;color:#000;white-space:pre;letter-spacing:-0.34px;left:1833px;width:19px;overflow:hidden;"><span style="display:inline-block;transform:scaleX(0.94);transform-origin:0 50%">20</span></div>
<div style="left:1852px;top:187px;width:1px;height:13px;background:#000;"></div>
<div style="top:185.5px;height:16px;line-height:16px;font-size:12px;color:#000;white-space:pre;letter-spacing:-0.34px;left:1853px;width:19px;overflow:hidden;"><span style="display:inline-block;transform:scaleX(0.94);transform-origin:0 50%">30</span></div>
<div style="left:1872px;top:187px;width:1px;height:13px;background:#000;"></div>
<div style="top:185.5px;height:16px;line-height:16px;font-size:12px;color:#000;white-space:pre;letter-spacing:-0.34px;left:1873px;width:19px;overflow:hidden;"><span style="display:inline-block;transform:scaleX(0.94);transform-origin:0 50%">08</span></div>
<div style="left:1892px;top:187px;width:1px;height:13px;background:#000;"></div>
<div style="top:185.5px;height:16px;line-height:16px;font-size:12px;color:#000;white-space:pre;letter-spacing:-0.34px;left:1893px;width:19px;overflow:hidden;"><span style="display:inline-block;transform:scaleX(0.94);transform-origin:0 50%">19</span></div>
<div style="left:1912px;top:187px;width:1px;height:13px;background:#000;"></div>
<div style="top:185.5px;height:16px;line-height:16px;font-size:12px;color:#000;white-space:pre;letter-spacing:-0.34px;left:1913px;width:7px;overflow:hidden;"><span style="display:inline-block;transform:scaleX(0.94);transform-origin:0 50%">29</span></div>
<div style="left:802px;top:202px;width:1px;height:829px;background:#c6c6c6;"></div>
<div style="left:848px;top:202px;width:1px;height:829px;background:#c6c6c6;"></div>
<div style="left:894px;top:202px;width:1px;height:829px;background:#c6c6c6;"></div>
<div style="left:940px;top:202px;width:1px;height:829px;background:#c6c6c6;"></div>
<div style="left:985px;top:202px;width:1px;height:829px;background:#c6c6c6;"></div>
<div style="left:1030px;top:202px;width:1px;height:829px;background:#c6c6c6;"></div>
<div style="left:1076px;top:202px;width:1px;height:829px;background:#c6c6c6;"></div>
<div style="left:1122px;top:202px;width:1px;height:829px;background:#c6c6c6;"></div>
<div style="left:1167px;top:202px;width:1px;height:829px;background:#c6c6c6;"></div>
<div style="left:1213px;top:202px;width:1px;height:829px;background:#c6c6c6;"></div>
<div style="left:1259px;top:202px;width:1px;height:829px;background:#c6c6c6;"></div>
<div style="left:1305px;top:202px;width:1px;height:829px;background:#c6c6c6;"></div>
<div style="left:1350px;top:202px;width:1px;height:829px;background:#c6c6c6;"></div>
<div style="left:1396px;top:202px;width:1px;height:829px;background:#c6c6c6;"></div>
<div style="left:1442px;top:202px;width:1px;height:829px;background:#c6c6c6;"></div>
<div style="left:1488px;top:202px;width:1px;height:829px;background:#c6c6c6;"></div>
<div style="left:1533px;top:202px;width:1px;height:829px;background:#c6c6c6;"></div>
<div style="left:1578px;top:202px;width:1px;height:829px;background:#c6c6c6;"></div>
<div style="left:1624px;top:202px;width:1px;height:829px;background:#c6c6c6;"></div>
<div style="left:1670px;top:202px;width:1px;height:829px;background:#c6c6c6;"></div>
<div style="left:1715px;top:202px;width:1px;height:829px;background:#c6c6c6;"></div>
<div style="left:1761px;top:202px;width:1px;height:829px;background:#c6c6c6;"></div>
<div style="left:1807px;top:202px;width:1px;height:829px;background:#c6c6c6;"></div>
<div style="left:1853px;top:202px;width:1px;height:829px;background:#c6c6c6;"></div>
<div style="left:1898px;top:202px;width:1px;height:829px;background:#c6c6c6;"></div>
<div style="left:951px;top:202px;width:1px;height:829px;background:#e8232a;"></div>
<svg style="left:792px;top:202px" width="1128" height="829" viewBox="792 202 1128 829" shape-rendering="crispEdges"><rect x="944.85" y="203" width="852" height="7" fill="#a0ce5e"/><path d="M944.85 203H957.35V210L951.1 217L944.85 210Z" fill="#a0ce5e"/><path d="M1784.35 203H1796.85V210L1790.6 217L1784.35 210Z" fill="#a0ce5e"/><rect x="944.85" y="222" width="852" height="7" fill="#a0ce5e"/><path d="M944.85 222H957.35V229L951.1 236L944.85 229Z" fill="#a0ce5e"/><path d="M1784.35 222H1796.85V229L1790.6 236L1784.35 229Z" fill="#a0ce5e"/><rect x="944.85" y="241" width="852" height="7" fill="#a0ce5e"/><path d="M944.85 241H957.35V248L951.1 255L944.85 248Z" fill="#a0ce5e"/><path d="M1784.35 241H1796.85V248L1790.6 255L1784.35 248Z" fill="#a0ce5e"/><path d="M878.0 279H893.0L885.5 293.7Z" fill="#a0ce5e"/><path d="M878.0 298H893.0L885.5 312.7Z" fill="#a0ce5e"/><path d="M879.0 317H894.0L886.5 331.7Z" fill="#a0ce5e"/><path d="M928.5 336H943.5L936.0 350.7Z" fill="#a0ce5e"/><path d="M936.5 355H951.5L944.0 369.7Z" fill="#a0ce5e"/><path d="M943.5 374H958.5L951.0 388.7Z" fill="#a0ce5e"/><path d="M961.0 393H976.0L968.5 407.7Z" fill="#a0ce5e"/><path d="M991.5 412H1006.5L999.0 426.7Z" fill="#a0ce5e"/><path d="M995.0 431H1010.0L1002.5 445.7Z" fill="#a0ce5e"/><path d="M1000.0 450H1015.0L1007.5 464.7Z" fill="#a0ce5e"/><path d="M1039.5 469H1054.5L1047.0 483.7Z" fill="#a0ce5e"/><path d="M1085.0 488H1100.0L1092.5 502.7Z" fill="#a0ce5e"/><path d="M1115.0 507H1130.0L1122.5 521.7Z" fill="#a0ce5e"/><rect x="1161.85" y="564" width="344.4" height="7" fill="#a0ce5e"/><path d="M1161.85 564H1174.35V571L1168.1 578L1161.85 571Z" fill="#a0ce5e"/><rect x="945.35" y="583" width="560.9" height="7" fill="#a0ce5e"/><path d="M945.35 583H957.85V590L951.6 597L945.35 590Z" fill="#a0ce5e"/><rect x="952.85" y="602" width="179.5" height="7" fill="#a0ce5e"/><path d="M952.85 602H965.35V609L959.1 616L952.85 609Z" fill="#a0ce5e"/><path d="M1119.85 602H1132.35V609L1126.1 616L1119.85 609Z" fill="#a0ce5e"/><rect x="948.85" y="621" width="557.4" height="7" fill="#a0ce5e"/><path d="M948.85 621H961.35V628L955.1 635L948.85 628Z" fill="#a0ce5e"/><rect x="1293.75" y="678" width="549.1" height="7" fill="#a0ce5e"/><path d="M1293.75 678H1306.25V685L1300 692L1293.75 685Z" fill="#a0ce5e"/><path d="M1830.35 678H1842.85V685L1836.6 692L1830.35 685Z" fill="#a0ce5e"/><rect x="1293.75" y="697" width="549.1" height="7" fill="#a0ce5e"/><path d="M1293.75 697H1306.25V704L1300 711L1293.75 704Z" fill="#a0ce5e"/><path d="M1830.35 697H1842.85V704L1836.6 711L1830.35 704Z" fill="#a0ce5e"/><rect x="1604.85" y="754" width="146.0" height="7" fill="#a0ce5e"/><path d="M1604.85 754H1617.35V761L1611.1 768L1604.85 761Z" fill="#a0ce5e"/><path d="M1738.35 754H1750.85V761L1744.6 768L1738.35 761Z" fill="#a0ce5e"/><rect x="1534.35" y="773" width="112.0" height="7" fill="#a0ce5e"/><path d="M1534.35 773H1546.85V780L1540.6 787L1534.35 780Z" fill="#a0ce5e"/><path d="M1633.85 773H1646.35V780L1640.1 787L1633.85 780Z" fill="#a0ce5e"/><path d="M1561.0 792H1574.0V799L1567.5 806L1561.0 799Z" fill="#a0ce5e"/><path d="M999.0 419.5H1122.5V505 M1007.5 457.5H1122.5 M1092.5 495.5H1122.5 M1047.0 476.5H1092.5V486" fill="none" stroke="#1f4e85" stroke-width="1" shape-rendering="auto"/><path d="M1118.5 503H1126.5L1122.5 508Z M1088.5 484H1096.5L1092.5 489Z" fill="#1f4e85" shape-rendering="auto"/></svg>
<div style="top:392.7px;height:16px;line-height:16px;font-size:12px;color:#000;white-space:pre;letter-spacing:-0.34px;left:980px;"><span style="display:inline-block;transform:scaleX(0.94);transform-origin:0 50%">26.Feb</span></div>
<div style="top:411.7px;height:16px;line-height:16px;font-size:12px;color:#000;white-space:pre;letter-spacing:-0.34px;left:1010px;"><span style="display:inline-block;transform:scaleX(0.94);transform-origin:0 50%">28.Apr</span></div>
<div style="top:430.7px;height:16px;line-height:16px;font-size:12px;color:#000;white-space:pre;letter-spacing:-0.34px;left:1014px;"><span style="display:inline-block;transform:scaleX(0.94);transform-origin:0 50%">05.May</span></div>
<div style="top:449.7px;height:16px;line-height:16px;font-size:12px;color:#000;white-space:pre;letter-spacing:-0.34px;left:1019px;"><span style="display:inline-block;transform:scaleX(0.94);transform-origin:0 50%">15.May</span></div>
<div style="top:468.7px;height:16px;line-height:16px;font-size:12px;color:#000;white-space:pre;letter-spacing:-0.34px;left:1058px;"><span style="display:inline-block;transform:scaleX(0.94);transform-origin:0 50%">02.Aug</span></div>
<div style="top:487.7px;height:16px;line-height:16px;font-size:12px;color:#000;white-space:pre;letter-spacing:-0.34px;left:1104px;"><span style="display:inline-block;transform:scaleX(0.94);transform-origin:0 50%">01.Nov</span></div>
<div style="top:506.7px;height:16px;line-height:16px;font-size:12px;color:#000;white-space:pre;letter-spacing:-0.34px;left:1134px;"><span style="display:inline-block;transform:scaleX(0.94);transform-origin:0 50%">31.Dec</span></div>
<div style="left:1918px;top:158px;width:1px;height:43px;background:#000;"></div>
<div style="left:1919px;top:158px;width:1px;height:874px;background:#6a6a6a;"></div>
<div style="left:1837px;top:1017px;width:82px;height:14px;background:#ffff66;border:1px solid #3c3c3c;box-sizing:border-box;"></div>
<div style="top:1015.2px;height:16px;line-height:16px;font-size:12px;color:#000;white-space:pre;letter-spacing:-0.34px;left:1514px;width:400px;text-align:right;"><span style="display:inline-block;transform:scaleX(0.94);transform-origin:100% 50%">20.Feb.2026</span></div>
<div style="left:1px;top:1033px;width:1919px;height:26px;background:#dfdfdf;"></div>
<div style="left:5px;top:1040px;width:30px;height:14px;background:#a0ce5e;"></div>
<div style="top:1038.5px;height:16px;line-height:16px;font-size:12px;color:#000;white-space:pre;letter-spacing:-0.757px;left:39px;"><span style="display:inline-block;transform:scaleX(0.94);transform-origin:0 50%">Early</span></div>
<svg style="left:0;top:1036px" width="520" height="22" viewBox="0 1036 520 22"><defs><linearGradient id="g2" x1="0" y1="0" x2="0" y2="1"><stop offset="0" stop-color="#a3d160"/><stop offset="1" stop-color="#8cbc4d"/></linearGradient></defs><circle cx="83.5" cy="1047" r="6.4" fill="none" stroke="#a0ce5e" stroke-width="1.1"/><path d="M77.9 1042.4H89.1L83.5 1053.8Z" fill="#a0ce5e"/><path d="M209.5 1040H223.5L216.5 1054Z" fill="#a0ce5e"/><path d="M318.5 1040H332.5L325.5 1054Z" fill="#a0ce5e"/><path d="M417 1040H461V1047L455 1054L449 1047H429L423 1054L417 1047Z" fill="#a0ce5e"/></svg>
<div style="top:1038.5px;height:16px;line-height:16px;font-size:12px;color:#000;white-space:pre;letter-spacing:-0.307px;left:96px;"><span style="display:inline-block;transform:scaleX(0.94);transform-origin:0 50%">Zero duration activity</span></div>
<div style="top:1038.5px;height:16px;line-height:16px;font-size:12px;color:#000;white-space:pre;letter-spacing:-0.481px;left:229px;"><span style="display:inline-block;transform:scaleX(0.94);transform-origin:0 50%">Finish Milestone</span></div>
<div style="top:1038.5px;height:16px;line-height:16px;font-size:12px;color:#000;white-space:pre;letter-spacing:-0.421px;left:338px;"><span style="display:inline-block;transform:scaleX(0.94);transform-origin:0 50%">Start Milestone</span></div>
<div style="top:1038.5px;height:16px;line-height:16px;font-size:12px;color:#000;white-space:pre;letter-spacing:-0.861px;left:462px;"><span style="display:inline-block;transform:scaleX(0.94);transform-origin:0 50%">Summary</span></div>
<div style="top:1037.8px;height:16px;line-height:16px;font-size:12px;color:#000;white-space:pre;letter-spacing:-0.25px;left:1676px;"><span style="display:inline-block;transform:scaleX(0.94);transform-origin:0 50%">Number of activities : 1128</span></div>
<div style="top:1037.8px;height:16px;line-height:16px;font-size:12px;color:#000;white-space:pre;letter-spacing:-0.253px;left:1832.3px;"><span style="display:inline-block;transform:scaleX(0.94);transform-origin:0 50%">Row 1 to 32 of 32</span></div>
<div style="left:1197px;top:332px;width:640px;height:431px;background:#e1e1e1;border:1px solid #5f5f5f;box-sizing:border-box;box-shadow:0 4px 18px 2px rgba(0,0,0,0.32);"></div>
<div style="left:1198px;top:333px;width:638px;height:30px;background:#ffffff;"></div>
<svg style="left:1206px;top:339px" width="16" height="16" viewBox="0 0 16 16"><rect x="0" y="0" width="16" height="16" rx="2.6" fill="#e7222e"/><path d="M3.9 2.7C5.5 3.6 7.5 3 9.6 3C11.3 3 11.8 5 11.2 6.6C10.8 7.6 9.4 8.4 7.8 8.4C7.4 7 6.8 6.1 5.4 6C3.6 6 2.5 7.4 2.7 9C2.9 10.6 4.6 11.4 5.3 13.6M13.7 8.4C13.2 10.4 12 12.4 10 12.5C8 12.6 6.8 10.6 7.4 8.4" fill="none" stroke="#fff" stroke-width="1.45" stroke-linecap="round" stroke-linejoin="round"/></svg>
<div style="top:339.7px;height:16px;line-height:16px;font-size:12px;color:#000;white-space:pre;letter-spacing:-0.186px;left:1227.5px;">Group Properties</div>
<svg style="left:1710px;top:338px" width="115" height="20" viewBox="1710 338 115 20"><path d="M1717 347.5H1727.5" stroke="#1a1a1a" stroke-width="1"/><rect x="1762.5" y="342.5" width="9" height="9" fill="none" stroke="#1a1a1a" stroke-width="1"/><path d="M1808 342L1818 352M1818 342L1808 352" stroke="#1a1a1a" stroke-width="1.1"/></svg>
<div style="left:1202px;top:367px;width:51px;height:24px;background:#ffffff;"></div>
<div style="left:1253px;top:369px;width:68px;height:20px;background:#f0f0f0;border:1px solid #e8e8e8;box-sizing:border-box;"></div>
<div style="left:1321px;top:369px;width:38px;height:20px;background:#f0f0f0;border:1px solid #e8e8e8;box-sizing:border-box;"></div>
<div style="top:368.7px;height:16px;line-height:16px;font-size:12px;color:#000;white-space:pre;letter-spacing:-0.432px;left:1208.5px;"><span style="display:inline-block;transform:scaleX(0.94);transform-origin:0 50%">General</span></div>
<div style="top:371.6px;height:16px;line-height:16px;font-size:12px;color:#000;white-space:pre;letter-spacing:-0.374px;left:1258px;"><span style="display:inline-block;transform:scaleX(0.94);transform-origin:0 50%">Appearance</span></div>
<div style="top:371.6px;height:16px;line-height:16px;font-size:12px;color:#000;white-space:pre;letter-spacing:-0.524px;left:1328px;"><span style="display:inline-block;transform:scaleX(0.94);transform-origin:0 50%">Fonts</span></div>
<div style="left:1202px;top:390px;width:634px;height:318px;background:#ffffff;"></div>
<div style="left:1205px;top:391px;width:631px;height:314px;background:#f0f0f0;"></div>
<div style="left:1211px;top:392px;width:19px;height:17px;background:#e1e1e1;"></div>
<div style="left:1211px;top:392px;width:19px;height:1px;background:#ffffff;"></div>
<div style="left:1211px;top:392px;width:1px;height:17px;background:#ffffff;"></div>
<div style="left:1211px;top:408px;width:19px;height:1px;background:#696969;"></div>
<div style="left:1229px;top:392px;width:1px;height:17px;background:#696969;"></div>
<div style="left:1212px;top:407px;width:17px;height:1px;background:#a0a0a0;"></div>
<div style="left:1228px;top:393px;width:1px;height:15px;background:#a0a0a0;"></div>
<div style="top:392.5px;height:16px;line-height:16px;font-size:12px;color:#000;white-space:pre;letter-spacing:-0.655px;left:1212.6px;"><span style="display:inline-block;transform:scaleX(0.94);transform-origin:0 50%">No</span></div>
<div style="left:1230px;top:392px;width:267px;height:17px;background:#e1e1e1;"></div>
<div style="left:1230px;top:392px;width:267px;height:1px;background:#ffffff;"></div>
<div style="left:1230px;top:392px;width:1px;height:17px;background:#ffffff;"></div>
<div style="left:1230px;top:408px;width:267px;height:1px;background:#696969;"></div>
<div style="left:1496px;top:392px;width:1px;height:17px;background:#696969;"></div>
<div style="left:1231px;top:407px;width:265px;height:1px;background:#a0a0a0;"></div>
<div style="left:1495px;top:393px;width:1px;height:15px;background:#a0a0a0;"></div>
<div style="top:392.5px;height:16px;line-height:16px;font-size:12px;color:#000;white-space:pre;letter-spacing:-0.376px;left:1231.6px;"><span style="display:inline-block;transform:scaleX(0.94);transform-origin:0 50%">Group Field:</span></div>
<div style="left:1497px;top:392px;width:117px;height:17px;background:#e1e1e1;"></div>
<div style="left:1497px;top:392px;width:117px;height:1px;background:#ffffff;"></div>
<div style="left:1497px;top:392px;width:1px;height:17px;background:#ffffff;"></div>
<div style="left:1497px;top:408px;width:117px;height:1px;background:#696969;"></div>
<div style="left:1613px;top:392px;width:1px;height:17px;background:#696969;"></div>
<div style="left:1498px;top:407px;width:115px;height:1px;background:#a0a0a0;"></div>
<div style="left:1612px;top:393px;width:1px;height:15px;background:#a0a0a0;"></div>
<div style="top:392.5px;height:16px;line-height:16px;font-size:12px;color:#000;white-space:pre;letter-spacing:-0.347px;left:1498.6px;"><span style="display:inline-block;transform:scaleX(0.94);transform-origin:0 50%">Level</span></div>
<div style="left:1614px;top:392px;width:79px;height:17px;background:#e1e1e1;"></div>
<div style="left:1614px;top:392px;width:79px;height:1px;background:#ffffff;"></div>
<div style="left:1614px;top:392px;width:1px;height:17px;background:#ffffff;"></div>
<div style="left:1614px;top:408px;width:79px;height:1px;background:#696969;"></div>
<div style="left:1692px;top:392px;width:1px;height:17px;background:#696969;"></div>
<div style="left:1615px;top:407px;width:77px;height:1px;background:#a0a0a0;"></div>
<div style="left:1691px;top:393px;width:1px;height:15px;background:#a0a0a0;"></div>
<div style="top:392.5px;height:16px;line-height:16px;font-size:12px;color:#000;white-space:pre;letter-spacing:-0.635px;left:1615.6px;"><span style="display:inline-block;transform:scaleX(0.94);transform-origin:0 50%">Sort On</span></div>
<div style="left:1693px;top:392px;width:65px;height:17px;background:#e1e1e1;"></div>
<div style="left:1693px;top:392px;width:65px;height:1px;background:#ffffff;"></div>
<div style="left:1693px;top:392px;width:1px;height:17px;background:#ffffff;"></div>
<div style="left:1693px;top:408px;width:65px;height:1px;background:#696969;"></div>
<div style="left:1757px;top:392px;width:1px;height:17px;background:#696969;"></div>
<div style="left:1694px;top:407px;width:63px;height:1px;background:#a0a0a0;"></div>
<div style="left:1756px;top:393px;width:1px;height:15px;background:#a0a0a0;"></div>
<div style="top:392.5px;height:16px;line-height:16px;font-size:12px;color:#000;white-space:pre;letter-spacing:-0.499px;left:1695.8px;"><span style="display:inline-block;transform:scaleX(0.94);transform-origin:0 50%">Page Break</span></div>
<div style="top:412.9px;height:16px;line-height:16px;font-size:12px;color:#000;white-space:pre;letter-spacing:-0.34px;left:1212.6px;"><span style="display:inline-block;transform:scaleX(0.94);transform-origin:0 50%">1</span></div>
<div style="left:1232px;top:413px;width:262px;height:16px;background:#ffffff;border:1px solid #a6a6a6;box-sizing:border-box;"></div>
<div style="left:1474px;top:413px;width:20px;height:16px;background:#e1e1e1;border:1px solid #adadad;box-sizing:border-box;"></div>
<div style="left:1475px;top:414px;width:18px;height:14px;border:1px solid #b9b9b9;box-sizing:border-box;"></div>
<svg style="left:1477.5px;top:418.3px" width="12" height="10" viewBox="-6 -5 12 10"><path d="M-3.8 -1.9L0 1.9L3.8 -1.9" fill="none" stroke="#505050" stroke-width="1.0"/></svg>
<div style="left:1499px;top:413px;width:112px;height:16px;background:#ffffff;border:1px solid #a6a6a6;box-sizing:border-box;"></div>
<div style="left:1593px;top:413px;width:18px;height:16px;background:#e1e1e1;border:1px solid #adadad;box-sizing:border-box;"></div>
<div style="left:1594px;top:414px;width:16px;height:14px;border:1px solid #b9b9b9;box-sizing:border-box;"></div>
<svg style="left:1595.5px;top:418.3px" width="12" height="10" viewBox="-6 -5 12 10"><path d="M-3.8 -1.9L0 1.9L3.8 -1.9" fill="none" stroke="#505050" stroke-width="1.0"/></svg>
<div style="left:1616px;top:413px;width:76px;height:16px;background:#ffffff;border:1px solid #a6a6a6;box-sizing:border-box;"></div>
<div style="left:1674px;top:413px;width:18px;height:16px;background:#e1e1e1;border:1px solid #adadad;box-sizing:border-box;"></div>
<div style="left:1675px;top:414px;width:16px;height:14px;border:1px solid #b9b9b9;box-sizing:border-box;"></div>
<svg style="left:1676.5px;top:418.3px" width="12" height="10" viewBox="-6 -5 12 10"><path d="M-3.8 -1.9L0 1.9L3.8 -1.9" fill="none" stroke="#505050" stroke-width="1.0"/></svg>
<div style="top:412.8px;height:16px;line-height:16px;font-size:12px;color:#000;white-space:pre;letter-spacing:-0.405px;left:1233.5px;"><span style="display:inline-block;transform:scaleX(0.94);transform-origin:0 50%">WBS outline (Outline Code 1)</span></div>
<div style="top:412.8px;height:16px;line-height:16px;font-size:12px;color:#000;white-space:pre;letter-spacing:-0.39px;left:1502px;"><span style="display:inline-block;transform:scaleX(0.94);transform-origin:0 50%">Level 1</span></div>
<div style="top:412.8px;height:16px;line-height:16px;font-size:12px;color:#000;white-space:pre;letter-spacing:-0.583px;left:1619px;"><span style="display:inline-block;transform:scaleX(0.94);transform-origin:0 50%">Short</span></div>
<div style="top:434.0px;height:16px;line-height:16px;font-size:12px;color:#000;white-space:pre;letter-spacing:-0.34px;left:1212.6px;"><span style="display:inline-block;transform:scaleX(0.94);transform-origin:0 50%">2</span></div>
<div style="left:1232px;top:435px;width:262px;height:16px;background:#ffffff;border:1px solid #a6a6a6;box-sizing:border-box;"></div>
<div style="left:1474px;top:435px;width:20px;height:16px;background:#e1e1e1;border:1px solid #adadad;box-sizing:border-box;"></div>
<div style="left:1475px;top:436px;width:18px;height:14px;border:1px solid #b9b9b9;box-sizing:border-box;"></div>
<svg style="left:1477.5px;top:440.3px" width="12" height="10" viewBox="-6 -5 12 10"><path d="M-3.8 -1.9L0 1.9L3.8 -1.9" fill="none" stroke="#505050" stroke-width="1.0"/></svg>
<div style="left:1499px;top:435px;width:112px;height:16px;background:#ffffff;border:1px solid #a6a6a6;box-sizing:border-box;"></div>
<div style="left:1593px;top:435px;width:18px;height:16px;background:#e1e1e1;border:1px solid #adadad;box-sizing:border-box;"></div>
<div style="left:1594px;top:436px;width:16px;height:14px;border:1px solid #b9b9b9;box-sizing:border-box;"></div>
<svg style="left:1595.5px;top:440.3px" width="12" height="10" viewBox="-6 -5 12 10"><path d="M-3.8 -1.9L0 1.9L3.8 -1.9" fill="none" stroke="#505050" stroke-width="1.0"/></svg>
<div style="left:1616px;top:435px;width:76px;height:16px;background:#ffffff;border:1px solid #a6a6a6;box-sizing:border-box;"></div>
<div style="left:1674px;top:435px;width:18px;height:16px;background:#e1e1e1;border:1px solid #adadad;box-sizing:border-box;"></div>
<div style="left:1675px;top:436px;width:16px;height:14px;border:1px solid #b9b9b9;box-sizing:border-box;"></div>
<svg style="left:1676.5px;top:440.3px" width="12" height="10" viewBox="-6 -5 12 10"><path d="M-3.8 -1.9L0 1.9L3.8 -1.9" fill="none" stroke="#505050" stroke-width="1.0"/></svg>
<div style="left:1233.5px;top:437px;width:139px;height:13px;background:#0078d7;"></div>
<div style="left:1372.5px;top:437px;width:1px;height:13px;background:#000;"></div>
<div style="top:435.8px;height:16px;line-height:16px;font-size:12px;color:#fff;white-space:pre;letter-spacing:-0.424px;left:1233.5px;"><span style="display:inline-block;transform:scaleX(0.94);transform-origin:0 50%">Sub Contractor (Reference 1)</span></div>
<div style="top:434.8px;height:16px;line-height:16px;font-size:12px;color:#000;white-space:pre;letter-spacing:-0.583px;left:1619px;"><span style="display:inline-block;transform:scaleX(0.94);transform-origin:0 50%">Short</span></div>
<div style="top:456.9px;height:16px;line-height:16px;font-size:12px;color:#000;white-space:pre;letter-spacing:-0.34px;left:1212.6px;"><span style="display:inline-block;transform:scaleX(0.94);transform-origin:0 50%">3</span></div>
<div style="left:1232px;top:457px;width:262px;height:16px;background:#ffffff;border:1px solid #a6a6a6;box-sizing:border-box;"></div>
<div style="left:1474px;top:457px;width:20px;height:16px;background:#e1e1e1;border:1px solid #adadad;box-sizing:border-box;"></div>
<div style="left:1475px;top:458px;width:18px;height:14px;border:1px solid #b9b9b9;box-sizing:border-box;"></div>
<svg style="left:1477.5px;top:462.3px" width="12" height="10" viewBox="-6 -5 12 10"><path d="M-3.8 -1.9L0 1.9L3.8 -1.9" fill="none" stroke="#505050" stroke-width="1.0"/></svg>
<div style="left:1499px;top:457px;width:112px;height:16px;background:#ffffff;border:1px solid #a6a6a6;box-sizing:border-box;"></div>
<div style="left:1593px;top:457px;width:18px;height:16px;background:#e1e1e1;border:1px solid #adadad;box-sizing:border-box;"></div>
<div style="left:1594px;top:458px;width:16px;height:14px;border:1px solid #b9b9b9;box-sizing:border-box;"></div>
<svg style="left:1595.5px;top:462.3px" width="12" height="10" viewBox="-6 -5 12 10"><path d="M-3.8 -1.9L0 1.9L3.8 -1.9" fill="none" stroke="#505050" stroke-width="1.0"/></svg>
<div style="left:1616px;top:457px;width:76px;height:16px;background:#ffffff;border:1px solid #a6a6a6;box-sizing:border-box;"></div>
<div style="left:1674px;top:457px;width:18px;height:16px;background:#e1e1e1;border:1px solid #adadad;box-sizing:border-box;"></div>
<div style="left:1675px;top:458px;width:16px;height:14px;border:1px solid #b9b9b9;box-sizing:border-box;"></div>
<svg style="left:1676.5px;top:462.3px" width="12" height="10" viewBox="-6 -5 12 10"><path d="M-3.8 -1.9L0 1.9L3.8 -1.9" fill="none" stroke="#505050" stroke-width="1.0"/></svg>
<div style="top:456.8px;height:16px;line-height:16px;font-size:12px;color:#000;white-space:pre;letter-spacing:-0.405px;left:1233.5px;"><span style="display:inline-block;transform:scaleX(0.94);transform-origin:0 50%">WBS outline (Outline Code 1)</span></div>
<div style="top:456.8px;height:16px;line-height:16px;font-size:12px;color:#000;white-space:pre;letter-spacing:-0.39px;left:1502px;"><span style="display:inline-block;transform:scaleX(0.94);transform-origin:0 50%">Level 2</span></div>
<div style="top:456.8px;height:16px;line-height:16px;font-size:12px;color:#000;white-space:pre;letter-spacing:-0.583px;left:1619px;"><span style="display:inline-block;transform:scaleX(0.94);transform-origin:0 50%">Short</span></div>
<div style="top:479.0px;height:16px;line-height:16px;font-size:12px;color:#000;white-space:pre;letter-spacing:-0.34px;left:1212.6px;"><span style="display:inline-block;transform:scaleX(0.94);transform-origin:0 50%">4</span></div>
<div style="left:1232px;top:480px;width:262px;height:16px;background:#ffffff;border:1px solid #a6a6a6;box-sizing:border-box;"></div>
<div style="left:1474px;top:480px;width:20px;height:16px;background:#e1e1e1;border:1px solid #adadad;box-sizing:border-box;"></div>
<div style="left:1475px;top:481px;width:18px;height:14px;border:1px solid #b9b9b9;box-sizing:border-box;"></div>
<svg style="left:1477.5px;top:485.3px" width="12" height="10" viewBox="-6 -5 12 10"><path d="M-3.8 -1.9L0 1.9L3.8 -1.9" fill="none" stroke="#505050" stroke-width="1.0"/></svg>
<div style="left:1499px;top:480px;width:112px;height:16px;background:#ffffff;border:1px solid #a6a6a6;box-sizing:border-box;"></div>
<div style="left:1593px;top:480px;width:18px;height:16px;background:#e1e1e1;border:1px solid #adadad;box-sizing:border-box;"></div>
<div style="left:1594px;top:481px;width:16px;height:14px;border:1px solid #b9b9b9;box-sizing:border-box;"></div>
<svg style="left:1595.5px;top:485.3px" width="12" height="10" viewBox="-6 -5 12 10"><path d="M-3.8 -1.9L0 1.9L3.8 -1.9" fill="none" stroke="#505050" stroke-width="1.0"/></svg>
<div style="left:1616px;top:480px;width:76px;height:16px;background:#ffffff;border:1px solid #a6a6a6;box-sizing:border-box;"></div>
<div style="left:1674px;top:480px;width:18px;height:16px;background:#e1e1e1;border:1px solid #adadad;box-sizing:border-box;"></div>
<div style="left:1675px;top:481px;width:16px;height:14px;border:1px solid #b9b9b9;box-sizing:border-box;"></div>
<svg style="left:1676.5px;top:485.3px" width="12" height="10" viewBox="-6 -5 12 10"><path d="M-3.8 -1.9L0 1.9L3.8 -1.9" fill="none" stroke="#505050" stroke-width="1.0"/></svg>
<div style="top:479.8px;height:16px;line-height:16px;font-size:12px;color:#000;white-space:pre;letter-spacing:-0.405px;left:1233.5px;"><span style="display:inline-block;transform:scaleX(0.94);transform-origin:0 50%">WBS outline (Outline Code 1)</span></div>
<div style="top:479.8px;height:16px;line-height:16px;font-size:12px;color:#000;white-space:pre;letter-spacing:-0.39px;left:1502px;"><span style="display:inline-block;transform:scaleX(0.94);transform-origin:0 50%">Level 3</span></div>
<div style="top:479.8px;height:16px;line-height:16px;font-size:12px;color:#000;white-space:pre;letter-spacing:-0.583px;left:1619px;"><span style="display:inline-block;transform:scaleX(0.94);transform-origin:0 50%">Short</span></div>
<div style="top:501.0px;height:16px;line-height:16px;font-size:12px;color:#000;white-space:pre;letter-spacing:-0.34px;left:1212.6px;"><span style="display:inline-block;transform:scaleX(0.94);transform-origin:0 50%">5</span></div>
<div style="left:1232px;top:501px;width:262px;height:18px;background:#ffffff;border:1px solid #a6a6a6;box-sizing:border-box;"></div>
<div style="left:1474px;top:501px;width:20px;height:18px;background:#e1e1e1;border:1px solid #adadad;box-sizing:border-box;"></div>
<div style="left:1475px;top:502px;width:18px;height:16px;border:1px solid #b9b9b9;box-sizing:border-box;"></div>
<svg style="left:1477.5px;top:507.3px" width="12" height="10" viewBox="-6 -5 12 10"><path d="M-3.8 -1.9L0 1.9L3.8 -1.9" fill="none" stroke="#505050" stroke-width="1.0"/></svg>
<div style="left:1499px;top:501px;width:112px;height:18px;background:#ffffff;border:1px solid #a6a6a6;box-sizing:border-box;"></div>
<div style="left:1593px;top:501px;width:18px;height:18px;background:#e1e1e1;border:1px solid #adadad;box-sizing:border-box;"></div>
<div style="left:1594px;top:502px;width:16px;height:16px;border:1px solid #b9b9b9;box-sizing:border-box;"></div>
<svg style="left:1595.5px;top:507.3px" width="12" height="10" viewBox="-6 -5 12 10"><path d="M-3.8 -1.9L0 1.9L3.8 -1.9" fill="none" stroke="#505050" stroke-width="1.0"/></svg>
<div style="left:1616px;top:501px;width:76px;height:18px;background:#ffffff;border:1px solid #a6a6a6;box-sizing:border-box;"></div>
<div style="left:1674px;top:501px;width:18px;height:18px;background:#e1e1e1;border:1px solid #adadad;box-sizing:border-box;"></div>
<div style="left:1675px;top:502px;width:16px;height:16px;border:1px solid #b9b9b9;box-sizing:border-box;"></div>
<svg style="left:1676.5px;top:507.3px" width="12" height="10" viewBox="-6 -5 12 10"><path d="M-3.8 -1.9L0 1.9L3.8 -1.9" fill="none" stroke="#505050" stroke-width="1.0"/></svg>
<div style="top:523.3px;height:16px;line-height:16px;font-size:12px;color:#000;white-space:pre;letter-spacing:-0.34px;left:1212.6px;"><span style="display:inline-block;transform:scaleX(0.94);transform-origin:0 50%">6</span></div>
<div style="left:1232px;top:524px;width:262px;height:16px;background:#ffffff;border:1px solid #a6a6a6;box-sizing:border-box;"></div>
<div style="left:1474px;top:524px;width:20px;height:16px;background:#e1e1e1;border:1px solid #adadad;box-sizing:border-box;"></div>
<div style="left:1475px;top:525px;width:18px;height:14px;border:1px solid #b9b9b9;box-sizing:border-box;"></div>
<svg style="left:1477.5px;top:529.3px" width="12" height="10" viewBox="-6 -5 12 10"><path d="M-3.8 -1.9L0 1.9L3.8 -1.9" fill="none" stroke="#505050" stroke-width="1.0"/></svg>
<div style="left:1499px;top:524px;width:112px;height:16px;background:#ffffff;border:1px solid #a6a6a6;box-sizing:border-box;"></div>
<div style="left:1593px;top:524px;width:18px;height:16px;background:#e1e1e1;border:1px solid #adadad;box-sizing:border-box;"></div>
<div style="left:1594px;top:525px;width:16px;height:14px;border:1px solid #b9b9b9;box-sizing:border-box;"></div>
<svg style="left:1595.5px;top:529.3px" width="12" height="10" viewBox="-6 -5 12 10"><path d="M-3.8 -1.9L0 1.9L3.8 -1.9" fill="none" stroke="#505050" stroke-width="1.0"/></svg>
<div style="left:1616px;top:524px;width:76px;height:16px;background:#ffffff;border:1px solid #a6a6a6;box-sizing:border-box;"></div>
<div style="left:1674px;top:524px;width:18px;height:16px;background:#e1e1e1;border:1px solid #adadad;box-sizing:border-box;"></div>
<div style="left:1675px;top:525px;width:16px;height:14px;border:1px solid #b9b9b9;box-sizing:border-box;"></div>
<svg style="left:1676.5px;top:529.3px" width="12" height="10" viewBox="-6 -5 12 10"><path d="M-3.8 -1.9L0 1.9L3.8 -1.9" fill="none" stroke="#505050" stroke-width="1.0"/></svg>
<div style="top:545.7px;height:16px;line-height:16px;font-size:12px;color:#000;white-space:pre;letter-spacing:-0.34px;left:1212.6px;"><span style="display:inline-block;transform:scaleX(0.94);transform-origin:0 50%">7</span></div>
<div style="left:1232px;top:546px;width:262px;height:17px;background:#ffffff;border:1px solid #a6a6a6;box-sizing:border-box;"></div>
<div style="left:1474px;top:546px;width:20px;height:17px;background:#e1e1e1;border:1px solid #adadad;box-sizing:border-box;"></div>
<div style="left:1475px;top:547px;width:18px;height:15px;border:1px solid #b9b9b9;box-sizing:border-box;"></div>
<svg style="left:1477.5px;top:551.8px" width="12" height="10" viewBox="-6 -5 12 10"><path d="M-3.8 -1.9L0 1.9L3.8 -1.9" fill="none" stroke="#505050" stroke-width="1.0"/></svg>
<div style="left:1499px;top:546px;width:112px;height:17px;background:#ffffff;border:1px solid #a6a6a6;box-sizing:border-box;"></div>
<div style="left:1593px;top:546px;width:18px;height:17px;background:#e1e1e1;border:1px solid #adadad;box-sizing:border-box;"></div>
<div style="left:1594px;top:547px;width:16px;height:15px;border:1px solid #b9b9b9;box-sizing:border-box;"></div>
<svg style="left:1595.5px;top:551.8px" width="12" height="10" viewBox="-6 -5 12 10"><path d="M-3.8 -1.9L0 1.9L3.8 -1.9" fill="none" stroke="#505050" stroke-width="1.0"/></svg>
<div style="left:1616px;top:546px;width:76px;height:17px;background:#ffffff;border:1px solid #a6a6a6;box-sizing:border-box;"></div>
<div style="left:1674px;top:546px;width:18px;height:17px;background:#e1e1e1;border:1px solid #adadad;box-sizing:border-box;"></div>
<div style="left:1675px;top:547px;width:16px;height:15px;border:1px solid #b9b9b9;box-sizing:border-box;"></div>
<svg style="left:1676.5px;top:551.8px" width="12" height="10" viewBox="-6 -5 12 10"><path d="M-3.8 -1.9L0 1.9L3.8 -1.9" fill="none" stroke="#505050" stroke-width="1.0"/></svg>
<div style="top:568.6px;height:16px;line-height:16px;font-size:12px;color:#000;white-space:pre;letter-spacing:-0.34px;left:1212.6px;"><span style="display:inline-block;transform:scaleX(0.94);transform-origin:0 50%">8</span></div>
<div style="left:1232px;top:569px;width:262px;height:17px;background:#ffffff;border:1px solid #a6a6a6;box-sizing:border-box;"></div>
<div style="left:1474px;top:569px;width:20px;height:17px;background:#e1e1e1;border:1px solid #adadad;box-sizing:border-box;"></div>
<div style="left:1475px;top:570px;width:18px;height:15px;border:1px solid #b9b9b9;box-sizing:border-box;"></div>
<svg style="left:1477.5px;top:574.8px" width="12" height="10" viewBox="-6 -5 12 10"><path d="M-3.8 -1.9L0 1.9L3.8 -1.9" fill="none" stroke="#505050" stroke-width="1.0"/></svg>
<div style="left:1499px;top:569px;width:112px;height:17px;background:#ffffff;border:1px solid #a6a6a6;box-sizing:border-box;"></div>
<div style="left:1593px;top:569px;width:18px;height:17px;background:#e1e1e1;border:1px solid #adadad;box-sizing:border-box;"></div>
<div style="left:1594px;top:570px;width:16px;height:15px;border:1px solid #b9b9b9;box-sizing:border-box;"></div>
<svg style="left:1595.5px;top:574.8px" width="12" height="10" viewBox="-6 -5 12 10"><path d="M-3.8 -1.9L0 1.9L3.8 -1.9" fill="none" stroke="#505050" stroke-width="1.0"/></svg>
<div style="left:1616px;top:569px;width:76px;height:17px;background:#ffffff;border:1px solid #a6a6a6;box-sizing:border-box;"></div>
<div style="left:1674px;top:569px;width:18px;height:17px;background:#e1e1e1;border:1px solid #adadad;box-sizing:border-box;"></div>
<div style="left:1675px;top:570px;width:16px;height:15px;border:1px solid #b9b9b9;box-sizing:border-box;"></div>
<svg style="left:1676.5px;top:574.8px" width="12" height="10" viewBox="-6 -5 12 10"><path d="M-3.8 -1.9L0 1.9L3.8 -1.9" fill="none" stroke="#505050" stroke-width="1.0"/></svg>
<div style="top:591.3px;height:16px;line-height:16px;font-size:12px;color:#000;white-space:pre;letter-spacing:-0.34px;left:1212.6px;"><span style="display:inline-block;transform:scaleX(0.94);transform-origin:0 50%">9</span></div>
<div style="left:1232px;top:592px;width:262px;height:16px;background:#ffffff;border:1px solid #a6a6a6;box-sizing:border-box;"></div>
<div style="left:1474px;top:592px;width:20px;height:16px;background:#e1e1e1;border:1px solid #adadad;box-sizing:border-box;"></div>
<div style="left:1475px;top:593px;width:18px;height:14px;border:1px solid #b9b9b9;box-sizing:border-box;"></div>
<svg style="left:1477.5px;top:597.3px" width="12" height="10" viewBox="-6 -5 12 10"><path d="M-3.8 -1.9L0 1.9L3.8 -1.9" fill="none" stroke="#505050" stroke-width="1.0"/></svg>
<div style="left:1499px;top:592px;width:112px;height:16px;background:#ffffff;border:1px solid #a6a6a6;box-sizing:border-box;"></div>
<div style="left:1593px;top:592px;width:18px;height:16px;background:#e1e1e1;border:1px solid #adadad;box-sizing:border-box;"></div>
<div style="left:1594px;top:593px;width:16px;height:14px;border:1px solid #b9b9b9;box-sizing:border-box;"></div>
<svg style="left:1595.5px;top:597.3px" width="12" height="10" viewBox="-6 -5 12 10"><path d="M-3.8 -1.9L0 1.9L3.8 -1.9" fill="none" stroke="#505050" stroke-width="1.0"/></svg>
<div style="left:1616px;top:592px;width:76px;height:16px;background:#ffffff;border:1px solid #a6a6a6;box-sizing:border-box;"></div>
<div style="left:1674px;top:592px;width:18px;height:16px;background:#e1e1e1;border:1px solid #adadad;box-sizing:border-box;"></div>
<div style="left:1675px;top:593px;width:16px;height:14px;border:1px solid #b9b9b9;box-sizing:border-box;"></div>
<svg style="left:1676.5px;top:597.3px" width="12" height="10" viewBox="-6 -5 12 10"><path d="M-3.8 -1.9L0 1.9L3.8 -1.9" fill="none" stroke="#505050" stroke-width="1.0"/></svg>
<div style="top:612.6px;height:16px;line-height:16px;font-size:12px;color:#000;white-space:pre;letter-spacing:-0.34px;left:1212.6px;"><span style="display:inline-block;transform:scaleX(0.94);transform-origin:0 50%">10</span></div>
<div style="left:1232px;top:613px;width:262px;height:18px;background:#ffffff;border:1px solid #a6a6a6;box-sizing:border-box;"></div>
<div style="left:1474px;top:613px;width:20px;height:18px;background:#e1e1e1;border:1px solid #adadad;box-sizing:border-box;"></div>
<div style="left:1475px;top:614px;width:18px;height:16px;border:1px solid #b9b9b9;box-sizing:border-box;"></div>
<svg style="left:1477.5px;top:619.3px" width="12" height="10" viewBox="-6 -5 12 10"><path d="M-3.8 -1.9L0 1.9L3.8 -1.9" fill="none" stroke="#505050" stroke-width="1.0"/></svg>
<div style="left:1499px;top:613px;width:112px;height:18px;background:#ffffff;border:1px solid #a6a6a6;box-sizing:border-box;"></div>
<div style="left:1593px;top:613px;width:18px;height:18px;background:#e1e1e1;border:1px solid #adadad;box-sizing:border-box;"></div>
<div style="left:1594px;top:614px;width:16px;height:16px;border:1px solid #b9b9b9;box-sizing:border-box;"></div>
<svg style="left:1595.5px;top:619.3px" width="12" height="10" viewBox="-6 -5 12 10"><path d="M-3.8 -1.9L0 1.9L3.8 -1.9" fill="none" stroke="#505050" stroke-width="1.0"/></svg>
<div style="left:1616px;top:613px;width:76px;height:18px;background:#ffffff;border:1px solid #a6a6a6;box-sizing:border-box;"></div>
<div style="left:1674px;top:613px;width:18px;height:18px;background:#e1e1e1;border:1px solid #adadad;box-sizing:border-box;"></div>
<div style="left:1675px;top:614px;width:16px;height:16px;border:1px solid #b9b9b9;box-sizing:border-box;"></div>
<svg style="left:1676.5px;top:619.3px" width="12" height="10" viewBox="-6 -5 12 10"><path d="M-3.8 -1.9L0 1.9L3.8 -1.9" fill="none" stroke="#505050" stroke-width="1.0"/></svg>
<div style="left:1712px;top:414px;width:13px;height:13px;background:#ffffff;border:1px solid #333333;box-sizing:border-box;"></div>
<div style="left:1215px;top:642px;width:13px;height:13px;background:#ffffff;border:1px solid #333333;box-sizing:border-box;"></div>
<svg style="left:1215px;top:642px" width="13" height="13" viewBox="0 0 13 13"><path d="M2.6 6.4L5.2 9L10.4 3.4" fill="none" stroke="#3a3a3a" stroke-width="1.2"/></svg>
<div style="top:641.4px;height:16px;line-height:16px;font-size:12px;color:#000;white-space:pre;letter-spacing:-0.388px;left:1234.2px;"><span style="display:inline-block;transform:scaleX(0.94);transform-origin:0 50%">Indentation</span></div>
<div style="top:641.4px;height:16px;line-height:16px;font-size:12px;color:#000;white-space:pre;letter-spacing:-0.353px;left:1298.3px;"><span style="display:inline-block;transform:scaleX(0.94);transform-origin:0 50%">Indentation Units:</span></div>
<div style="left:1384px;top:641px;width:48px;height:14px;background:#ffffff;border:1px solid #ababab;box-sizing:border-box;"></div>
<div style="top:641.2px;height:16px;line-height:16px;font-size:12px;color:#000;white-space:pre;letter-spacing:-0.34px;left:1013.5px;width:400px;text-align:right;"><span style="display:inline-block;transform:scaleX(0.94);transform-origin:100% 50%">10</span></div>
<div style="left:1415px;top:642px;width:16px;height:12px;background:#f0f0f0;"></div>
<div style="left:1415px;top:647.5px;width:16px;height:1px;background:#c8c8c8;"></div>
<svg style="left:1415px;top:642px" width="16" height="12" viewBox="0 0 16 12"><path d="M4.5 5L8 1.5L11.5 5Z M4.5 7.5L8 11L11.5 7.5Z" fill="#111"/></svg>
<div style="top:661.5px;height:16px;line-height:16px;font-size:12px;color:#000;white-space:pre;letter-spacing:-0.471px;left:1216.3px;"><span style="display:inline-block;transform:scaleX(0.94);transform-origin:0 50%">Final horizontal lines:</span></div>
<div style="left:1319px;top:662px;width:115px;height:16px;background:#ffffff;border:1px solid #a6a6a6;box-sizing:border-box;"></div>
<div style="left:1416px;top:662px;width:18px;height:16px;background:#e1e1e1;border:1px solid #adadad;box-sizing:border-box;"></div>
<div style="left:1417px;top:663px;width:16px;height:14px;border:1px solid #b9b9b9;box-sizing:border-box;"></div>
<svg style="left:1418.5px;top:667.3px" width="12" height="10" viewBox="-6 -5 12 10"><path d="M-3.8 -1.9L0 1.9L3.8 -1.9" fill="none" stroke="#505050" stroke-width="1.0"/></svg>
<div style="top:661.8px;height:16px;line-height:16px;font-size:12px;color:#000;white-space:pre;letter-spacing:-0.47px;left:1322.2px;"><span style="display:inline-block;transform:scaleX(0.94);transform-origin:0 50%">Invisible</span></div>
<div style="left:1462px;top:651px;width:66px;height:23px;background:#e1e1e1;border:1px solid #adadad;box-sizing:border-box;"></div>
<div style="top:654.8px;height:16px;line-height:16px;font-size:12px;color:#000;white-space:pre;letter-spacing:-0.434px;left:1295px;width:400px;text-align:center;"><span style="display:inline-block;transform:scaleX(0.94);transform-origin:50% 50%"><u>M</u>ove Up</span></div>
<div style="left:1545px;top:651px;width:66px;height:23px;background:#e1e1e1;border:1px solid #adadad;box-sizing:border-box;"></div>
<div style="top:654.8px;height:16px;line-height:16px;font-size:12px;color:#000;white-space:pre;letter-spacing:-0.508px;left:1378px;width:400px;text-align:center;"><span style="display:inline-block;transform:scaleX(0.94);transform-origin:50% 50%">Move Down</span></div>
<div style="left:1627px;top:651px;width:66px;height:23px;background:#e1e1e1;border:1px solid #adadad;box-sizing:border-box;"></div>
<div style="top:654.8px;height:16px;line-height:16px;font-size:12px;color:#000;white-space:pre;letter-spacing:-0.564px;left:1460px;width:400px;text-align:center;"><span style="display:inline-block;transform:scaleX(0.94);transform-origin:50% 50%">Clear All</span></div>
<div style="left:1215px;top:686px;width:13px;height:13px;background:#ffffff;border:1px solid #333333;box-sizing:border-box;"></div>
<div style="top:684.8px;height:16px;line-height:16px;font-size:12px;color:#000;white-space:pre;letter-spacing:-0.484px;left:1233.7px;"><span style="display:inline-block;transform:scaleX(0.94);transform-origin:0 50%">Create &lt;NONE&gt; groups</span></div>
<div style="left:1213px;top:719px;width:13px;height:13px;background:#ffffff;border:1px solid #333333;box-sizing:border-box;"></div>
<svg style="left:1213px;top:719px" width="13" height="13" viewBox="0 0 13 13"><path d="M2.6 6.4L5.2 9L10.4 3.4" fill="none" stroke="#3a3a3a" stroke-width="1.2"/></svg>
<div style="top:717.8px;height:16px;line-height:16px;font-size:12px;color:#000;white-space:pre;letter-spacing:-0.375px;left:1228px;"><span style="display:inline-block;transform:scaleX(0.94);transform-origin:0 50%">Always sort groups by ID/Sort Field</span></div>
<div style="left:1752px;top:719px;width:66px;height:23px;background:#e1e1e1;border:1px solid #adadad;box-sizing:border-box;"></div>
<div style="top:722.8px;height:16px;line-height:16px;font-size:12px;color:#000;white-space:pre;letter-spacing:-0.645px;left:1585px;width:400px;text-align:center;"><span style="display:inline-block;transform:scaleX(0.94);transform-origin:50% 50%"><u>A</u>pply</span></div>
<svg style="left:1424px;top:438px" width="28" height="36" viewBox="-3 -3 28 36"><defs><clipPath id="cc"><path d="M0 0V28L5.9 21.6L9.6 29.4L14.8 26.3L11.3 20.4H20Z"/></clipPath></defs><path d="M0 0V28L5.9 21.6L9.6 29.4L14.8 26.3L11.3 20.4H20Z" fill="#000"/><path d="M0 0V28L5.9 21.6L9.6 29.4L14.8 26.3L11.3 20.4H20Z" fill="none" stroke="#fff" stroke-width="2.6" clip-path="url(#cc)"/><path d="M0 0V28L5.9 21.6L9.6 29.4L14.8 26.3L11.3 20.4H20Z" fill="none" stroke="#3a3a3a" stroke-width="0.7"/></svg>
</body></html>
